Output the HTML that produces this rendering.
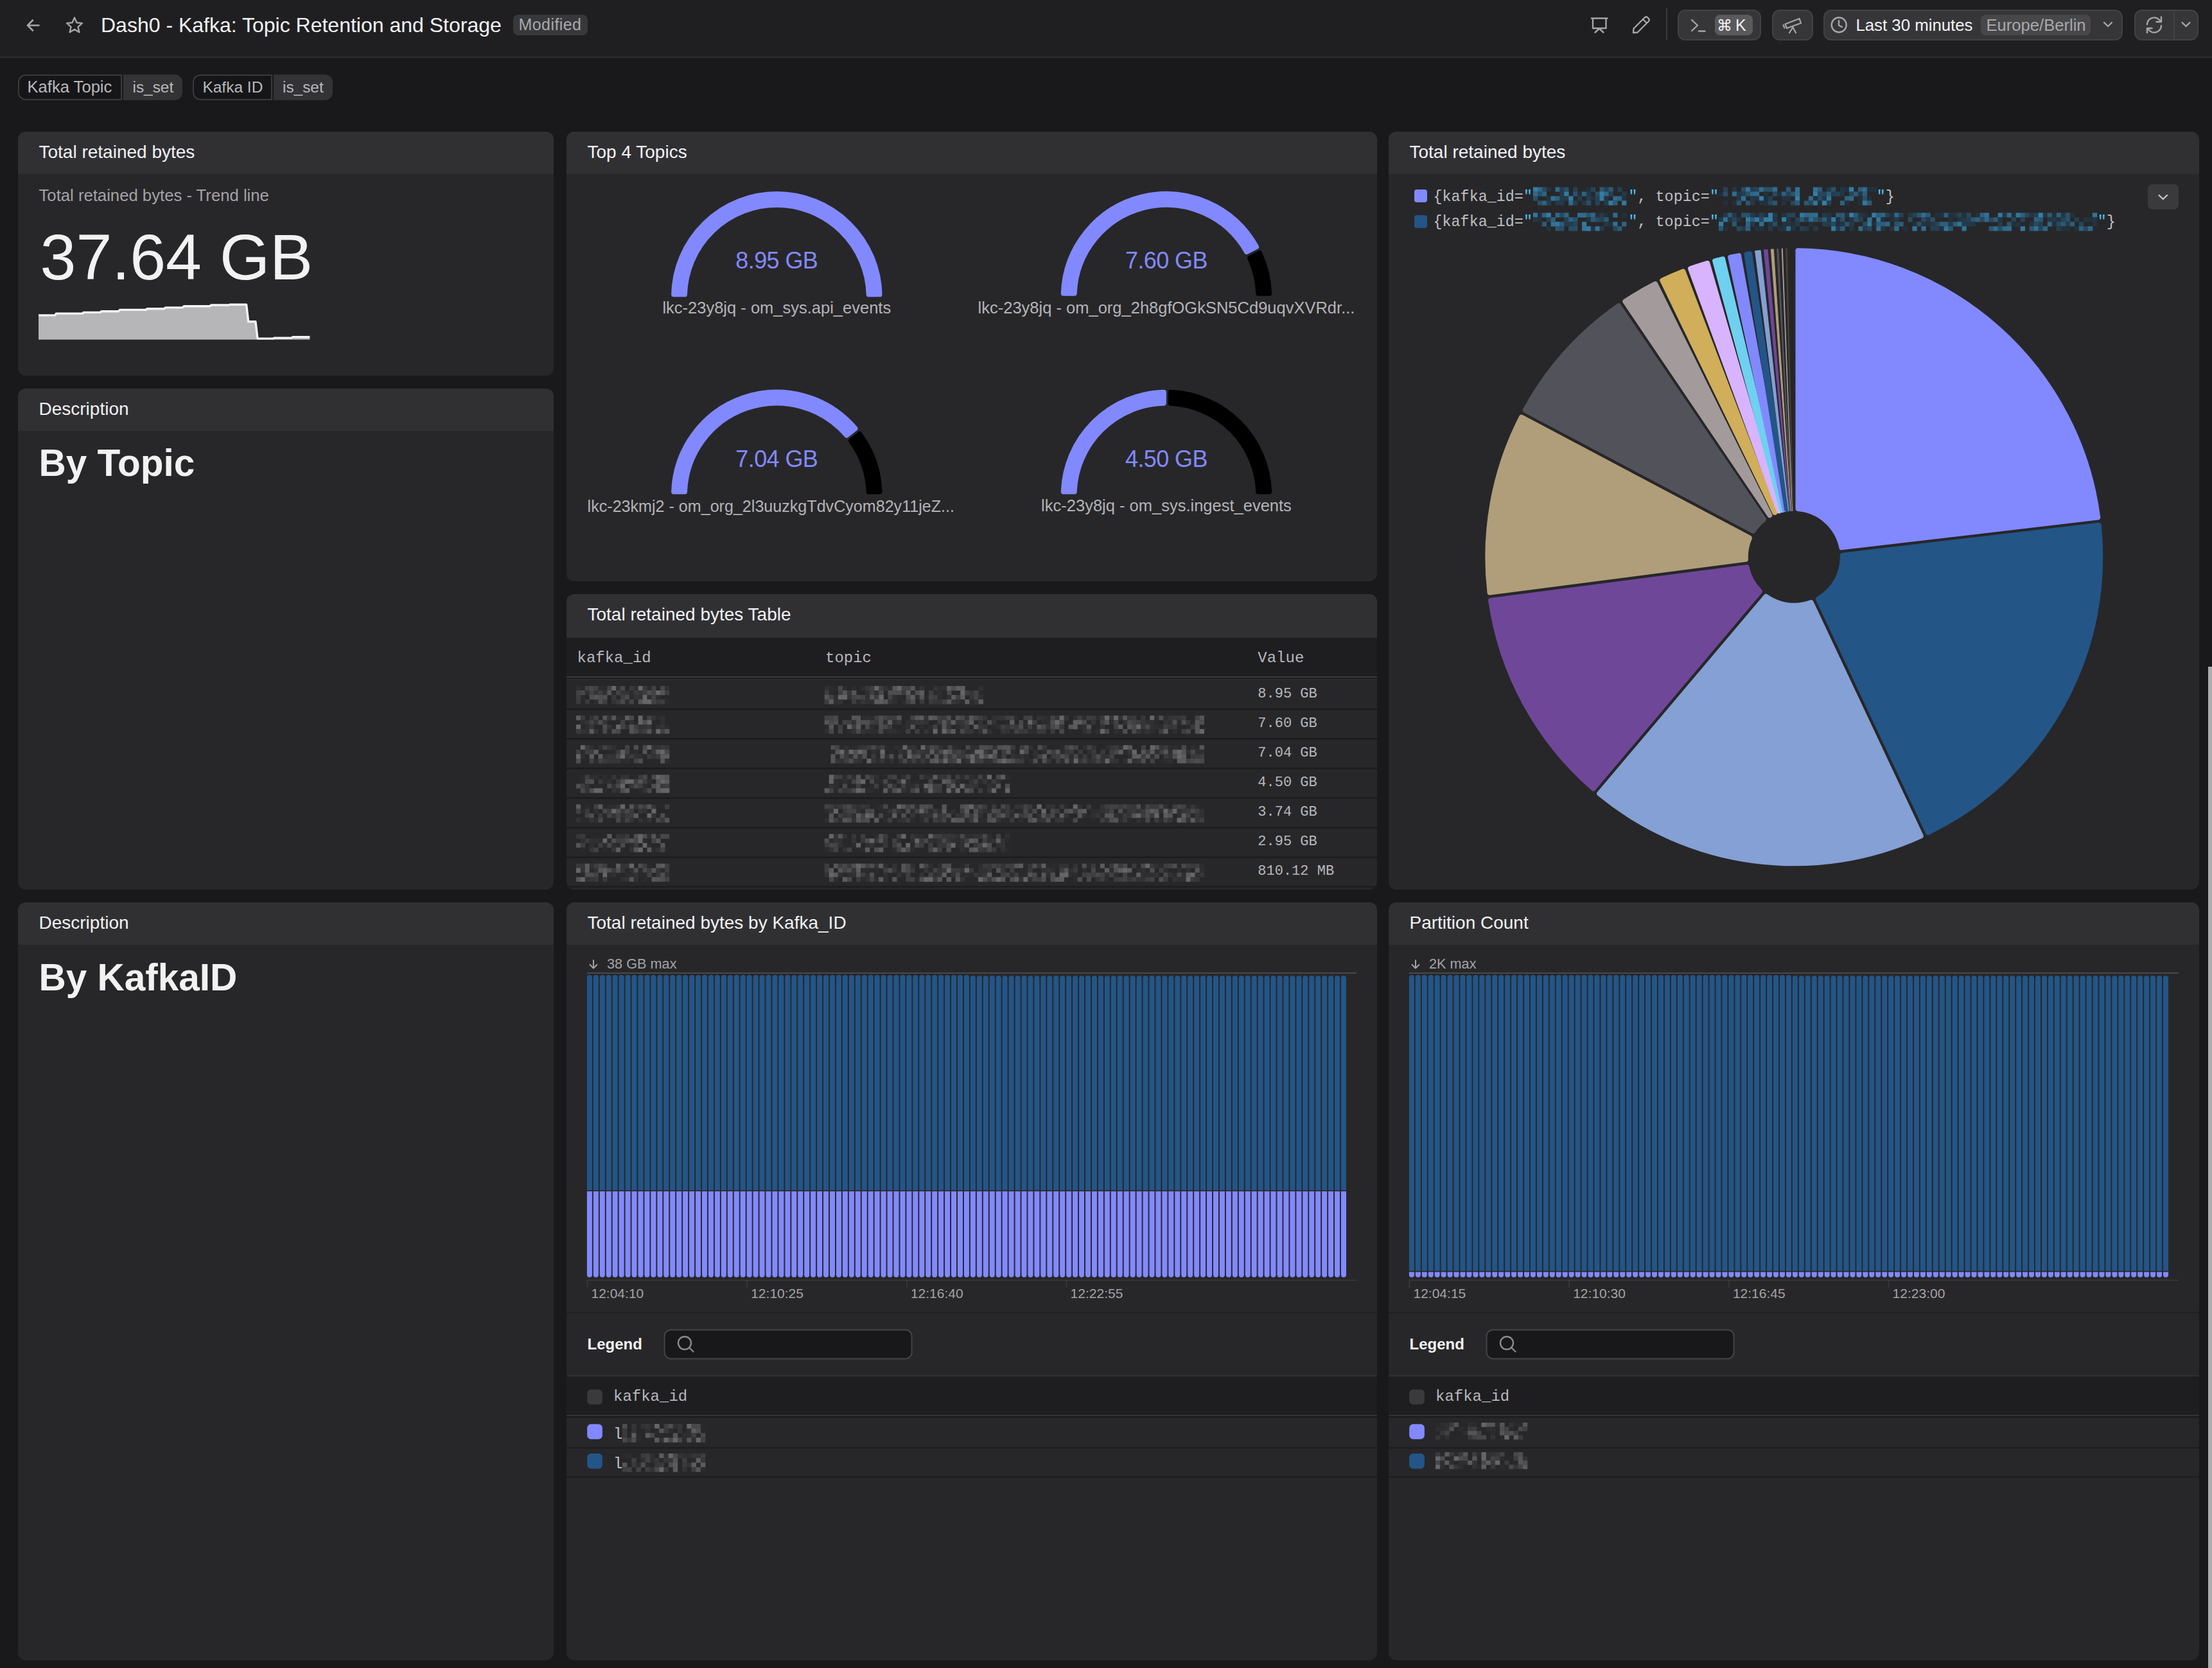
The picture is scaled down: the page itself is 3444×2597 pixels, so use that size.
<!DOCTYPE html><html><head><meta charset="utf-8"><style>
html,body{margin:0;padding:0;background:#19191b;width:3444px;height:2597px;overflow:hidden}
.t{position:absolute;white-space:nowrap;line-height:1;font-family:"Liberation Sans",sans-serif}
.r{position:absolute}
svg{position:absolute;left:0;top:0}
</style></head><body>
<div class="r" style="left:0.0px;top:0.0px;width:3444.0px;height:88.0px;background:#1f1f21;"></div>
<div class="r" style="left:0.0px;top:88.0px;width:3444.0px;height:2.0px;background:#303033;"></div>
<div class="t" style="left:157.0px;top:23.2px;font-size:32px;color:#f2f2f3;font-weight:400;font-family:'Liberation Sans', sans-serif;">Dash0 - Kafka: Topic Retention and Storage</div>
<div class="r" style="left:799.0px;top:23.2px;width:115.6px;height:31.6px;background:#38383b;border-radius:8px"></div>
<div class="t" style="left:807.6px;top:26.0px;font-size:25px;color:#a8a8ac;font-weight:400;font-family:'Liberation Sans', sans-serif;letter-spacing:0.4px">Modified</div>
<div class="r" style="left:28px;top:116px;width:161.5px;height:39.5px;box-sizing:border-box;border:2px solid #3a3a3d;border-right-width:2px;border-radius:12px 0 0 12px;background:#161618"></div>
<div class="r" style="left:192.0px;top:116px;width:92.0px;height:39.5px;background:#333336;border-radius:0 12px 12px 0"></div>
<div class="t" style="left:42.5px;top:122.8px;font-size:25.6px;color:#b9b9bc;font-weight:400;font-family:'Liberation Sans', sans-serif;">Kafka Topic</div>
<div class="t" style="left:206.5px;top:123.8px;font-size:24.4px;color:#b9b9bc;font-weight:400;font-family:'Liberation Sans', sans-serif;">is_set</div>
<div class="r" style="left:300.3px;top:116px;width:123.39999999999998px;height:39.5px;box-sizing:border-box;border:2px solid #3a3a3d;border-right-width:2px;border-radius:12px 0 0 12px;background:#161618"></div>
<div class="r" style="left:426.2px;top:116px;width:91.80000000000001px;height:39.5px;background:#333336;border-radius:0 12px 12px 0"></div>
<div class="t" style="left:315.4px;top:123.8px;font-size:24.5px;color:#b9b9bc;font-weight:400;font-family:'Liberation Sans', sans-serif;">Kafka ID</div>
<div class="t" style="left:440.0px;top:123.8px;font-size:24.4px;color:#b9b9bc;font-weight:400;font-family:'Liberation Sans', sans-serif;">is_set</div>
<svg width="3444" height="100" style="position:absolute;left:0;top:0"><path d="M60.5 39.5 H43.5 M51 31.5 L43 39.5 L51 47.5" stroke="#a6a6aa" stroke-width="2.6" fill="none" stroke-linecap="round" stroke-linejoin="round"/><polygon points="116.0,27.4 119.4,35.3 128.0,36.1 121.5,41.8 123.4,50.2 116.0,45.8 108.6,50.2 110.5,41.8 104.0,36.1 112.6,35.3" stroke="#a6a6aa" stroke-width="2.4" fill="none" stroke-linejoin="round"/><path d="M2478 28.5 H2502.5 M2480 28.5 V44 H2500.5 V28.5 M2483.5 50.5 L2490 44.5 L2496.5 50.5" stroke="#a6a6aa" stroke-width="2.4" fill="none" stroke-linecap="round" stroke-linejoin="round"/><path d="M2543 51 L2543.5 44.5 L2561 27 Q2563 25.5 2565 27 L2567 29 Q2568.5 31 2567 33 L2549.5 50.5 Z M2558 30 L2564 36" stroke="#a6a6aa" stroke-width="2.4" fill="none" stroke-linecap="round" stroke-linejoin="round"/><rect x="2594" y="13" width="2" height="50" fill="#3a3a3d"/></svg>
<div class="r" style="left:2612.3px;top:15px;width:130.19999999999982px;height:47.5px;box-sizing:border-box;background:#363639;border:2px solid #424245;border-radius:12px;"></div>
<div class="r" style="left:2670.0px;top:23.0px;width:58.7px;height:32.0px;background:#5a5a5d;border-radius:8px"></div>
<div class="r" style="left:2759.2px;top:15px;width:63.5px;height:47.5px;box-sizing:border-box;background:#363639;border:2px solid #424245;border-radius:12px;"></div>
<div class="r" style="left:2839px;top:15px;width:466.1999999999998px;height:47.5px;box-sizing:border-box;background:#363639;border:2px solid #424245;border-radius:12px;"></div>
<div class="r" style="left:3084.3px;top:22.5px;width:170.9px;height:32.5px;background:#47474a;border-radius:8px"></div>
<div class="r" style="left:3322.7px;top:15px;width:100.5px;height:47.5px;box-sizing:border-box;background:#363639;border:2px solid #424245;border-radius:12px;"></div>
<div class="r" style="left:3384.0px;top:15.0px;width:2.0px;height:47.5px;background:#424245;"></div>
<div class="t" style="left:2889.4px;top:26.7px;font-size:25.8px;color:#f2f2f3;font-weight:400;font-family:'Liberation Sans', sans-serif;">Last 30 minutes</div>
<div class="t" style="left:3092.5px;top:26.8px;font-size:25.6px;color:#a8a8ac;font-weight:400;font-family:'Liberation Sans', sans-serif;">Europe/Berlin</div>
<div class="t" style="left:2673.0px;top:28.2px;font-size:24px;color:#f2f2f3;font-weight:400;font-family:'Liberation Sans', sans-serif;">⌘</div>
<div class="t" style="left:2702.0px;top:27.3px;font-size:25px;color:#f2f2f3;font-weight:400;font-family:'Liberation Sans', sans-serif;">K</div>
<svg width="3444" height="100" style="position:absolute;left:0;top:0"><path d="M2634 31 L2643 39.5 L2634 48 M2645 48.5 H2654.5" stroke="#a6a6aa" stroke-width="2.4" fill="none" stroke-linecap="round" stroke-linejoin="round"/><path d="M2779.5 37.5 L2801.5 29 L2804 36 L2782 44 Z M2776.5 39 L2778.5 43.5 M2791.5 42.5 L2786 51 M2791.5 42.5 L2796 51" stroke="#a6a6aa" stroke-width="2.2" fill="none" stroke-linecap="round" stroke-linejoin="round"/><circle cx="2863.2" cy="38.8" r="11.5" stroke="#a6a6aa" stroke-width="2.4" fill="none"/><path d="M2863 32 V39.5 L2868 42" stroke="#a6a6aa" stroke-width="2.4" fill="none" stroke-linecap="round"/><path d="M3276 35 L3282 41 L3288 35" stroke="#a6a6aa" stroke-width="2.4" fill="none" stroke-linecap="round" stroke-linejoin="round"/><path d="M3397.5 35 L3403.5 41 L3409.5 35" stroke="#a6a6aa" stroke-width="2.4" fill="none" stroke-linecap="round" stroke-linejoin="round"/><path d="M3343 38 A11 11 0 0 1 3362 31 L3365 34 M3365 26.5 V34 H3357.5 M3365 40 A11 11 0 0 1 3346 47 L3343 44 M3343 51 V44 H3350.5" stroke="#a6a6aa" stroke-width="2.4" fill="none" stroke-linecap="round" stroke-linejoin="round"/></svg>
<div class="r" style="left:28px;top:205px;width:834px;height:380px;background:#272729;border-radius:12px;overflow:hidden"><div class="r" style="left:0;top:0;width:100%;height:66px;background:#303033"></div></div>
<div class="t" style="left:60.5px;top:222.8px;font-size:28px;color:#f2f2f3;font-weight:400;font-family:'Liberation Sans', sans-serif;">Total retained bytes</div>
<div class="r" style="left:28px;top:605px;width:834px;height:780px;background:#272729;border-radius:12px;overflow:hidden"><div class="r" style="left:0;top:0;width:100%;height:66px;background:#303033"></div></div>
<div class="t" style="left:60.5px;top:622.8px;font-size:28px;color:#f2f2f3;font-weight:400;font-family:'Liberation Sans', sans-serif;">Description</div>
<div class="r" style="left:882px;top:205px;width:1262px;height:700px;background:#272729;border-radius:12px;overflow:hidden"><div class="r" style="left:0;top:0;width:100%;height:66px;background:#303033"></div></div>
<div class="t" style="left:914.5px;top:222.8px;font-size:28px;color:#f2f2f3;font-weight:400;font-family:'Liberation Sans', sans-serif;">Top 4 Topics</div>
<div class="r" style="left:882px;top:925px;width:1262px;height:460px;background:#272729;border-radius:12px;overflow:hidden"><div class="r" style="left:0;top:0;width:100%;height:68px;background:#303033"></div></div>
<div class="t" style="left:914.5px;top:942.8px;font-size:28px;color:#f2f2f3;font-weight:400;font-family:'Liberation Sans', sans-serif;">Total retained bytes Table</div>
<div class="r" style="left:2162px;top:205px;width:1262px;height:1180px;background:#272729;border-radius:12px;overflow:hidden"><div class="r" style="left:0;top:0;width:100%;height:66px;background:#303033"></div></div>
<div class="t" style="left:2194.5px;top:222.8px;font-size:28px;color:#f2f2f3;font-weight:400;font-family:'Liberation Sans', sans-serif;">Total retained bytes</div>
<div class="r" style="left:28px;top:1405px;width:834px;height:1180px;background:#272729;border-radius:12px;overflow:hidden"><div class="r" style="left:0;top:0;width:100%;height:66px;background:#303033"></div></div>
<div class="t" style="left:60.5px;top:1422.8px;font-size:28px;color:#f2f2f3;font-weight:400;font-family:'Liberation Sans', sans-serif;">Description</div>
<div class="r" style="left:882px;top:1405px;width:1262px;height:1180px;background:#272729;border-radius:12px;overflow:hidden"><div class="r" style="left:0;top:0;width:100%;height:66px;background:#303033"></div></div>
<div class="t" style="left:914.5px;top:1422.8px;font-size:28px;color:#f2f2f3;font-weight:400;font-family:'Liberation Sans', sans-serif;">Total retained bytes by Kafka_ID</div>
<div class="r" style="left:2162px;top:1405px;width:1262px;height:1180px;background:#272729;border-radius:12px;overflow:hidden"><div class="r" style="left:0;top:0;width:100%;height:66px;background:#303033"></div></div>
<div class="t" style="left:2194.5px;top:1422.8px;font-size:28px;color:#f2f2f3;font-weight:400;font-family:'Liberation Sans', sans-serif;">Partition Count</div>
<div class="t" style="left:60.5px;top:292.2px;font-size:25.7px;color:#a3a3a7;font-weight:400;font-family:'Liberation Sans', sans-serif;">Total retained bytes - Trend line</div>
<div class="t" style="left:62.5px;top:349.9px;font-size:100.5px;color:#f2f2f3;font-weight:400;font-family:'Liberation Sans', sans-serif;">37.64 GB</div>
<svg width="900" height="600"><path d="M60,528.8 L60,490.9 L85.6,490.9 L87.6,488.1 L128.3,488.1 L130.3,486.4 L155.8,486.4 L157.8,484.8 L184.3,484.8 L186.7,482.4 L227,482.4 L229,480.7 L255.5,480.7 L257.5,478.9 L284,478.9 L286.4,476.7 L326.7,476.7 L328.7,475 L356.2,475 L358.2,474.2 L383.6,474.2 L386.7,500.7 L397.9,500.7 L401,527.1 L425.3,527.1 L427.4,526.1 L453.8,526.1 L455.9,524.7 L482.3,524.7 L482.3,528.8 Z" fill="#b6b6b9"/><path d="M60,490.9 L85.6,490.9 L87.6,488.1 L128.3,488.1 L130.3,486.4 L155.8,486.4 L157.8,484.8 L184.3,484.8 L186.7,482.4 L227,482.4 L229,480.7 L255.5,480.7 L257.5,478.9 L284,478.9 L286.4,476.7 L326.7,476.7 L328.7,475 L356.2,475 L358.2,474.2 L383.6,474.2 L386.7,500.7 L397.9,500.7 L401,527.1 L425.3,527.1 L427.4,526.1 L453.8,526.1 L455.9,524.7 L482.3,524.7" stroke="#f4f4f5" stroke-width="3.4" fill="none" stroke-linejoin="round"/></svg>
<div class="t" style="left:60.5px;top:691.5px;font-size:58.5px;color:#f2f2f3;font-weight:700;font-family:'Liberation Sans', sans-serif;">By Topic</div>
<div class="t" style="left:60.5px;top:1493.0px;font-size:58.5px;color:#f2f2f3;font-weight:700;font-family:'Liberation Sans', sans-serif;">By KafkaID</div>
<svg width="3444" height="1000"><path d="M1049.10,458.30 A160.3,160.3 0 0 1 1369.60,458.30 L1352.69,458.30 A143.4,143.4 0 0 0 1066.01,458.30 Z" fill="#8289ff" stroke="#8289ff" stroke-width="8" stroke-linejoin="round"/><path d="M1655.79,456.80 A160.3,160.3 0 0 1 1956.04,384.30 L1940.99,392.02 A143.4,143.4 0 0 0 1672.71,456.80 Z" fill="#8289ff" stroke="#8289ff" stroke-width="8" stroke-linejoin="round"/><path d="M1961.06,394.09 A160.3,160.3 0 0 1 1976.21,456.80 L1959.29,456.80 A143.4,143.4 0 0 0 1946.01,401.80 Z" fill="#000" stroke="#000" stroke-width="8" stroke-linejoin="round"/><path d="M1049.14,765.50 A160.3,160.3 0 0 1 1331.46,667.15 L1318.21,677.66 A143.4,143.4 0 0 0 1066.06,765.50 Z" fill="#8289ff" stroke="#8289ff" stroke-width="8" stroke-linejoin="round"/><path d="M1338.30,675.77 A160.3,160.3 0 0 1 1369.56,765.50 L1352.64,765.50 A143.4,143.4 0 0 0 1325.05,686.28 Z" fill="#000" stroke="#000" stroke-width="8" stroke-linejoin="round"/><path d="M1655.79,765.50 A160.3,160.3 0 0 1 1811.91,610.75 L1811.76,627.66 A143.4,143.4 0 0 0 1672.71,765.50 Z" fill="#8289ff" stroke="#8289ff" stroke-width="8" stroke-linejoin="round"/><path d="M1822.91,610.85 A160.3,160.3 0 0 1 1976.21,765.50 L1959.29,765.50 A143.4,143.4 0 0 0 1822.76,627.76 Z" fill="#000" stroke="#000" stroke-width="8" stroke-linejoin="round"/></svg>
<div class="t" style="left:209.3px;width:2000px;text-align:center;top:388.3px;font-size:36px;color:#8289ff;font-weight:400;font-family:'Liberation Sans', sans-serif;letter-spacing:-0.6px">8.95 GB</div>
<div class="t" style="left:209.3px;width:2000px;text-align:center;top:466.5px;font-size:25.5px;color:#b4b4b8;font-weight:400;font-family:'Liberation Sans', sans-serif;">lkc-23y8jq - om_sys.api_events</div>
<div class="t" style="left:816.0px;width:2000px;text-align:center;top:388.3px;font-size:36px;color:#8289ff;font-weight:400;font-family:'Liberation Sans', sans-serif;letter-spacing:-0.6px">7.60 GB</div>
<div class="t" style="left:816.0px;width:2000px;text-align:center;top:466.5px;font-size:25.5px;color:#b4b4b8;font-weight:400;font-family:'Liberation Sans', sans-serif;">lkc-23y8jq - om_org_2h8gfOGkSN5Cd9uqvXVRdr...</div>
<div class="t" style="left:209.3px;width:2000px;text-align:center;top:697.0px;font-size:36px;color:#8289ff;font-weight:400;font-family:'Liberation Sans', sans-serif;letter-spacing:-0.6px">7.04 GB</div>
<div class="t" style="left:200.3px;width:2000px;text-align:center;top:775.5px;font-size:25.1px;color:#b4b4b8;font-weight:400;font-family:'Liberation Sans', sans-serif;">lkc-23kmj2 - om_org_2l3uuzkgTdvCyom82y11jeZ...</div>
<div class="t" style="left:816.0px;width:2000px;text-align:center;top:697.0px;font-size:36px;color:#8289ff;font-weight:400;font-family:'Liberation Sans', sans-serif;letter-spacing:-0.6px">4.50 GB</div>
<div class="t" style="left:816.0px;width:2000px;text-align:center;top:775.2px;font-size:25.5px;color:#b4b4b8;font-weight:400;font-family:'Liberation Sans', sans-serif;">lkc-23y8jq - om_sys.ingest_events</div>
<div class="r" style="left:882.0px;top:993.0px;width:1262.0px;height:60.5px;background:#1e1e21;"></div>
<div class="r" style="left:882.0px;top:1053.0px;width:1262.0px;height:2.0px;background:#3a3a3d;"></div>
<div class="r" style="left:882.0px;top:1055.0px;width:1262.0px;height:2.0px;background:#1c1c1f;"></div>
<div class="r" style="left:882.0px;top:1057.0px;width:1262.0px;height:1.6px;background:#2d2d30;"></div>
<div class="t" style="left:898.5px;top:1012.6px;font-size:24px;color:#b8b8bc;font-weight:400;font-family:'Liberation Mono', monospace;">kafka_id</div>
<div class="t" style="left:1285.0px;top:1012.6px;font-size:24px;color:#b8b8bc;font-weight:400;font-family:'Liberation Mono', monospace;">topic</div>
<div class="t" style="left:1958.3px;top:1012.6px;font-size:24px;color:#b8b8bc;font-weight:400;font-family:'Liberation Mono', monospace;">Value</div>
<div class="t" style="left:1958.3px;top:1069.8px;font-size:22px;color:#b8b8bc;font-weight:400;font-family:'Liberation Mono', monospace;">8.95 GB</div>
<div class="t" style="left:1958.3px;top:1115.9px;font-size:22px;color:#b8b8bc;font-weight:400;font-family:'Liberation Mono', monospace;">7.60 GB</div>
<div class="t" style="left:1958.3px;top:1162.0px;font-size:22px;color:#b8b8bc;font-weight:400;font-family:'Liberation Mono', monospace;">7.04 GB</div>
<div class="t" style="left:1958.3px;top:1208.1px;font-size:22px;color:#b8b8bc;font-weight:400;font-family:'Liberation Mono', monospace;">4.50 GB</div>
<div class="t" style="left:1958.3px;top:1254.2px;font-size:22px;color:#b8b8bc;font-weight:400;font-family:'Liberation Mono', monospace;">3.74 GB</div>
<div class="t" style="left:1958.3px;top:1300.3px;font-size:22px;color:#b8b8bc;font-weight:400;font-family:'Liberation Mono', monospace;">2.95 GB</div>
<div class="t" style="left:1958.3px;top:1346.4px;font-size:22px;color:#b8b8bc;font-weight:400;font-family:'Liberation Mono', monospace;">810.12 MB</div>
<svg width="3444" height="1400"><rect x="882" y="1103.1" width="1262" height="2.2" fill="#1b1b1e"/><rect x="897.0" y="1068.0" width="7.2" height="7.3" fill="#2e2e30"/><rect x="903.9" y="1068.0" width="7.2" height="7.3" fill="#2a2a2c"/><rect x="910.8" y="1068.0" width="7.2" height="7.3" fill="#424244"/><rect x="917.7" y="1068.0" width="7.2" height="7.3" fill="#48484a"/><rect x="924.6" y="1068.0" width="7.2" height="7.3" fill="#424244"/><rect x="931.5" y="1068.0" width="7.2" height="7.3" fill="#2c2c2e"/><rect x="938.4" y="1068.0" width="7.2" height="7.3" fill="#2c2c2e"/><rect x="945.3" y="1068.0" width="7.2" height="7.3" fill="#424244"/><rect x="952.2" y="1068.0" width="7.2" height="7.3" fill="#666668"/><rect x="959.1" y="1068.0" width="7.2" height="7.3" fill="#303032"/><rect x="966.0" y="1068.0" width="7.2" height="7.3" fill="#48484a"/><rect x="979.9" y="1068.0" width="7.2" height="7.3" fill="#3a3a3c"/><rect x="986.8" y="1068.0" width="7.2" height="7.3" fill="#303032"/><rect x="993.7" y="1068.0" width="7.2" height="7.3" fill="#666668"/><rect x="1000.6" y="1068.0" width="7.2" height="7.3" fill="#3a3a3c"/><rect x="1007.5" y="1068.0" width="7.2" height="7.3" fill="#2c2c2e"/><rect x="1014.4" y="1068.0" width="7.2" height="7.3" fill="#424244"/><rect x="1028.2" y="1068.0" width="7.2" height="7.3" fill="#48484a"/><rect x="1035.1" y="1068.0" width="7.2" height="7.3" fill="#303032"/><rect x="897.0" y="1075.0" width="7.2" height="7.3" fill="#424244"/><rect x="903.9" y="1075.0" width="7.2" height="7.3" fill="#48484a"/><rect x="910.8" y="1075.0" width="7.2" height="7.3" fill="#303032"/><rect x="917.7" y="1075.0" width="7.2" height="7.3" fill="#424244"/><rect x="924.6" y="1075.0" width="7.2" height="7.3" fill="#363638"/><rect x="931.5" y="1075.0" width="7.2" height="7.3" fill="#3e3e40"/><rect x="938.4" y="1075.0" width="7.2" height="7.3" fill="#303032"/><rect x="945.3" y="1075.0" width="7.2" height="7.3" fill="#555557"/><rect x="952.2" y="1075.0" width="7.2" height="7.3" fill="#2c2c2e"/><rect x="959.1" y="1075.0" width="7.2" height="7.3" fill="#424244"/><rect x="966.0" y="1075.0" width="7.2" height="7.3" fill="#363638"/><rect x="973.0" y="1075.0" width="7.2" height="7.3" fill="#333335"/><rect x="979.9" y="1075.0" width="7.2" height="7.3" fill="#2c2c2e"/><rect x="986.8" y="1075.0" width="7.2" height="7.3" fill="#3a3a3c"/><rect x="993.7" y="1075.0" width="7.2" height="7.3" fill="#363638"/><rect x="1000.6" y="1075.0" width="7.2" height="7.3" fill="#3e3e40"/><rect x="1007.5" y="1075.0" width="7.2" height="7.3" fill="#4e4e50"/><rect x="1014.4" y="1075.0" width="7.2" height="7.3" fill="#424244"/><rect x="1021.3" y="1075.0" width="7.2" height="7.3" fill="#666668"/><rect x="1028.2" y="1075.0" width="7.2" height="7.3" fill="#555557"/><rect x="1035.1" y="1075.0" width="7.2" height="7.3" fill="#3e3e40"/><rect x="897.0" y="1082.0" width="7.2" height="7.3" fill="#3e3e40"/><rect x="903.9" y="1082.0" width="7.2" height="7.3" fill="#2c2c2e"/><rect x="917.7" y="1082.0" width="7.2" height="7.3" fill="#4e4e50"/><rect x="924.6" y="1082.0" width="7.2" height="7.3" fill="#555557"/><rect x="931.5" y="1082.0" width="7.2" height="7.3" fill="#4e4e50"/><rect x="938.4" y="1082.0" width="7.2" height="7.3" fill="#4e4e50"/><rect x="952.2" y="1082.0" width="7.2" height="7.3" fill="#3a3a3c"/><rect x="966.0" y="1082.0" width="7.2" height="7.3" fill="#3e3e40"/><rect x="973.0" y="1082.0" width="7.2" height="7.3" fill="#48484a"/><rect x="979.9" y="1082.0" width="7.2" height="7.3" fill="#2a2a2c"/><rect x="986.8" y="1082.0" width="7.2" height="7.3" fill="#333335"/><rect x="993.7" y="1082.0" width="7.2" height="7.3" fill="#303032"/><rect x="1000.6" y="1082.0" width="7.2" height="7.3" fill="#666668"/><rect x="1007.5" y="1082.0" width="7.2" height="7.3" fill="#2e2e30"/><rect x="1014.4" y="1082.0" width="7.2" height="7.3" fill="#424244"/><rect x="1021.3" y="1082.0" width="7.2" height="7.3" fill="#2e2e30"/><rect x="897.0" y="1089.0" width="7.2" height="7.3" fill="#3a3a3c"/><rect x="910.8" y="1089.0" width="7.2" height="7.3" fill="#3a3a3c"/><rect x="924.6" y="1089.0" width="7.2" height="7.3" fill="#2e2e30"/><rect x="931.5" y="1089.0" width="7.2" height="7.3" fill="#4e4e50"/><rect x="938.4" y="1089.0" width="7.2" height="7.3" fill="#3e3e40"/><rect x="952.2" y="1089.0" width="7.2" height="7.3" fill="#333335"/><rect x="959.1" y="1089.0" width="7.2" height="7.3" fill="#3a3a3c"/><rect x="966.0" y="1089.0" width="7.2" height="7.3" fill="#48484a"/><rect x="973.0" y="1089.0" width="7.2" height="7.3" fill="#2e2e30"/><rect x="979.9" y="1089.0" width="7.2" height="7.3" fill="#424244"/><rect x="993.7" y="1089.0" width="7.2" height="7.3" fill="#555557"/><rect x="1000.6" y="1089.0" width="7.2" height="7.3" fill="#666668"/><rect x="1007.5" y="1089.0" width="7.2" height="7.3" fill="#666668"/><rect x="1014.4" y="1089.0" width="7.2" height="7.3" fill="#424244"/><rect x="1021.3" y="1089.0" width="7.2" height="7.3" fill="#3a3a3c"/><rect x="1028.2" y="1089.0" width="7.2" height="7.3" fill="#3e3e40"/><rect x="1035.1" y="1089.0" width="7.2" height="7.3" fill="#2a2a2c"/><rect x="1283.7" y="1068.0" width="7.4" height="7.3" fill="#303032"/><rect x="1290.8" y="1068.0" width="7.4" height="7.3" fill="#2c2c2e"/><rect x="1297.8" y="1068.0" width="7.4" height="7.3" fill="#2a2a2c"/><rect x="1304.9" y="1068.0" width="7.4" height="7.3" fill="#48484a"/><rect x="1311.9" y="1068.0" width="7.4" height="7.3" fill="#2c2c2e"/><rect x="1326.0" y="1068.0" width="7.4" height="7.3" fill="#2c2c2e"/><rect x="1340.1" y="1068.0" width="7.4" height="7.3" fill="#2e2e30"/><rect x="1347.2" y="1068.0" width="7.4" height="7.3" fill="#363638"/><rect x="1354.2" y="1068.0" width="7.4" height="7.3" fill="#3e3e40"/><rect x="1361.3" y="1068.0" width="7.4" height="7.3" fill="#666668"/><rect x="1368.4" y="1068.0" width="7.4" height="7.3" fill="#3e3e40"/><rect x="1375.4" y="1068.0" width="7.4" height="7.3" fill="#333335"/><rect x="1382.5" y="1068.0" width="7.4" height="7.3" fill="#2c2c2e"/><rect x="1389.5" y="1068.0" width="7.4" height="7.3" fill="#555557"/><rect x="1396.6" y="1068.0" width="7.4" height="7.3" fill="#666668"/><rect x="1403.6" y="1068.0" width="7.4" height="7.3" fill="#424244"/><rect x="1410.7" y="1068.0" width="7.4" height="7.3" fill="#424244"/><rect x="1417.7" y="1068.0" width="7.4" height="7.3" fill="#555557"/><rect x="1424.8" y="1068.0" width="7.4" height="7.3" fill="#2a2a2c"/><rect x="1431.8" y="1068.0" width="7.4" height="7.3" fill="#333335"/><rect x="1453.0" y="1068.0" width="7.4" height="7.3" fill="#333335"/><rect x="1460.1" y="1068.0" width="7.4" height="7.3" fill="#2e2e30"/><rect x="1467.1" y="1068.0" width="7.4" height="7.3" fill="#303032"/><rect x="1474.2" y="1068.0" width="7.4" height="7.3" fill="#5c5c5e"/><rect x="1481.2" y="1068.0" width="7.4" height="7.3" fill="#4e4e50"/><rect x="1488.3" y="1068.0" width="7.4" height="7.3" fill="#5c5c5e"/><rect x="1495.3" y="1068.0" width="7.4" height="7.3" fill="#5c5c5e"/><rect x="1523.5" y="1068.0" width="7.4" height="7.3" fill="#303032"/><rect x="1283.7" y="1075.0" width="7.4" height="7.3" fill="#3e3e40"/><rect x="1290.8" y="1075.0" width="7.4" height="7.3" fill="#2a2a2c"/><rect x="1304.9" y="1075.0" width="7.4" height="7.3" fill="#3e3e40"/><rect x="1311.9" y="1075.0" width="7.4" height="7.3" fill="#555557"/><rect x="1319.0" y="1075.0" width="7.4" height="7.3" fill="#363638"/><rect x="1326.0" y="1075.0" width="7.4" height="7.3" fill="#555557"/><rect x="1347.2" y="1075.0" width="7.4" height="7.3" fill="#303032"/><rect x="1354.2" y="1075.0" width="7.4" height="7.3" fill="#3e3e40"/><rect x="1361.3" y="1075.0" width="7.4" height="7.3" fill="#303032"/><rect x="1368.4" y="1075.0" width="7.4" height="7.3" fill="#48484a"/><rect x="1382.5" y="1075.0" width="7.4" height="7.3" fill="#4e4e50"/><rect x="1389.5" y="1075.0" width="7.4" height="7.3" fill="#4e4e50"/><rect x="1396.6" y="1075.0" width="7.4" height="7.3" fill="#4e4e50"/><rect x="1403.6" y="1075.0" width="7.4" height="7.3" fill="#3a3a3c"/><rect x="1410.7" y="1075.0" width="7.4" height="7.3" fill="#5c5c5e"/><rect x="1417.7" y="1075.0" width="7.4" height="7.3" fill="#2e2e30"/><rect x="1424.8" y="1075.0" width="7.4" height="7.3" fill="#4e4e50"/><rect x="1431.8" y="1075.0" width="7.4" height="7.3" fill="#5c5c5e"/><rect x="1445.9" y="1075.0" width="7.4" height="7.3" fill="#3e3e40"/><rect x="1453.0" y="1075.0" width="7.4" height="7.3" fill="#2c2c2e"/><rect x="1460.1" y="1075.0" width="7.4" height="7.3" fill="#2e2e30"/><rect x="1474.2" y="1075.0" width="7.4" height="7.3" fill="#48484a"/><rect x="1495.3" y="1075.0" width="7.4" height="7.3" fill="#666668"/><rect x="1502.4" y="1075.0" width="7.4" height="7.3" fill="#3e3e40"/><rect x="1509.4" y="1075.0" width="7.4" height="7.3" fill="#363638"/><rect x="1516.5" y="1075.0" width="7.4" height="7.3" fill="#424244"/><rect x="1523.5" y="1075.0" width="7.4" height="7.3" fill="#2a2a2c"/><rect x="1283.7" y="1082.0" width="7.4" height="7.3" fill="#555557"/><rect x="1290.8" y="1082.0" width="7.4" height="7.3" fill="#424244"/><rect x="1297.8" y="1082.0" width="7.4" height="7.3" fill="#2e2e30"/><rect x="1304.9" y="1082.0" width="7.4" height="7.3" fill="#666668"/><rect x="1311.9" y="1082.0" width="7.4" height="7.3" fill="#666668"/><rect x="1319.0" y="1082.0" width="7.4" height="7.3" fill="#333335"/><rect x="1326.0" y="1082.0" width="7.4" height="7.3" fill="#424244"/><rect x="1333.1" y="1082.0" width="7.4" height="7.3" fill="#48484a"/><rect x="1340.1" y="1082.0" width="7.4" height="7.3" fill="#424244"/><rect x="1347.2" y="1082.0" width="7.4" height="7.3" fill="#2e2e30"/><rect x="1354.2" y="1082.0" width="7.4" height="7.3" fill="#555557"/><rect x="1361.3" y="1082.0" width="7.4" height="7.3" fill="#3e3e40"/><rect x="1368.4" y="1082.0" width="7.4" height="7.3" fill="#666668"/><rect x="1382.5" y="1082.0" width="7.4" height="7.3" fill="#424244"/><rect x="1389.5" y="1082.0" width="7.4" height="7.3" fill="#2e2e30"/><rect x="1396.6" y="1082.0" width="7.4" height="7.3" fill="#2a2a2c"/><rect x="1410.7" y="1082.0" width="7.4" height="7.3" fill="#48484a"/><rect x="1417.7" y="1082.0" width="7.4" height="7.3" fill="#5c5c5e"/><rect x="1424.8" y="1082.0" width="7.4" height="7.3" fill="#2e2e30"/><rect x="1431.8" y="1082.0" width="7.4" height="7.3" fill="#555557"/><rect x="1438.9" y="1082.0" width="7.4" height="7.3" fill="#2a2a2c"/><rect x="1445.9" y="1082.0" width="7.4" height="7.3" fill="#424244"/><rect x="1453.0" y="1082.0" width="7.4" height="7.3" fill="#3e3e40"/><rect x="1460.1" y="1082.0" width="7.4" height="7.3" fill="#2c2c2e"/><rect x="1474.2" y="1082.0" width="7.4" height="7.3" fill="#303032"/><rect x="1481.2" y="1082.0" width="7.4" height="7.3" fill="#5c5c5e"/><rect x="1488.3" y="1082.0" width="7.4" height="7.3" fill="#3e3e40"/><rect x="1495.3" y="1082.0" width="7.4" height="7.3" fill="#5c5c5e"/><rect x="1509.4" y="1082.0" width="7.4" height="7.3" fill="#363638"/><rect x="1516.5" y="1082.0" width="7.4" height="7.3" fill="#424244"/><rect x="1523.5" y="1082.0" width="7.4" height="7.3" fill="#303032"/><rect x="1283.7" y="1089.0" width="7.4" height="7.3" fill="#3e3e40"/><rect x="1290.8" y="1089.0" width="7.4" height="7.3" fill="#5c5c5e"/><rect x="1297.8" y="1089.0" width="7.4" height="7.3" fill="#303032"/><rect x="1304.9" y="1089.0" width="7.4" height="7.3" fill="#333335"/><rect x="1326.0" y="1089.0" width="7.4" height="7.3" fill="#3e3e40"/><rect x="1333.1" y="1089.0" width="7.4" height="7.3" fill="#2c2c2e"/><rect x="1340.1" y="1089.0" width="7.4" height="7.3" fill="#363638"/><rect x="1347.2" y="1089.0" width="7.4" height="7.3" fill="#303032"/><rect x="1354.2" y="1089.0" width="7.4" height="7.3" fill="#303032"/><rect x="1361.3" y="1089.0" width="7.4" height="7.3" fill="#5c5c5e"/><rect x="1368.4" y="1089.0" width="7.4" height="7.3" fill="#5c5c5e"/><rect x="1375.4" y="1089.0" width="7.4" height="7.3" fill="#555557"/><rect x="1382.5" y="1089.0" width="7.4" height="7.3" fill="#363638"/><rect x="1389.5" y="1089.0" width="7.4" height="7.3" fill="#2e2e30"/><rect x="1403.6" y="1089.0" width="7.4" height="7.3" fill="#2c2c2e"/><rect x="1410.7" y="1089.0" width="7.4" height="7.3" fill="#3e3e40"/><rect x="1417.7" y="1089.0" width="7.4" height="7.3" fill="#4e4e50"/><rect x="1431.8" y="1089.0" width="7.4" height="7.3" fill="#3a3a3c"/><rect x="1445.9" y="1089.0" width="7.4" height="7.3" fill="#3a3a3c"/><rect x="1453.0" y="1089.0" width="7.4" height="7.3" fill="#363638"/><rect x="1460.1" y="1089.0" width="7.4" height="7.3" fill="#363638"/><rect x="1467.1" y="1089.0" width="7.4" height="7.3" fill="#424244"/><rect x="1474.2" y="1089.0" width="7.4" height="7.3" fill="#555557"/><rect x="1481.2" y="1089.0" width="7.4" height="7.3" fill="#363638"/><rect x="1488.3" y="1089.0" width="7.4" height="7.3" fill="#333335"/><rect x="1495.3" y="1089.0" width="7.4" height="7.3" fill="#2c2c2e"/><rect x="1502.4" y="1089.0" width="7.4" height="7.3" fill="#5c5c5e"/><rect x="1509.4" y="1089.0" width="7.4" height="7.3" fill="#2c2c2e"/><rect x="1516.5" y="1089.0" width="7.4" height="7.3" fill="#333335"/><rect x="1523.5" y="1089.0" width="7.4" height="7.3" fill="#5c5c5e"/><rect x="882" y="1149.2" width="1262" height="2.2" fill="#1b1b1e"/><rect x="897.0" y="1114.1" width="7.2" height="7.3" fill="#5c5c5e"/><rect x="903.9" y="1114.1" width="7.2" height="7.3" fill="#3a3a3c"/><rect x="917.7" y="1114.1" width="7.2" height="7.3" fill="#333335"/><rect x="924.6" y="1114.1" width="7.2" height="7.3" fill="#424244"/><rect x="938.4" y="1114.1" width="7.2" height="7.3" fill="#555557"/><rect x="945.3" y="1114.1" width="7.2" height="7.3" fill="#333335"/><rect x="952.2" y="1114.1" width="7.2" height="7.3" fill="#555557"/><rect x="959.1" y="1114.1" width="7.2" height="7.3" fill="#2c2c2e"/><rect x="966.0" y="1114.1" width="7.2" height="7.3" fill="#2a2a2c"/><rect x="973.0" y="1114.1" width="7.2" height="7.3" fill="#5c5c5e"/><rect x="979.9" y="1114.1" width="7.2" height="7.3" fill="#48484a"/><rect x="993.7" y="1114.1" width="7.2" height="7.3" fill="#666668"/><rect x="1000.6" y="1114.1" width="7.2" height="7.3" fill="#2a2a2c"/><rect x="1007.5" y="1114.1" width="7.2" height="7.3" fill="#424244"/><rect x="1014.4" y="1114.1" width="7.2" height="7.3" fill="#333335"/><rect x="1021.3" y="1114.1" width="7.2" height="7.3" fill="#2a2a2c"/><rect x="1028.2" y="1114.1" width="7.2" height="7.3" fill="#303032"/><rect x="903.9" y="1121.1" width="7.2" height="7.3" fill="#2e2e30"/><rect x="910.8" y="1121.1" width="7.2" height="7.3" fill="#333335"/><rect x="917.7" y="1121.1" width="7.2" height="7.3" fill="#424244"/><rect x="924.6" y="1121.1" width="7.2" height="7.3" fill="#333335"/><rect x="931.5" y="1121.1" width="7.2" height="7.3" fill="#4e4e50"/><rect x="938.4" y="1121.1" width="7.2" height="7.3" fill="#363638"/><rect x="959.1" y="1121.1" width="7.2" height="7.3" fill="#2a2a2c"/><rect x="966.0" y="1121.1" width="7.2" height="7.3" fill="#424244"/><rect x="979.9" y="1121.1" width="7.2" height="7.3" fill="#303032"/><rect x="993.7" y="1121.1" width="7.2" height="7.3" fill="#666668"/><rect x="1000.6" y="1121.1" width="7.2" height="7.3" fill="#4e4e50"/><rect x="1007.5" y="1121.1" width="7.2" height="7.3" fill="#666668"/><rect x="1028.2" y="1121.1" width="7.2" height="7.3" fill="#303032"/><rect x="897.0" y="1128.1" width="7.2" height="7.3" fill="#666668"/><rect x="910.8" y="1128.1" width="7.2" height="7.3" fill="#2e2e30"/><rect x="917.7" y="1128.1" width="7.2" height="7.3" fill="#363638"/><rect x="938.4" y="1128.1" width="7.2" height="7.3" fill="#4e4e50"/><rect x="945.3" y="1128.1" width="7.2" height="7.3" fill="#333335"/><rect x="952.2" y="1128.1" width="7.2" height="7.3" fill="#2a2a2c"/><rect x="959.1" y="1128.1" width="7.2" height="7.3" fill="#666668"/><rect x="966.0" y="1128.1" width="7.2" height="7.3" fill="#424244"/><rect x="973.0" y="1128.1" width="7.2" height="7.3" fill="#333335"/><rect x="979.9" y="1128.1" width="7.2" height="7.3" fill="#555557"/><rect x="986.8" y="1128.1" width="7.2" height="7.3" fill="#3e3e40"/><rect x="993.7" y="1128.1" width="7.2" height="7.3" fill="#333335"/><rect x="1000.6" y="1128.1" width="7.2" height="7.3" fill="#333335"/><rect x="1007.5" y="1128.1" width="7.2" height="7.3" fill="#363638"/><rect x="1021.3" y="1128.1" width="7.2" height="7.3" fill="#303032"/><rect x="1028.2" y="1128.1" width="7.2" height="7.3" fill="#333335"/><rect x="1035.1" y="1128.1" width="7.2" height="7.3" fill="#2e2e30"/><rect x="897.0" y="1135.1" width="7.2" height="7.3" fill="#3a3a3c"/><rect x="903.9" y="1135.1" width="7.2" height="7.3" fill="#333335"/><rect x="910.8" y="1135.1" width="7.2" height="7.3" fill="#303032"/><rect x="917.7" y="1135.1" width="7.2" height="7.3" fill="#5c5c5e"/><rect x="924.6" y="1135.1" width="7.2" height="7.3" fill="#333335"/><rect x="938.4" y="1135.1" width="7.2" height="7.3" fill="#48484a"/><rect x="945.3" y="1135.1" width="7.2" height="7.3" fill="#2a2a2c"/><rect x="952.2" y="1135.1" width="7.2" height="7.3" fill="#4e4e50"/><rect x="959.1" y="1135.1" width="7.2" height="7.3" fill="#48484a"/><rect x="979.9" y="1135.1" width="7.2" height="7.3" fill="#555557"/><rect x="986.8" y="1135.1" width="7.2" height="7.3" fill="#48484a"/><rect x="993.7" y="1135.1" width="7.2" height="7.3" fill="#363638"/><rect x="1000.6" y="1135.1" width="7.2" height="7.3" fill="#3e3e40"/><rect x="1007.5" y="1135.1" width="7.2" height="7.3" fill="#555557"/><rect x="1014.4" y="1135.1" width="7.2" height="7.3" fill="#2e2e30"/><rect x="1021.3" y="1135.1" width="7.2" height="7.3" fill="#666668"/><rect x="1028.2" y="1135.1" width="7.2" height="7.3" fill="#424244"/><rect x="1035.1" y="1135.1" width="7.2" height="7.3" fill="#555557"/><rect x="1283.7" y="1114.1" width="7.3" height="7.3" fill="#424244"/><rect x="1290.7" y="1114.1" width="7.3" height="7.3" fill="#424244"/><rect x="1297.8" y="1114.1" width="7.3" height="7.3" fill="#48484a"/><rect x="1325.9" y="1114.1" width="7.3" height="7.3" fill="#555557"/><rect x="1333.0" y="1114.1" width="7.3" height="7.3" fill="#555557"/><rect x="1340.0" y="1114.1" width="7.3" height="7.3" fill="#2c2c2e"/><rect x="1347.0" y="1114.1" width="7.3" height="7.3" fill="#2e2e30"/><rect x="1354.1" y="1114.1" width="7.3" height="7.3" fill="#2c2c2e"/><rect x="1361.1" y="1114.1" width="7.3" height="7.3" fill="#3e3e40"/><rect x="1368.1" y="1114.1" width="7.3" height="7.3" fill="#4e4e50"/><rect x="1375.2" y="1114.1" width="7.3" height="7.3" fill="#424244"/><rect x="1382.2" y="1114.1" width="7.3" height="7.3" fill="#3e3e40"/><rect x="1389.2" y="1114.1" width="7.3" height="7.3" fill="#3e3e40"/><rect x="1396.3" y="1114.1" width="7.3" height="7.3" fill="#555557"/><rect x="1417.4" y="1114.1" width="7.3" height="7.3" fill="#424244"/><rect x="1424.4" y="1114.1" width="7.3" height="7.3" fill="#555557"/><rect x="1431.5" y="1114.1" width="7.3" height="7.3" fill="#5c5c5e"/><rect x="1438.5" y="1114.1" width="7.3" height="7.3" fill="#333335"/><rect x="1445.5" y="1114.1" width="7.3" height="7.3" fill="#5c5c5e"/><rect x="1452.6" y="1114.1" width="7.3" height="7.3" fill="#555557"/><rect x="1459.6" y="1114.1" width="7.3" height="7.3" fill="#3e3e40"/><rect x="1466.6" y="1114.1" width="7.3" height="7.3" fill="#3a3a3c"/><rect x="1473.7" y="1114.1" width="7.3" height="7.3" fill="#4e4e50"/><rect x="1480.7" y="1114.1" width="7.3" height="7.3" fill="#2a2a2c"/><rect x="1487.7" y="1114.1" width="7.3" height="7.3" fill="#4e4e50"/><rect x="1494.8" y="1114.1" width="7.3" height="7.3" fill="#48484a"/><rect x="1501.8" y="1114.1" width="7.3" height="7.3" fill="#333335"/><rect x="1508.8" y="1114.1" width="7.3" height="7.3" fill="#555557"/><rect x="1515.9" y="1114.1" width="7.3" height="7.3" fill="#48484a"/><rect x="1522.9" y="1114.1" width="7.3" height="7.3" fill="#3e3e40"/><rect x="1530.0" y="1114.1" width="7.3" height="7.3" fill="#333335"/><rect x="1544.0" y="1114.1" width="7.3" height="7.3" fill="#303032"/><rect x="1551.1" y="1114.1" width="7.3" height="7.3" fill="#333335"/><rect x="1558.1" y="1114.1" width="7.3" height="7.3" fill="#333335"/><rect x="1565.1" y="1114.1" width="7.3" height="7.3" fill="#3e3e40"/><rect x="1572.2" y="1114.1" width="7.3" height="7.3" fill="#424244"/><rect x="1579.2" y="1114.1" width="7.3" height="7.3" fill="#2c2c2e"/><rect x="1593.3" y="1114.1" width="7.3" height="7.3" fill="#3e3e40"/><rect x="1600.3" y="1114.1" width="7.3" height="7.3" fill="#424244"/><rect x="1614.4" y="1114.1" width="7.3" height="7.3" fill="#333335"/><rect x="1621.4" y="1114.1" width="7.3" height="7.3" fill="#303032"/><rect x="1628.5" y="1114.1" width="7.3" height="7.3" fill="#2c2c2e"/><rect x="1635.5" y="1114.1" width="7.3" height="7.3" fill="#424244"/><rect x="1642.5" y="1114.1" width="7.3" height="7.3" fill="#363638"/><rect x="1649.6" y="1114.1" width="7.3" height="7.3" fill="#666668"/><rect x="1656.6" y="1114.1" width="7.3" height="7.3" fill="#333335"/><rect x="1670.7" y="1114.1" width="7.3" height="7.3" fill="#303032"/><rect x="1677.7" y="1114.1" width="7.3" height="7.3" fill="#3e3e40"/><rect x="1684.7" y="1114.1" width="7.3" height="7.3" fill="#2e2e30"/><rect x="1691.8" y="1114.1" width="7.3" height="7.3" fill="#3e3e40"/><rect x="1698.8" y="1114.1" width="7.3" height="7.3" fill="#3a3a3c"/><rect x="1705.8" y="1114.1" width="7.3" height="7.3" fill="#2e2e30"/><rect x="1712.9" y="1114.1" width="7.3" height="7.3" fill="#3a3a3c"/><rect x="1719.9" y="1114.1" width="7.3" height="7.3" fill="#666668"/><rect x="1727.0" y="1114.1" width="7.3" height="7.3" fill="#363638"/><rect x="1734.0" y="1114.1" width="7.3" height="7.3" fill="#666668"/><rect x="1741.0" y="1114.1" width="7.3" height="7.3" fill="#303032"/><rect x="1748.1" y="1114.1" width="7.3" height="7.3" fill="#555557"/><rect x="1755.1" y="1114.1" width="7.3" height="7.3" fill="#363638"/><rect x="1762.1" y="1114.1" width="7.3" height="7.3" fill="#3a3a3c"/><rect x="1776.2" y="1114.1" width="7.3" height="7.3" fill="#363638"/><rect x="1790.3" y="1114.1" width="7.3" height="7.3" fill="#666668"/><rect x="1797.3" y="1114.1" width="7.3" height="7.3" fill="#2c2c2e"/><rect x="1804.3" y="1114.1" width="7.3" height="7.3" fill="#4e4e50"/><rect x="1811.4" y="1114.1" width="7.3" height="7.3" fill="#2e2e30"/><rect x="1818.4" y="1114.1" width="7.3" height="7.3" fill="#333335"/><rect x="1825.5" y="1114.1" width="7.3" height="7.3" fill="#363638"/><rect x="1832.5" y="1114.1" width="7.3" height="7.3" fill="#363638"/><rect x="1839.5" y="1114.1" width="7.3" height="7.3" fill="#3a3a3c"/><rect x="1860.6" y="1114.1" width="7.3" height="7.3" fill="#424244"/><rect x="1867.7" y="1114.1" width="7.3" height="7.3" fill="#555557"/><rect x="1283.7" y="1121.1" width="7.3" height="7.3" fill="#555557"/><rect x="1290.7" y="1121.1" width="7.3" height="7.3" fill="#48484a"/><rect x="1297.8" y="1121.1" width="7.3" height="7.3" fill="#4e4e50"/><rect x="1311.8" y="1121.1" width="7.3" height="7.3" fill="#424244"/><rect x="1318.9" y="1121.1" width="7.3" height="7.3" fill="#3e3e40"/><rect x="1325.9" y="1121.1" width="7.3" height="7.3" fill="#333335"/><rect x="1333.0" y="1121.1" width="7.3" height="7.3" fill="#555557"/><rect x="1340.0" y="1121.1" width="7.3" height="7.3" fill="#4e4e50"/><rect x="1347.0" y="1121.1" width="7.3" height="7.3" fill="#4e4e50"/><rect x="1354.1" y="1121.1" width="7.3" height="7.3" fill="#3e3e40"/><rect x="1361.1" y="1121.1" width="7.3" height="7.3" fill="#3a3a3c"/><rect x="1368.1" y="1121.1" width="7.3" height="7.3" fill="#4e4e50"/><rect x="1375.2" y="1121.1" width="7.3" height="7.3" fill="#303032"/><rect x="1382.2" y="1121.1" width="7.3" height="7.3" fill="#5c5c5e"/><rect x="1389.2" y="1121.1" width="7.3" height="7.3" fill="#303032"/><rect x="1396.3" y="1121.1" width="7.3" height="7.3" fill="#363638"/><rect x="1410.3" y="1121.1" width="7.3" height="7.3" fill="#2e2e30"/><rect x="1417.4" y="1121.1" width="7.3" height="7.3" fill="#303032"/><rect x="1424.4" y="1121.1" width="7.3" height="7.3" fill="#363638"/><rect x="1431.5" y="1121.1" width="7.3" height="7.3" fill="#363638"/><rect x="1438.5" y="1121.1" width="7.3" height="7.3" fill="#333335"/><rect x="1452.6" y="1121.1" width="7.3" height="7.3" fill="#2a2a2c"/><rect x="1459.6" y="1121.1" width="7.3" height="7.3" fill="#3a3a3c"/><rect x="1466.6" y="1121.1" width="7.3" height="7.3" fill="#555557"/><rect x="1473.7" y="1121.1" width="7.3" height="7.3" fill="#3a3a3c"/><rect x="1480.7" y="1121.1" width="7.3" height="7.3" fill="#5c5c5e"/><rect x="1487.7" y="1121.1" width="7.3" height="7.3" fill="#333335"/><rect x="1494.8" y="1121.1" width="7.3" height="7.3" fill="#363638"/><rect x="1501.8" y="1121.1" width="7.3" height="7.3" fill="#424244"/><rect x="1508.8" y="1121.1" width="7.3" height="7.3" fill="#5c5c5e"/><rect x="1522.9" y="1121.1" width="7.3" height="7.3" fill="#333335"/><rect x="1537.0" y="1121.1" width="7.3" height="7.3" fill="#4e4e50"/><rect x="1544.0" y="1121.1" width="7.3" height="7.3" fill="#333335"/><rect x="1565.1" y="1121.1" width="7.3" height="7.3" fill="#2a2a2c"/><rect x="1572.2" y="1121.1" width="7.3" height="7.3" fill="#5c5c5e"/><rect x="1586.2" y="1121.1" width="7.3" height="7.3" fill="#48484a"/><rect x="1593.3" y="1121.1" width="7.3" height="7.3" fill="#2c2c2e"/><rect x="1600.3" y="1121.1" width="7.3" height="7.3" fill="#666668"/><rect x="1607.3" y="1121.1" width="7.3" height="7.3" fill="#3e3e40"/><rect x="1621.4" y="1121.1" width="7.3" height="7.3" fill="#2c2c2e"/><rect x="1628.5" y="1121.1" width="7.3" height="7.3" fill="#2e2e30"/><rect x="1635.5" y="1121.1" width="7.3" height="7.3" fill="#4e4e50"/><rect x="1642.5" y="1121.1" width="7.3" height="7.3" fill="#666668"/><rect x="1649.6" y="1121.1" width="7.3" height="7.3" fill="#4e4e50"/><rect x="1670.7" y="1121.1" width="7.3" height="7.3" fill="#5c5c5e"/><rect x="1677.7" y="1121.1" width="7.3" height="7.3" fill="#5c5c5e"/><rect x="1684.7" y="1121.1" width="7.3" height="7.3" fill="#48484a"/><rect x="1698.8" y="1121.1" width="7.3" height="7.3" fill="#333335"/><rect x="1712.9" y="1121.1" width="7.3" height="7.3" fill="#424244"/><rect x="1719.9" y="1121.1" width="7.3" height="7.3" fill="#555557"/><rect x="1727.0" y="1121.1" width="7.3" height="7.3" fill="#2c2c2e"/><rect x="1734.0" y="1121.1" width="7.3" height="7.3" fill="#424244"/><rect x="1748.1" y="1121.1" width="7.3" height="7.3" fill="#333335"/><rect x="1755.1" y="1121.1" width="7.3" height="7.3" fill="#48484a"/><rect x="1762.1" y="1121.1" width="7.3" height="7.3" fill="#424244"/><rect x="1769.2" y="1121.1" width="7.3" height="7.3" fill="#3e3e40"/><rect x="1776.2" y="1121.1" width="7.3" height="7.3" fill="#363638"/><rect x="1783.2" y="1121.1" width="7.3" height="7.3" fill="#303032"/><rect x="1790.3" y="1121.1" width="7.3" height="7.3" fill="#303032"/><rect x="1797.3" y="1121.1" width="7.3" height="7.3" fill="#2a2a2c"/><rect x="1811.4" y="1121.1" width="7.3" height="7.3" fill="#333335"/><rect x="1818.4" y="1121.1" width="7.3" height="7.3" fill="#303032"/><rect x="1825.5" y="1121.1" width="7.3" height="7.3" fill="#4e4e50"/><rect x="1832.5" y="1121.1" width="7.3" height="7.3" fill="#2c2c2e"/><rect x="1839.5" y="1121.1" width="7.3" height="7.3" fill="#4e4e50"/><rect x="1846.6" y="1121.1" width="7.3" height="7.3" fill="#363638"/><rect x="1853.6" y="1121.1" width="7.3" height="7.3" fill="#2a2a2c"/><rect x="1860.6" y="1121.1" width="7.3" height="7.3" fill="#555557"/><rect x="1867.7" y="1121.1" width="7.3" height="7.3" fill="#4e4e50"/><rect x="1283.7" y="1128.1" width="7.3" height="7.3" fill="#2a2a2c"/><rect x="1290.7" y="1128.1" width="7.3" height="7.3" fill="#555557"/><rect x="1304.8" y="1128.1" width="7.3" height="7.3" fill="#3e3e40"/><rect x="1318.9" y="1128.1" width="7.3" height="7.3" fill="#666668"/><rect x="1325.9" y="1128.1" width="7.3" height="7.3" fill="#3e3e40"/><rect x="1333.0" y="1128.1" width="7.3" height="7.3" fill="#5c5c5e"/><rect x="1347.0" y="1128.1" width="7.3" height="7.3" fill="#48484a"/><rect x="1354.1" y="1128.1" width="7.3" height="7.3" fill="#2e2e30"/><rect x="1368.1" y="1128.1" width="7.3" height="7.3" fill="#4e4e50"/><rect x="1375.2" y="1128.1" width="7.3" height="7.3" fill="#48484a"/><rect x="1382.2" y="1128.1" width="7.3" height="7.3" fill="#3a3a3c"/><rect x="1389.2" y="1128.1" width="7.3" height="7.3" fill="#2a2a2c"/><rect x="1403.3" y="1128.1" width="7.3" height="7.3" fill="#2a2a2c"/><rect x="1410.3" y="1128.1" width="7.3" height="7.3" fill="#2e2e30"/><rect x="1417.4" y="1128.1" width="7.3" height="7.3" fill="#555557"/><rect x="1431.5" y="1128.1" width="7.3" height="7.3" fill="#2c2c2e"/><rect x="1445.5" y="1128.1" width="7.3" height="7.3" fill="#2e2e30"/><rect x="1452.6" y="1128.1" width="7.3" height="7.3" fill="#424244"/><rect x="1459.6" y="1128.1" width="7.3" height="7.3" fill="#2a2a2c"/><rect x="1466.6" y="1128.1" width="7.3" height="7.3" fill="#555557"/><rect x="1473.7" y="1128.1" width="7.3" height="7.3" fill="#363638"/><rect x="1487.7" y="1128.1" width="7.3" height="7.3" fill="#2c2c2e"/><rect x="1494.8" y="1128.1" width="7.3" height="7.3" fill="#333335"/><rect x="1501.8" y="1128.1" width="7.3" height="7.3" fill="#3a3a3c"/><rect x="1515.9" y="1128.1" width="7.3" height="7.3" fill="#5c5c5e"/><rect x="1522.9" y="1128.1" width="7.3" height="7.3" fill="#363638"/><rect x="1530.0" y="1128.1" width="7.3" height="7.3" fill="#333335"/><rect x="1544.0" y="1128.1" width="7.3" height="7.3" fill="#2a2a2c"/><rect x="1551.1" y="1128.1" width="7.3" height="7.3" fill="#303032"/><rect x="1558.1" y="1128.1" width="7.3" height="7.3" fill="#3e3e40"/><rect x="1565.1" y="1128.1" width="7.3" height="7.3" fill="#363638"/><rect x="1572.2" y="1128.1" width="7.3" height="7.3" fill="#3e3e40"/><rect x="1579.2" y="1128.1" width="7.3" height="7.3" fill="#3a3a3c"/><rect x="1586.2" y="1128.1" width="7.3" height="7.3" fill="#4e4e50"/><rect x="1593.3" y="1128.1" width="7.3" height="7.3" fill="#2a2a2c"/><rect x="1600.3" y="1128.1" width="7.3" height="7.3" fill="#3e3e40"/><rect x="1607.3" y="1128.1" width="7.3" height="7.3" fill="#2a2a2c"/><rect x="1614.4" y="1128.1" width="7.3" height="7.3" fill="#555557"/><rect x="1621.4" y="1128.1" width="7.3" height="7.3" fill="#48484a"/><rect x="1628.5" y="1128.1" width="7.3" height="7.3" fill="#333335"/><rect x="1635.5" y="1128.1" width="7.3" height="7.3" fill="#48484a"/><rect x="1642.5" y="1128.1" width="7.3" height="7.3" fill="#555557"/><rect x="1649.6" y="1128.1" width="7.3" height="7.3" fill="#363638"/><rect x="1663.6" y="1128.1" width="7.3" height="7.3" fill="#555557"/><rect x="1670.7" y="1128.1" width="7.3" height="7.3" fill="#5c5c5e"/><rect x="1677.7" y="1128.1" width="7.3" height="7.3" fill="#2c2c2e"/><rect x="1684.7" y="1128.1" width="7.3" height="7.3" fill="#303032"/><rect x="1691.8" y="1128.1" width="7.3" height="7.3" fill="#555557"/><rect x="1712.9" y="1128.1" width="7.3" height="7.3" fill="#333335"/><rect x="1734.0" y="1128.1" width="7.3" height="7.3" fill="#3e3e40"/><rect x="1741.0" y="1128.1" width="7.3" height="7.3" fill="#5c5c5e"/><rect x="1755.1" y="1128.1" width="7.3" height="7.3" fill="#555557"/><rect x="1762.1" y="1128.1" width="7.3" height="7.3" fill="#48484a"/><rect x="1769.2" y="1128.1" width="7.3" height="7.3" fill="#666668"/><rect x="1776.2" y="1128.1" width="7.3" height="7.3" fill="#363638"/><rect x="1783.2" y="1128.1" width="7.3" height="7.3" fill="#48484a"/><rect x="1790.3" y="1128.1" width="7.3" height="7.3" fill="#303032"/><rect x="1797.3" y="1128.1" width="7.3" height="7.3" fill="#2e2e30"/><rect x="1804.3" y="1128.1" width="7.3" height="7.3" fill="#2c2c2e"/><rect x="1811.4" y="1128.1" width="7.3" height="7.3" fill="#3e3e40"/><rect x="1818.4" y="1128.1" width="7.3" height="7.3" fill="#363638"/><rect x="1825.5" y="1128.1" width="7.3" height="7.3" fill="#3a3a3c"/><rect x="1846.6" y="1128.1" width="7.3" height="7.3" fill="#2c2c2e"/><rect x="1853.6" y="1128.1" width="7.3" height="7.3" fill="#3a3a3c"/><rect x="1860.6" y="1128.1" width="7.3" height="7.3" fill="#555557"/><rect x="1283.7" y="1135.1" width="7.3" height="7.3" fill="#2e2e30"/><rect x="1290.7" y="1135.1" width="7.3" height="7.3" fill="#48484a"/><rect x="1304.8" y="1135.1" width="7.3" height="7.3" fill="#424244"/><rect x="1318.9" y="1135.1" width="7.3" height="7.3" fill="#2c2c2e"/><rect x="1325.9" y="1135.1" width="7.3" height="7.3" fill="#333335"/><rect x="1333.0" y="1135.1" width="7.3" height="7.3" fill="#48484a"/><rect x="1340.0" y="1135.1" width="7.3" height="7.3" fill="#333335"/><rect x="1347.0" y="1135.1" width="7.3" height="7.3" fill="#303032"/><rect x="1354.1" y="1135.1" width="7.3" height="7.3" fill="#2e2e30"/><rect x="1361.1" y="1135.1" width="7.3" height="7.3" fill="#2e2e30"/><rect x="1368.1" y="1135.1" width="7.3" height="7.3" fill="#48484a"/><rect x="1375.2" y="1135.1" width="7.3" height="7.3" fill="#2c2c2e"/><rect x="1382.2" y="1135.1" width="7.3" height="7.3" fill="#303032"/><rect x="1389.2" y="1135.1" width="7.3" height="7.3" fill="#303032"/><rect x="1396.3" y="1135.1" width="7.3" height="7.3" fill="#2c2c2e"/><rect x="1403.3" y="1135.1" width="7.3" height="7.3" fill="#2a2a2c"/><rect x="1410.3" y="1135.1" width="7.3" height="7.3" fill="#3e3e40"/><rect x="1424.4" y="1135.1" width="7.3" height="7.3" fill="#3e3e40"/><rect x="1438.5" y="1135.1" width="7.3" height="7.3" fill="#333335"/><rect x="1445.5" y="1135.1" width="7.3" height="7.3" fill="#2a2a2c"/><rect x="1452.6" y="1135.1" width="7.3" height="7.3" fill="#666668"/><rect x="1459.6" y="1135.1" width="7.3" height="7.3" fill="#2c2c2e"/><rect x="1466.6" y="1135.1" width="7.3" height="7.3" fill="#666668"/><rect x="1473.7" y="1135.1" width="7.3" height="7.3" fill="#48484a"/><rect x="1480.7" y="1135.1" width="7.3" height="7.3" fill="#5c5c5e"/><rect x="1487.7" y="1135.1" width="7.3" height="7.3" fill="#2a2a2c"/><rect x="1494.8" y="1135.1" width="7.3" height="7.3" fill="#48484a"/><rect x="1501.8" y="1135.1" width="7.3" height="7.3" fill="#363638"/><rect x="1508.8" y="1135.1" width="7.3" height="7.3" fill="#363638"/><rect x="1515.9" y="1135.1" width="7.3" height="7.3" fill="#2a2a2c"/><rect x="1522.9" y="1135.1" width="7.3" height="7.3" fill="#333335"/><rect x="1530.0" y="1135.1" width="7.3" height="7.3" fill="#555557"/><rect x="1537.0" y="1135.1" width="7.3" height="7.3" fill="#303032"/><rect x="1558.1" y="1135.1" width="7.3" height="7.3" fill="#363638"/><rect x="1565.1" y="1135.1" width="7.3" height="7.3" fill="#333335"/><rect x="1572.2" y="1135.1" width="7.3" height="7.3" fill="#2a2a2c"/><rect x="1579.2" y="1135.1" width="7.3" height="7.3" fill="#424244"/><rect x="1586.2" y="1135.1" width="7.3" height="7.3" fill="#3a3a3c"/><rect x="1593.3" y="1135.1" width="7.3" height="7.3" fill="#3a3a3c"/><rect x="1600.3" y="1135.1" width="7.3" height="7.3" fill="#2e2e30"/><rect x="1607.3" y="1135.1" width="7.3" height="7.3" fill="#2c2c2e"/><rect x="1614.4" y="1135.1" width="7.3" height="7.3" fill="#3a3a3c"/><rect x="1621.4" y="1135.1" width="7.3" height="7.3" fill="#3a3a3c"/><rect x="1635.5" y="1135.1" width="7.3" height="7.3" fill="#3a3a3c"/><rect x="1649.6" y="1135.1" width="7.3" height="7.3" fill="#48484a"/><rect x="1663.6" y="1135.1" width="7.3" height="7.3" fill="#2a2a2c"/><rect x="1684.7" y="1135.1" width="7.3" height="7.3" fill="#303032"/><rect x="1691.8" y="1135.1" width="7.3" height="7.3" fill="#3a3a3c"/><rect x="1698.8" y="1135.1" width="7.3" height="7.3" fill="#2a2a2c"/><rect x="1705.8" y="1135.1" width="7.3" height="7.3" fill="#2e2e30"/><rect x="1712.9" y="1135.1" width="7.3" height="7.3" fill="#666668"/><rect x="1719.9" y="1135.1" width="7.3" height="7.3" fill="#48484a"/><rect x="1734.0" y="1135.1" width="7.3" height="7.3" fill="#2e2e30"/><rect x="1741.0" y="1135.1" width="7.3" height="7.3" fill="#2a2a2c"/><rect x="1748.1" y="1135.1" width="7.3" height="7.3" fill="#4e4e50"/><rect x="1762.1" y="1135.1" width="7.3" height="7.3" fill="#48484a"/><rect x="1769.2" y="1135.1" width="7.3" height="7.3" fill="#363638"/><rect x="1776.2" y="1135.1" width="7.3" height="7.3" fill="#2e2e30"/><rect x="1783.2" y="1135.1" width="7.3" height="7.3" fill="#333335"/><rect x="1790.3" y="1135.1" width="7.3" height="7.3" fill="#2e2e30"/><rect x="1804.3" y="1135.1" width="7.3" height="7.3" fill="#3e3e40"/><rect x="1811.4" y="1135.1" width="7.3" height="7.3" fill="#5c5c5e"/><rect x="1825.5" y="1135.1" width="7.3" height="7.3" fill="#2e2e30"/><rect x="1839.5" y="1135.1" width="7.3" height="7.3" fill="#3e3e40"/><rect x="1846.6" y="1135.1" width="7.3" height="7.3" fill="#48484a"/><rect x="1860.6" y="1135.1" width="7.3" height="7.3" fill="#555557"/><rect x="1867.7" y="1135.1" width="7.3" height="7.3" fill="#666668"/><rect x="882" y="1195.3" width="1262" height="2.2" fill="#1b1b1e"/><rect x="903.9" y="1160.2" width="7.2" height="7.3" fill="#666668"/><rect x="910.8" y="1160.2" width="7.2" height="7.3" fill="#3a3a3c"/><rect x="917.7" y="1160.2" width="7.2" height="7.3" fill="#303032"/><rect x="931.5" y="1160.2" width="7.2" height="7.3" fill="#303032"/><rect x="938.4" y="1160.2" width="7.2" height="7.3" fill="#424244"/><rect x="945.3" y="1160.2" width="7.2" height="7.3" fill="#363638"/><rect x="952.2" y="1160.2" width="7.2" height="7.3" fill="#303032"/><rect x="973.0" y="1160.2" width="7.2" height="7.3" fill="#424244"/><rect x="986.8" y="1160.2" width="7.2" height="7.3" fill="#4e4e50"/><rect x="1000.6" y="1160.2" width="7.2" height="7.3" fill="#48484a"/><rect x="1007.5" y="1160.2" width="7.2" height="7.3" fill="#666668"/><rect x="1014.4" y="1160.2" width="7.2" height="7.3" fill="#333335"/><rect x="1021.3" y="1160.2" width="7.2" height="7.3" fill="#333335"/><rect x="1028.2" y="1160.2" width="7.2" height="7.3" fill="#3a3a3c"/><rect x="1035.1" y="1160.2" width="7.2" height="7.3" fill="#363638"/><rect x="897.0" y="1167.2" width="7.2" height="7.3" fill="#3e3e40"/><rect x="903.9" y="1167.2" width="7.2" height="7.3" fill="#2a2a2c"/><rect x="910.8" y="1167.2" width="7.2" height="7.3" fill="#3e3e40"/><rect x="917.7" y="1167.2" width="7.2" height="7.3" fill="#3e3e40"/><rect x="924.6" y="1167.2" width="7.2" height="7.3" fill="#5c5c5e"/><rect x="952.2" y="1167.2" width="7.2" height="7.3" fill="#2c2c2e"/><rect x="959.1" y="1167.2" width="7.2" height="7.3" fill="#3a3a3c"/><rect x="966.0" y="1167.2" width="7.2" height="7.3" fill="#5c5c5e"/><rect x="973.0" y="1167.2" width="7.2" height="7.3" fill="#424244"/><rect x="979.9" y="1167.2" width="7.2" height="7.3" fill="#2a2a2c"/><rect x="986.8" y="1167.2" width="7.2" height="7.3" fill="#2c2c2e"/><rect x="1000.6" y="1167.2" width="7.2" height="7.3" fill="#555557"/><rect x="1007.5" y="1167.2" width="7.2" height="7.3" fill="#2a2a2c"/><rect x="1014.4" y="1167.2" width="7.2" height="7.3" fill="#3a3a3c"/><rect x="1021.3" y="1167.2" width="7.2" height="7.3" fill="#5c5c5e"/><rect x="1028.2" y="1167.2" width="7.2" height="7.3" fill="#666668"/><rect x="1035.1" y="1167.2" width="7.2" height="7.3" fill="#48484a"/><rect x="897.0" y="1174.2" width="7.2" height="7.3" fill="#666668"/><rect x="903.9" y="1174.2" width="7.2" height="7.3" fill="#2e2e30"/><rect x="917.7" y="1174.2" width="7.2" height="7.3" fill="#5c5c5e"/><rect x="931.5" y="1174.2" width="7.2" height="7.3" fill="#5c5c5e"/><rect x="938.4" y="1174.2" width="7.2" height="7.3" fill="#303032"/><rect x="945.3" y="1174.2" width="7.2" height="7.3" fill="#363638"/><rect x="952.2" y="1174.2" width="7.2" height="7.3" fill="#333335"/><rect x="959.1" y="1174.2" width="7.2" height="7.3" fill="#48484a"/><rect x="966.0" y="1174.2" width="7.2" height="7.3" fill="#666668"/><rect x="973.0" y="1174.2" width="7.2" height="7.3" fill="#333335"/><rect x="979.9" y="1174.2" width="7.2" height="7.3" fill="#3e3e40"/><rect x="986.8" y="1174.2" width="7.2" height="7.3" fill="#333335"/><rect x="993.7" y="1174.2" width="7.2" height="7.3" fill="#303032"/><rect x="1000.6" y="1174.2" width="7.2" height="7.3" fill="#2a2a2c"/><rect x="1007.5" y="1174.2" width="7.2" height="7.3" fill="#3a3a3c"/><rect x="1014.4" y="1174.2" width="7.2" height="7.3" fill="#333335"/><rect x="1021.3" y="1174.2" width="7.2" height="7.3" fill="#3a3a3c"/><rect x="1028.2" y="1174.2" width="7.2" height="7.3" fill="#5c5c5e"/><rect x="1035.1" y="1174.2" width="7.2" height="7.3" fill="#5c5c5e"/><rect x="897.0" y="1181.2" width="7.2" height="7.3" fill="#4e4e50"/><rect x="917.7" y="1181.2" width="7.2" height="7.3" fill="#424244"/><rect x="924.6" y="1181.2" width="7.2" height="7.3" fill="#2c2c2e"/><rect x="931.5" y="1181.2" width="7.2" height="7.3" fill="#424244"/><rect x="938.4" y="1181.2" width="7.2" height="7.3" fill="#3a3a3c"/><rect x="945.3" y="1181.2" width="7.2" height="7.3" fill="#363638"/><rect x="952.2" y="1181.2" width="7.2" height="7.3" fill="#363638"/><rect x="959.1" y="1181.2" width="7.2" height="7.3" fill="#363638"/><rect x="966.0" y="1181.2" width="7.2" height="7.3" fill="#2c2c2e"/><rect x="973.0" y="1181.2" width="7.2" height="7.3" fill="#2e2e30"/><rect x="979.9" y="1181.2" width="7.2" height="7.3" fill="#2a2a2c"/><rect x="986.8" y="1181.2" width="7.2" height="7.3" fill="#424244"/><rect x="993.7" y="1181.2" width="7.2" height="7.3" fill="#4e4e50"/><rect x="1028.2" y="1181.2" width="7.2" height="7.3" fill="#555557"/><rect x="1035.1" y="1181.2" width="7.2" height="7.3" fill="#2e2e30"/><rect x="1293.5" y="1160.2" width="7.3" height="7.3" fill="#4e4e50"/><rect x="1300.5" y="1160.2" width="7.3" height="7.3" fill="#424244"/><rect x="1307.5" y="1160.2" width="7.3" height="7.3" fill="#2a2a2c"/><rect x="1314.5" y="1160.2" width="7.3" height="7.3" fill="#303032"/><rect x="1321.5" y="1160.2" width="7.3" height="7.3" fill="#2a2a2c"/><rect x="1328.5" y="1160.2" width="7.3" height="7.3" fill="#2a2a2c"/><rect x="1335.5" y="1160.2" width="7.3" height="7.3" fill="#333335"/><rect x="1342.5" y="1160.2" width="7.3" height="7.3" fill="#363638"/><rect x="1349.5" y="1160.2" width="7.3" height="7.3" fill="#3a3a3c"/><rect x="1356.5" y="1160.2" width="7.3" height="7.3" fill="#48484a"/><rect x="1363.5" y="1160.2" width="7.3" height="7.3" fill="#363638"/><rect x="1370.5" y="1160.2" width="7.3" height="7.3" fill="#3e3e40"/><rect x="1377.5" y="1160.2" width="7.3" height="7.3" fill="#2a2a2c"/><rect x="1391.5" y="1160.2" width="7.3" height="7.3" fill="#2e2e30"/><rect x="1398.5" y="1160.2" width="7.3" height="7.3" fill="#2c2c2e"/><rect x="1405.5" y="1160.2" width="7.3" height="7.3" fill="#666668"/><rect x="1412.5" y="1160.2" width="7.3" height="7.3" fill="#333335"/><rect x="1419.5" y="1160.2" width="7.3" height="7.3" fill="#333335"/><rect x="1433.5" y="1160.2" width="7.3" height="7.3" fill="#666668"/><rect x="1440.6" y="1160.2" width="7.3" height="7.3" fill="#363638"/><rect x="1447.6" y="1160.2" width="7.3" height="7.3" fill="#48484a"/><rect x="1454.6" y="1160.2" width="7.3" height="7.3" fill="#424244"/><rect x="1461.6" y="1160.2" width="7.3" height="7.3" fill="#303032"/><rect x="1468.6" y="1160.2" width="7.3" height="7.3" fill="#2a2a2c"/><rect x="1475.6" y="1160.2" width="7.3" height="7.3" fill="#424244"/><rect x="1482.6" y="1160.2" width="7.3" height="7.3" fill="#2e2e30"/><rect x="1489.6" y="1160.2" width="7.3" height="7.3" fill="#2a2a2c"/><rect x="1503.6" y="1160.2" width="7.3" height="7.3" fill="#48484a"/><rect x="1510.6" y="1160.2" width="7.3" height="7.3" fill="#303032"/><rect x="1517.6" y="1160.2" width="7.3" height="7.3" fill="#303032"/><rect x="1524.6" y="1160.2" width="7.3" height="7.3" fill="#4e4e50"/><rect x="1531.6" y="1160.2" width="7.3" height="7.3" fill="#4e4e50"/><rect x="1538.6" y="1160.2" width="7.3" height="7.3" fill="#48484a"/><rect x="1545.6" y="1160.2" width="7.3" height="7.3" fill="#333335"/><rect x="1552.6" y="1160.2" width="7.3" height="7.3" fill="#4e4e50"/><rect x="1559.6" y="1160.2" width="7.3" height="7.3" fill="#555557"/><rect x="1566.6" y="1160.2" width="7.3" height="7.3" fill="#555557"/><rect x="1573.6" y="1160.2" width="7.3" height="7.3" fill="#3a3a3c"/><rect x="1587.6" y="1160.2" width="7.3" height="7.3" fill="#3e3e40"/><rect x="1594.6" y="1160.2" width="7.3" height="7.3" fill="#4e4e50"/><rect x="1601.6" y="1160.2" width="7.3" height="7.3" fill="#303032"/><rect x="1615.6" y="1160.2" width="7.3" height="7.3" fill="#4e4e50"/><rect x="1622.6" y="1160.2" width="7.3" height="7.3" fill="#363638"/><rect x="1650.6" y="1160.2" width="7.3" height="7.3" fill="#2a2a2c"/><rect x="1657.6" y="1160.2" width="7.3" height="7.3" fill="#424244"/><rect x="1664.6" y="1160.2" width="7.3" height="7.3" fill="#4e4e50"/><rect x="1671.6" y="1160.2" width="7.3" height="7.3" fill="#424244"/><rect x="1685.6" y="1160.2" width="7.3" height="7.3" fill="#303032"/><rect x="1692.6" y="1160.2" width="7.3" height="7.3" fill="#424244"/><rect x="1699.6" y="1160.2" width="7.3" height="7.3" fill="#333335"/><rect x="1720.6" y="1160.2" width="7.3" height="7.3" fill="#2e2e30"/><rect x="1727.6" y="1160.2" width="7.3" height="7.3" fill="#363638"/><rect x="1734.7" y="1160.2" width="7.3" height="7.3" fill="#3a3a3c"/><rect x="1741.7" y="1160.2" width="7.3" height="7.3" fill="#303032"/><rect x="1748.7" y="1160.2" width="7.3" height="7.3" fill="#666668"/><rect x="1755.7" y="1160.2" width="7.3" height="7.3" fill="#555557"/><rect x="1776.7" y="1160.2" width="7.3" height="7.3" fill="#3e3e40"/><rect x="1790.7" y="1160.2" width="7.3" height="7.3" fill="#666668"/><rect x="1797.7" y="1160.2" width="7.3" height="7.3" fill="#555557"/><rect x="1804.7" y="1160.2" width="7.3" height="7.3" fill="#333335"/><rect x="1811.7" y="1160.2" width="7.3" height="7.3" fill="#3a3a3c"/><rect x="1818.7" y="1160.2" width="7.3" height="7.3" fill="#2c2c2e"/><rect x="1825.7" y="1160.2" width="7.3" height="7.3" fill="#2e2e30"/><rect x="1832.7" y="1160.2" width="7.3" height="7.3" fill="#2a2a2c"/><rect x="1839.7" y="1160.2" width="7.3" height="7.3" fill="#48484a"/><rect x="1853.7" y="1160.2" width="7.3" height="7.3" fill="#2e2e30"/><rect x="1860.7" y="1160.2" width="7.3" height="7.3" fill="#2a2a2c"/><rect x="1867.7" y="1160.2" width="7.3" height="7.3" fill="#555557"/><rect x="1293.5" y="1167.2" width="7.3" height="7.3" fill="#2a2a2c"/><rect x="1300.5" y="1167.2" width="7.3" height="7.3" fill="#555557"/><rect x="1307.5" y="1167.2" width="7.3" height="7.3" fill="#666668"/><rect x="1314.5" y="1167.2" width="7.3" height="7.3" fill="#363638"/><rect x="1321.5" y="1167.2" width="7.3" height="7.3" fill="#666668"/><rect x="1328.5" y="1167.2" width="7.3" height="7.3" fill="#4e4e50"/><rect x="1335.5" y="1167.2" width="7.3" height="7.3" fill="#666668"/><rect x="1342.5" y="1167.2" width="7.3" height="7.3" fill="#555557"/><rect x="1356.5" y="1167.2" width="7.3" height="7.3" fill="#303032"/><rect x="1363.5" y="1167.2" width="7.3" height="7.3" fill="#2a2a2c"/><rect x="1370.5" y="1167.2" width="7.3" height="7.3" fill="#666668"/><rect x="1384.5" y="1167.2" width="7.3" height="7.3" fill="#2c2c2e"/><rect x="1398.5" y="1167.2" width="7.3" height="7.3" fill="#333335"/><rect x="1405.5" y="1167.2" width="7.3" height="7.3" fill="#2e2e30"/><rect x="1412.5" y="1167.2" width="7.3" height="7.3" fill="#5c5c5e"/><rect x="1419.5" y="1167.2" width="7.3" height="7.3" fill="#333335"/><rect x="1426.5" y="1167.2" width="7.3" height="7.3" fill="#3a3a3c"/><rect x="1433.5" y="1167.2" width="7.3" height="7.3" fill="#363638"/><rect x="1440.6" y="1167.2" width="7.3" height="7.3" fill="#333335"/><rect x="1447.6" y="1167.2" width="7.3" height="7.3" fill="#5c5c5e"/><rect x="1454.6" y="1167.2" width="7.3" height="7.3" fill="#363638"/><rect x="1461.6" y="1167.2" width="7.3" height="7.3" fill="#48484a"/><rect x="1468.6" y="1167.2" width="7.3" height="7.3" fill="#666668"/><rect x="1475.6" y="1167.2" width="7.3" height="7.3" fill="#555557"/><rect x="1482.6" y="1167.2" width="7.3" height="7.3" fill="#3a3a3c"/><rect x="1489.6" y="1167.2" width="7.3" height="7.3" fill="#424244"/><rect x="1496.6" y="1167.2" width="7.3" height="7.3" fill="#363638"/><rect x="1503.6" y="1167.2" width="7.3" height="7.3" fill="#2a2a2c"/><rect x="1510.6" y="1167.2" width="7.3" height="7.3" fill="#303032"/><rect x="1517.6" y="1167.2" width="7.3" height="7.3" fill="#666668"/><rect x="1524.6" y="1167.2" width="7.3" height="7.3" fill="#666668"/><rect x="1531.6" y="1167.2" width="7.3" height="7.3" fill="#3a3a3c"/><rect x="1538.6" y="1167.2" width="7.3" height="7.3" fill="#303032"/><rect x="1545.6" y="1167.2" width="7.3" height="7.3" fill="#5c5c5e"/><rect x="1559.6" y="1167.2" width="7.3" height="7.3" fill="#3e3e40"/><rect x="1566.6" y="1167.2" width="7.3" height="7.3" fill="#555557"/><rect x="1573.6" y="1167.2" width="7.3" height="7.3" fill="#2e2e30"/><rect x="1587.6" y="1167.2" width="7.3" height="7.3" fill="#666668"/><rect x="1594.6" y="1167.2" width="7.3" height="7.3" fill="#48484a"/><rect x="1608.6" y="1167.2" width="7.3" height="7.3" fill="#303032"/><rect x="1622.6" y="1167.2" width="7.3" height="7.3" fill="#2e2e30"/><rect x="1629.6" y="1167.2" width="7.3" height="7.3" fill="#4e4e50"/><rect x="1636.6" y="1167.2" width="7.3" height="7.3" fill="#3e3e40"/><rect x="1643.6" y="1167.2" width="7.3" height="7.3" fill="#555557"/><rect x="1650.6" y="1167.2" width="7.3" height="7.3" fill="#2c2c2e"/><rect x="1657.6" y="1167.2" width="7.3" height="7.3" fill="#363638"/><rect x="1664.6" y="1167.2" width="7.3" height="7.3" fill="#3a3a3c"/><rect x="1678.6" y="1167.2" width="7.3" height="7.3" fill="#3a3a3c"/><rect x="1692.6" y="1167.2" width="7.3" height="7.3" fill="#303032"/><rect x="1699.6" y="1167.2" width="7.3" height="7.3" fill="#3a3a3c"/><rect x="1713.6" y="1167.2" width="7.3" height="7.3" fill="#3a3a3c"/><rect x="1727.6" y="1167.2" width="7.3" height="7.3" fill="#3e3e40"/><rect x="1734.7" y="1167.2" width="7.3" height="7.3" fill="#48484a"/><rect x="1741.7" y="1167.2" width="7.3" height="7.3" fill="#5c5c5e"/><rect x="1748.7" y="1167.2" width="7.3" height="7.3" fill="#2a2a2c"/><rect x="1755.7" y="1167.2" width="7.3" height="7.3" fill="#363638"/><rect x="1762.7" y="1167.2" width="7.3" height="7.3" fill="#666668"/><rect x="1776.7" y="1167.2" width="7.3" height="7.3" fill="#555557"/><rect x="1783.7" y="1167.2" width="7.3" height="7.3" fill="#3e3e40"/><rect x="1790.7" y="1167.2" width="7.3" height="7.3" fill="#5c5c5e"/><rect x="1797.7" y="1167.2" width="7.3" height="7.3" fill="#303032"/><rect x="1804.7" y="1167.2" width="7.3" height="7.3" fill="#3e3e40"/><rect x="1811.7" y="1167.2" width="7.3" height="7.3" fill="#555557"/><rect x="1818.7" y="1167.2" width="7.3" height="7.3" fill="#303032"/><rect x="1825.7" y="1167.2" width="7.3" height="7.3" fill="#5c5c5e"/><rect x="1832.7" y="1167.2" width="7.3" height="7.3" fill="#666668"/><rect x="1839.7" y="1167.2" width="7.3" height="7.3" fill="#555557"/><rect x="1846.7" y="1167.2" width="7.3" height="7.3" fill="#303032"/><rect x="1853.7" y="1167.2" width="7.3" height="7.3" fill="#48484a"/><rect x="1860.7" y="1167.2" width="7.3" height="7.3" fill="#2e2e30"/><rect x="1867.7" y="1167.2" width="7.3" height="7.3" fill="#303032"/><rect x="1293.5" y="1174.2" width="7.3" height="7.3" fill="#555557"/><rect x="1307.5" y="1174.2" width="7.3" height="7.3" fill="#4e4e50"/><rect x="1314.5" y="1174.2" width="7.3" height="7.3" fill="#3a3a3c"/><rect x="1321.5" y="1174.2" width="7.3" height="7.3" fill="#2e2e30"/><rect x="1328.5" y="1174.2" width="7.3" height="7.3" fill="#555557"/><rect x="1335.5" y="1174.2" width="7.3" height="7.3" fill="#333335"/><rect x="1342.5" y="1174.2" width="7.3" height="7.3" fill="#4e4e50"/><rect x="1356.5" y="1174.2" width="7.3" height="7.3" fill="#3a3a3c"/><rect x="1363.5" y="1174.2" width="7.3" height="7.3" fill="#2a2a2c"/><rect x="1370.5" y="1174.2" width="7.3" height="7.3" fill="#5c5c5e"/><rect x="1377.5" y="1174.2" width="7.3" height="7.3" fill="#303032"/><rect x="1384.5" y="1174.2" width="7.3" height="7.3" fill="#4e4e50"/><rect x="1391.5" y="1174.2" width="7.3" height="7.3" fill="#2a2a2c"/><rect x="1398.5" y="1174.2" width="7.3" height="7.3" fill="#48484a"/><rect x="1405.5" y="1174.2" width="7.3" height="7.3" fill="#2a2a2c"/><rect x="1412.5" y="1174.2" width="7.3" height="7.3" fill="#666668"/><rect x="1419.5" y="1174.2" width="7.3" height="7.3" fill="#48484a"/><rect x="1426.5" y="1174.2" width="7.3" height="7.3" fill="#4e4e50"/><rect x="1433.5" y="1174.2" width="7.3" height="7.3" fill="#303032"/><rect x="1440.6" y="1174.2" width="7.3" height="7.3" fill="#4e4e50"/><rect x="1454.6" y="1174.2" width="7.3" height="7.3" fill="#555557"/><rect x="1461.6" y="1174.2" width="7.3" height="7.3" fill="#303032"/><rect x="1468.6" y="1174.2" width="7.3" height="7.3" fill="#4e4e50"/><rect x="1475.6" y="1174.2" width="7.3" height="7.3" fill="#3a3a3c"/><rect x="1482.6" y="1174.2" width="7.3" height="7.3" fill="#4e4e50"/><rect x="1489.6" y="1174.2" width="7.3" height="7.3" fill="#3a3a3c"/><rect x="1496.6" y="1174.2" width="7.3" height="7.3" fill="#3a3a3c"/><rect x="1503.6" y="1174.2" width="7.3" height="7.3" fill="#4e4e50"/><rect x="1510.6" y="1174.2" width="7.3" height="7.3" fill="#666668"/><rect x="1517.6" y="1174.2" width="7.3" height="7.3" fill="#3e3e40"/><rect x="1524.6" y="1174.2" width="7.3" height="7.3" fill="#666668"/><rect x="1531.6" y="1174.2" width="7.3" height="7.3" fill="#4e4e50"/><rect x="1538.6" y="1174.2" width="7.3" height="7.3" fill="#666668"/><rect x="1545.6" y="1174.2" width="7.3" height="7.3" fill="#4e4e50"/><rect x="1552.6" y="1174.2" width="7.3" height="7.3" fill="#2a2a2c"/><rect x="1559.6" y="1174.2" width="7.3" height="7.3" fill="#3e3e40"/><rect x="1573.6" y="1174.2" width="7.3" height="7.3" fill="#333335"/><rect x="1580.6" y="1174.2" width="7.3" height="7.3" fill="#2e2e30"/><rect x="1587.6" y="1174.2" width="7.3" height="7.3" fill="#303032"/><rect x="1594.6" y="1174.2" width="7.3" height="7.3" fill="#2c2c2e"/><rect x="1608.6" y="1174.2" width="7.3" height="7.3" fill="#303032"/><rect x="1615.6" y="1174.2" width="7.3" height="7.3" fill="#424244"/><rect x="1622.6" y="1174.2" width="7.3" height="7.3" fill="#5c5c5e"/><rect x="1636.6" y="1174.2" width="7.3" height="7.3" fill="#3a3a3c"/><rect x="1643.6" y="1174.2" width="7.3" height="7.3" fill="#3e3e40"/><rect x="1650.6" y="1174.2" width="7.3" height="7.3" fill="#4e4e50"/><rect x="1657.6" y="1174.2" width="7.3" height="7.3" fill="#424244"/><rect x="1664.6" y="1174.2" width="7.3" height="7.3" fill="#2c2c2e"/><rect x="1671.6" y="1174.2" width="7.3" height="7.3" fill="#48484a"/><rect x="1678.6" y="1174.2" width="7.3" height="7.3" fill="#2a2a2c"/><rect x="1685.6" y="1174.2" width="7.3" height="7.3" fill="#3a3a3c"/><rect x="1692.6" y="1174.2" width="7.3" height="7.3" fill="#2a2a2c"/><rect x="1699.6" y="1174.2" width="7.3" height="7.3" fill="#3a3a3c"/><rect x="1706.6" y="1174.2" width="7.3" height="7.3" fill="#4e4e50"/><rect x="1713.6" y="1174.2" width="7.3" height="7.3" fill="#333335"/><rect x="1720.6" y="1174.2" width="7.3" height="7.3" fill="#333335"/><rect x="1727.6" y="1174.2" width="7.3" height="7.3" fill="#424244"/><rect x="1755.7" y="1174.2" width="7.3" height="7.3" fill="#2e2e30"/><rect x="1762.7" y="1174.2" width="7.3" height="7.3" fill="#5c5c5e"/><rect x="1769.7" y="1174.2" width="7.3" height="7.3" fill="#5c5c5e"/><rect x="1776.7" y="1174.2" width="7.3" height="7.3" fill="#3e3e40"/><rect x="1783.7" y="1174.2" width="7.3" height="7.3" fill="#555557"/><rect x="1790.7" y="1174.2" width="7.3" height="7.3" fill="#2e2e30"/><rect x="1797.7" y="1174.2" width="7.3" height="7.3" fill="#4e4e50"/><rect x="1811.7" y="1174.2" width="7.3" height="7.3" fill="#3a3a3c"/><rect x="1818.7" y="1174.2" width="7.3" height="7.3" fill="#333335"/><rect x="1825.7" y="1174.2" width="7.3" height="7.3" fill="#4e4e50"/><rect x="1832.7" y="1174.2" width="7.3" height="7.3" fill="#666668"/><rect x="1839.7" y="1174.2" width="7.3" height="7.3" fill="#5c5c5e"/><rect x="1853.7" y="1174.2" width="7.3" height="7.3" fill="#3a3a3c"/><rect x="1860.7" y="1174.2" width="7.3" height="7.3" fill="#3a3a3c"/><rect x="1867.7" y="1174.2" width="7.3" height="7.3" fill="#3e3e40"/><rect x="1293.5" y="1181.2" width="7.3" height="7.3" fill="#555557"/><rect x="1300.5" y="1181.2" width="7.3" height="7.3" fill="#363638"/><rect x="1307.5" y="1181.2" width="7.3" height="7.3" fill="#333335"/><rect x="1314.5" y="1181.2" width="7.3" height="7.3" fill="#3e3e40"/><rect x="1321.5" y="1181.2" width="7.3" height="7.3" fill="#4e4e50"/><rect x="1328.5" y="1181.2" width="7.3" height="7.3" fill="#363638"/><rect x="1335.5" y="1181.2" width="7.3" height="7.3" fill="#333335"/><rect x="1349.5" y="1181.2" width="7.3" height="7.3" fill="#666668"/><rect x="1356.5" y="1181.2" width="7.3" height="7.3" fill="#363638"/><rect x="1363.5" y="1181.2" width="7.3" height="7.3" fill="#2e2e30"/><rect x="1370.5" y="1181.2" width="7.3" height="7.3" fill="#363638"/><rect x="1377.5" y="1181.2" width="7.3" height="7.3" fill="#2a2a2c"/><rect x="1384.5" y="1181.2" width="7.3" height="7.3" fill="#303032"/><rect x="1398.5" y="1181.2" width="7.3" height="7.3" fill="#333335"/><rect x="1405.5" y="1181.2" width="7.3" height="7.3" fill="#48484a"/><rect x="1412.5" y="1181.2" width="7.3" height="7.3" fill="#303032"/><rect x="1419.5" y="1181.2" width="7.3" height="7.3" fill="#3e3e40"/><rect x="1426.5" y="1181.2" width="7.3" height="7.3" fill="#2e2e30"/><rect x="1433.5" y="1181.2" width="7.3" height="7.3" fill="#3a3a3c"/><rect x="1440.6" y="1181.2" width="7.3" height="7.3" fill="#2e2e30"/><rect x="1447.6" y="1181.2" width="7.3" height="7.3" fill="#555557"/><rect x="1454.6" y="1181.2" width="7.3" height="7.3" fill="#5c5c5e"/><rect x="1461.6" y="1181.2" width="7.3" height="7.3" fill="#424244"/><rect x="1468.6" y="1181.2" width="7.3" height="7.3" fill="#666668"/><rect x="1475.6" y="1181.2" width="7.3" height="7.3" fill="#3e3e40"/><rect x="1482.6" y="1181.2" width="7.3" height="7.3" fill="#424244"/><rect x="1489.6" y="1181.2" width="7.3" height="7.3" fill="#666668"/><rect x="1496.6" y="1181.2" width="7.3" height="7.3" fill="#2c2c2e"/><rect x="1503.6" y="1181.2" width="7.3" height="7.3" fill="#333335"/><rect x="1510.6" y="1181.2" width="7.3" height="7.3" fill="#666668"/><rect x="1517.6" y="1181.2" width="7.3" height="7.3" fill="#3e3e40"/><rect x="1524.6" y="1181.2" width="7.3" height="7.3" fill="#3e3e40"/><rect x="1531.6" y="1181.2" width="7.3" height="7.3" fill="#2e2e30"/><rect x="1538.6" y="1181.2" width="7.3" height="7.3" fill="#303032"/><rect x="1545.6" y="1181.2" width="7.3" height="7.3" fill="#424244"/><rect x="1552.6" y="1181.2" width="7.3" height="7.3" fill="#555557"/><rect x="1559.6" y="1181.2" width="7.3" height="7.3" fill="#666668"/><rect x="1566.6" y="1181.2" width="7.3" height="7.3" fill="#555557"/><rect x="1573.6" y="1181.2" width="7.3" height="7.3" fill="#4e4e50"/><rect x="1580.6" y="1181.2" width="7.3" height="7.3" fill="#3e3e40"/><rect x="1587.6" y="1181.2" width="7.3" height="7.3" fill="#3a3a3c"/><rect x="1601.6" y="1181.2" width="7.3" height="7.3" fill="#2e2e30"/><rect x="1608.6" y="1181.2" width="7.3" height="7.3" fill="#4e4e50"/><rect x="1615.6" y="1181.2" width="7.3" height="7.3" fill="#2a2a2c"/><rect x="1622.6" y="1181.2" width="7.3" height="7.3" fill="#4e4e50"/><rect x="1629.6" y="1181.2" width="7.3" height="7.3" fill="#363638"/><rect x="1643.6" y="1181.2" width="7.3" height="7.3" fill="#3e3e40"/><rect x="1650.6" y="1181.2" width="7.3" height="7.3" fill="#2e2e30"/><rect x="1657.6" y="1181.2" width="7.3" height="7.3" fill="#555557"/><rect x="1664.6" y="1181.2" width="7.3" height="7.3" fill="#2e2e30"/><rect x="1671.6" y="1181.2" width="7.3" height="7.3" fill="#666668"/><rect x="1678.6" y="1181.2" width="7.3" height="7.3" fill="#363638"/><rect x="1685.6" y="1181.2" width="7.3" height="7.3" fill="#424244"/><rect x="1692.6" y="1181.2" width="7.3" height="7.3" fill="#303032"/><rect x="1699.6" y="1181.2" width="7.3" height="7.3" fill="#363638"/><rect x="1706.6" y="1181.2" width="7.3" height="7.3" fill="#424244"/><rect x="1713.6" y="1181.2" width="7.3" height="7.3" fill="#333335"/><rect x="1720.6" y="1181.2" width="7.3" height="7.3" fill="#666668"/><rect x="1727.6" y="1181.2" width="7.3" height="7.3" fill="#363638"/><rect x="1734.7" y="1181.2" width="7.3" height="7.3" fill="#333335"/><rect x="1748.7" y="1181.2" width="7.3" height="7.3" fill="#303032"/><rect x="1755.7" y="1181.2" width="7.3" height="7.3" fill="#5c5c5e"/><rect x="1762.7" y="1181.2" width="7.3" height="7.3" fill="#303032"/><rect x="1769.7" y="1181.2" width="7.3" height="7.3" fill="#333335"/><rect x="1776.7" y="1181.2" width="7.3" height="7.3" fill="#4e4e50"/><rect x="1783.7" y="1181.2" width="7.3" height="7.3" fill="#2a2a2c"/><rect x="1790.7" y="1181.2" width="7.3" height="7.3" fill="#424244"/><rect x="1804.7" y="1181.2" width="7.3" height="7.3" fill="#2a2a2c"/><rect x="1811.7" y="1181.2" width="7.3" height="7.3" fill="#2c2c2e"/><rect x="1818.7" y="1181.2" width="7.3" height="7.3" fill="#303032"/><rect x="1832.7" y="1181.2" width="7.3" height="7.3" fill="#5c5c5e"/><rect x="1839.7" y="1181.2" width="7.3" height="7.3" fill="#5c5c5e"/><rect x="1846.7" y="1181.2" width="7.3" height="7.3" fill="#424244"/><rect x="1853.7" y="1181.2" width="7.3" height="7.3" fill="#48484a"/><rect x="1860.7" y="1181.2" width="7.3" height="7.3" fill="#4e4e50"/><rect x="1867.7" y="1181.2" width="7.3" height="7.3" fill="#48484a"/><rect x="882" y="1241.4" width="1262" height="2.2" fill="#1b1b1e"/><rect x="903.9" y="1206.3" width="7.2" height="7.3" fill="#2a2a2c"/><rect x="910.8" y="1206.3" width="7.2" height="7.3" fill="#3e3e40"/><rect x="917.7" y="1206.3" width="7.2" height="7.3" fill="#2e2e30"/><rect x="924.6" y="1206.3" width="7.2" height="7.3" fill="#2e2e30"/><rect x="938.4" y="1206.3" width="7.2" height="7.3" fill="#2c2c2e"/><rect x="952.2" y="1206.3" width="7.2" height="7.3" fill="#363638"/><rect x="966.0" y="1206.3" width="7.2" height="7.3" fill="#333335"/><rect x="973.0" y="1206.3" width="7.2" height="7.3" fill="#333335"/><rect x="986.8" y="1206.3" width="7.2" height="7.3" fill="#2a2a2c"/><rect x="993.7" y="1206.3" width="7.2" height="7.3" fill="#3a3a3c"/><rect x="1000.6" y="1206.3" width="7.2" height="7.3" fill="#48484a"/><rect x="1014.4" y="1206.3" width="7.2" height="7.3" fill="#48484a"/><rect x="1021.3" y="1206.3" width="7.2" height="7.3" fill="#666668"/><rect x="1028.2" y="1206.3" width="7.2" height="7.3" fill="#5c5c5e"/><rect x="1035.1" y="1206.3" width="7.2" height="7.3" fill="#555557"/><rect x="903.9" y="1213.3" width="7.2" height="7.3" fill="#2a2a2c"/><rect x="910.8" y="1213.3" width="7.2" height="7.3" fill="#48484a"/><rect x="917.7" y="1213.3" width="7.2" height="7.3" fill="#4e4e50"/><rect x="931.5" y="1213.3" width="7.2" height="7.3" fill="#3a3a3c"/><rect x="938.4" y="1213.3" width="7.2" height="7.3" fill="#2c2c2e"/><rect x="945.3" y="1213.3" width="7.2" height="7.3" fill="#303032"/><rect x="959.1" y="1213.3" width="7.2" height="7.3" fill="#3a3a3c"/><rect x="966.0" y="1213.3" width="7.2" height="7.3" fill="#4e4e50"/><rect x="973.0" y="1213.3" width="7.2" height="7.3" fill="#666668"/><rect x="979.9" y="1213.3" width="7.2" height="7.3" fill="#666668"/><rect x="986.8" y="1213.3" width="7.2" height="7.3" fill="#3e3e40"/><rect x="993.7" y="1213.3" width="7.2" height="7.3" fill="#555557"/><rect x="1000.6" y="1213.3" width="7.2" height="7.3" fill="#3e3e40"/><rect x="1007.5" y="1213.3" width="7.2" height="7.3" fill="#2e2e30"/><rect x="1021.3" y="1213.3" width="7.2" height="7.3" fill="#555557"/><rect x="1028.2" y="1213.3" width="7.2" height="7.3" fill="#666668"/><rect x="1035.1" y="1213.3" width="7.2" height="7.3" fill="#5c5c5e"/><rect x="897.0" y="1220.3" width="7.2" height="7.3" fill="#4e4e50"/><rect x="903.9" y="1220.3" width="7.2" height="7.3" fill="#3e3e40"/><rect x="910.8" y="1220.3" width="7.2" height="7.3" fill="#333335"/><rect x="924.6" y="1220.3" width="7.2" height="7.3" fill="#2a2a2c"/><rect x="931.5" y="1220.3" width="7.2" height="7.3" fill="#2a2a2c"/><rect x="945.3" y="1220.3" width="7.2" height="7.3" fill="#48484a"/><rect x="952.2" y="1220.3" width="7.2" height="7.3" fill="#333335"/><rect x="959.1" y="1220.3" width="7.2" height="7.3" fill="#48484a"/><rect x="966.0" y="1220.3" width="7.2" height="7.3" fill="#666668"/><rect x="979.9" y="1220.3" width="7.2" height="7.3" fill="#363638"/><rect x="986.8" y="1220.3" width="7.2" height="7.3" fill="#48484a"/><rect x="993.7" y="1220.3" width="7.2" height="7.3" fill="#3e3e40"/><rect x="1000.6" y="1220.3" width="7.2" height="7.3" fill="#2e2e30"/><rect x="1014.4" y="1220.3" width="7.2" height="7.3" fill="#4e4e50"/><rect x="1021.3" y="1220.3" width="7.2" height="7.3" fill="#5c5c5e"/><rect x="1028.2" y="1220.3" width="7.2" height="7.3" fill="#3a3a3c"/><rect x="1035.1" y="1220.3" width="7.2" height="7.3" fill="#3e3e40"/><rect x="903.9" y="1227.3" width="7.2" height="7.3" fill="#48484a"/><rect x="910.8" y="1227.3" width="7.2" height="7.3" fill="#333335"/><rect x="917.7" y="1227.3" width="7.2" height="7.3" fill="#4e4e50"/><rect x="924.6" y="1227.3" width="7.2" height="7.3" fill="#666668"/><rect x="931.5" y="1227.3" width="7.2" height="7.3" fill="#666668"/><rect x="938.4" y="1227.3" width="7.2" height="7.3" fill="#2a2a2c"/><rect x="952.2" y="1227.3" width="7.2" height="7.3" fill="#333335"/><rect x="959.1" y="1227.3" width="7.2" height="7.3" fill="#303032"/><rect x="966.0" y="1227.3" width="7.2" height="7.3" fill="#4e4e50"/><rect x="973.0" y="1227.3" width="7.2" height="7.3" fill="#5c5c5e"/><rect x="993.7" y="1227.3" width="7.2" height="7.3" fill="#2a2a2c"/><rect x="1000.6" y="1227.3" width="7.2" height="7.3" fill="#333335"/><rect x="1007.5" y="1227.3" width="7.2" height="7.3" fill="#48484a"/><rect x="1021.3" y="1227.3" width="7.2" height="7.3" fill="#5c5c5e"/><rect x="1028.2" y="1227.3" width="7.2" height="7.3" fill="#666668"/><rect x="1035.1" y="1227.3" width="7.2" height="7.3" fill="#666668"/><rect x="1290.7" y="1206.3" width="7.3" height="7.3" fill="#666668"/><rect x="1297.8" y="1206.3" width="7.3" height="7.3" fill="#424244"/><rect x="1304.8" y="1206.3" width="7.3" height="7.3" fill="#3e3e40"/><rect x="1311.8" y="1206.3" width="7.3" height="7.3" fill="#2c2c2e"/><rect x="1318.9" y="1206.3" width="7.3" height="7.3" fill="#3e3e40"/><rect x="1325.9" y="1206.3" width="7.3" height="7.3" fill="#303032"/><rect x="1332.9" y="1206.3" width="7.3" height="7.3" fill="#555557"/><rect x="1347.0" y="1206.3" width="7.3" height="7.3" fill="#48484a"/><rect x="1354.0" y="1206.3" width="7.3" height="7.3" fill="#3a3a3c"/><rect x="1361.0" y="1206.3" width="7.3" height="7.3" fill="#303032"/><rect x="1375.1" y="1206.3" width="7.3" height="7.3" fill="#2a2a2c"/><rect x="1382.1" y="1206.3" width="7.3" height="7.3" fill="#3e3e40"/><rect x="1389.2" y="1206.3" width="7.3" height="7.3" fill="#424244"/><rect x="1403.2" y="1206.3" width="7.3" height="7.3" fill="#303032"/><rect x="1410.3" y="1206.3" width="7.3" height="7.3" fill="#424244"/><rect x="1431.4" y="1206.3" width="7.3" height="7.3" fill="#3e3e40"/><rect x="1438.4" y="1206.3" width="7.3" height="7.3" fill="#303032"/><rect x="1445.4" y="1206.3" width="7.3" height="7.3" fill="#303032"/><rect x="1452.5" y="1206.3" width="7.3" height="7.3" fill="#5c5c5e"/><rect x="1459.5" y="1206.3" width="7.3" height="7.3" fill="#363638"/><rect x="1466.5" y="1206.3" width="7.3" height="7.3" fill="#363638"/><rect x="1473.6" y="1206.3" width="7.3" height="7.3" fill="#424244"/><rect x="1487.6" y="1206.3" width="7.3" height="7.3" fill="#3e3e40"/><rect x="1494.7" y="1206.3" width="7.3" height="7.3" fill="#2c2c2e"/><rect x="1501.7" y="1206.3" width="7.3" height="7.3" fill="#3e3e40"/><rect x="1508.7" y="1206.3" width="7.3" height="7.3" fill="#2e2e30"/><rect x="1515.7" y="1206.3" width="7.3" height="7.3" fill="#2a2a2c"/><rect x="1522.8" y="1206.3" width="7.3" height="7.3" fill="#424244"/><rect x="1529.8" y="1206.3" width="7.3" height="7.3" fill="#2c2c2e"/><rect x="1536.8" y="1206.3" width="7.3" height="7.3" fill="#666668"/><rect x="1550.9" y="1206.3" width="7.3" height="7.3" fill="#48484a"/><rect x="1557.9" y="1206.3" width="7.3" height="7.3" fill="#5c5c5e"/><rect x="1565.0" y="1206.3" width="7.3" height="7.3" fill="#2c2c2e"/><rect x="1290.7" y="1213.3" width="7.3" height="7.3" fill="#666668"/><rect x="1297.8" y="1213.3" width="7.3" height="7.3" fill="#2e2e30"/><rect x="1304.8" y="1213.3" width="7.3" height="7.3" fill="#2a2a2c"/><rect x="1311.8" y="1213.3" width="7.3" height="7.3" fill="#2e2e30"/><rect x="1318.9" y="1213.3" width="7.3" height="7.3" fill="#2a2a2c"/><rect x="1325.9" y="1213.3" width="7.3" height="7.3" fill="#424244"/><rect x="1332.9" y="1213.3" width="7.3" height="7.3" fill="#555557"/><rect x="1340.0" y="1213.3" width="7.3" height="7.3" fill="#666668"/><rect x="1354.0" y="1213.3" width="7.3" height="7.3" fill="#48484a"/><rect x="1361.0" y="1213.3" width="7.3" height="7.3" fill="#2c2c2e"/><rect x="1368.1" y="1213.3" width="7.3" height="7.3" fill="#2c2c2e"/><rect x="1375.1" y="1213.3" width="7.3" height="7.3" fill="#48484a"/><rect x="1382.1" y="1213.3" width="7.3" height="7.3" fill="#2c2c2e"/><rect x="1396.2" y="1213.3" width="7.3" height="7.3" fill="#3a3a3c"/><rect x="1403.2" y="1213.3" width="7.3" height="7.3" fill="#666668"/><rect x="1410.3" y="1213.3" width="7.3" height="7.3" fill="#303032"/><rect x="1424.3" y="1213.3" width="7.3" height="7.3" fill="#2a2a2c"/><rect x="1445.4" y="1213.3" width="7.3" height="7.3" fill="#424244"/><rect x="1466.5" y="1213.3" width="7.3" height="7.3" fill="#5c5c5e"/><rect x="1473.6" y="1213.3" width="7.3" height="7.3" fill="#555557"/><rect x="1480.6" y="1213.3" width="7.3" height="7.3" fill="#3e3e40"/><rect x="1487.6" y="1213.3" width="7.3" height="7.3" fill="#2e2e30"/><rect x="1494.7" y="1213.3" width="7.3" height="7.3" fill="#2a2a2c"/><rect x="1508.7" y="1213.3" width="7.3" height="7.3" fill="#333335"/><rect x="1515.7" y="1213.3" width="7.3" height="7.3" fill="#3e3e40"/><rect x="1522.8" y="1213.3" width="7.3" height="7.3" fill="#2c2c2e"/><rect x="1529.8" y="1213.3" width="7.3" height="7.3" fill="#363638"/><rect x="1536.8" y="1213.3" width="7.3" height="7.3" fill="#2c2c2e"/><rect x="1543.9" y="1213.3" width="7.3" height="7.3" fill="#3a3a3c"/><rect x="1550.9" y="1213.3" width="7.3" height="7.3" fill="#303032"/><rect x="1290.7" y="1220.3" width="7.3" height="7.3" fill="#303032"/><rect x="1297.8" y="1220.3" width="7.3" height="7.3" fill="#2e2e30"/><rect x="1311.8" y="1220.3" width="7.3" height="7.3" fill="#48484a"/><rect x="1332.9" y="1220.3" width="7.3" height="7.3" fill="#3e3e40"/><rect x="1354.0" y="1220.3" width="7.3" height="7.3" fill="#2a2a2c"/><rect x="1361.0" y="1220.3" width="7.3" height="7.3" fill="#3e3e40"/><rect x="1375.1" y="1220.3" width="7.3" height="7.3" fill="#303032"/><rect x="1382.1" y="1220.3" width="7.3" height="7.3" fill="#4e4e50"/><rect x="1389.2" y="1220.3" width="7.3" height="7.3" fill="#363638"/><rect x="1396.2" y="1220.3" width="7.3" height="7.3" fill="#2a2a2c"/><rect x="1403.2" y="1220.3" width="7.3" height="7.3" fill="#3e3e40"/><rect x="1410.3" y="1220.3" width="7.3" height="7.3" fill="#2e2e30"/><rect x="1417.3" y="1220.3" width="7.3" height="7.3" fill="#2e2e30"/><rect x="1424.3" y="1220.3" width="7.3" height="7.3" fill="#3a3a3c"/><rect x="1431.4" y="1220.3" width="7.3" height="7.3" fill="#2a2a2c"/><rect x="1438.4" y="1220.3" width="7.3" height="7.3" fill="#666668"/><rect x="1445.4" y="1220.3" width="7.3" height="7.3" fill="#5c5c5e"/><rect x="1452.5" y="1220.3" width="7.3" height="7.3" fill="#3e3e40"/><rect x="1459.5" y="1220.3" width="7.3" height="7.3" fill="#3e3e40"/><rect x="1473.6" y="1220.3" width="7.3" height="7.3" fill="#424244"/><rect x="1480.6" y="1220.3" width="7.3" height="7.3" fill="#5c5c5e"/><rect x="1487.6" y="1220.3" width="7.3" height="7.3" fill="#303032"/><rect x="1494.7" y="1220.3" width="7.3" height="7.3" fill="#666668"/><rect x="1501.7" y="1220.3" width="7.3" height="7.3" fill="#333335"/><rect x="1508.7" y="1220.3" width="7.3" height="7.3" fill="#363638"/><rect x="1515.7" y="1220.3" width="7.3" height="7.3" fill="#333335"/><rect x="1536.8" y="1220.3" width="7.3" height="7.3" fill="#333335"/><rect x="1543.9" y="1220.3" width="7.3" height="7.3" fill="#2e2e30"/><rect x="1550.9" y="1220.3" width="7.3" height="7.3" fill="#555557"/><rect x="1565.0" y="1220.3" width="7.3" height="7.3" fill="#4e4e50"/><rect x="1283.7" y="1227.3" width="7.3" height="7.3" fill="#5c5c5e"/><rect x="1290.7" y="1227.3" width="7.3" height="7.3" fill="#424244"/><rect x="1297.8" y="1227.3" width="7.3" height="7.3" fill="#2a2a2c"/><rect x="1304.8" y="1227.3" width="7.3" height="7.3" fill="#424244"/><rect x="1311.8" y="1227.3" width="7.3" height="7.3" fill="#363638"/><rect x="1318.9" y="1227.3" width="7.3" height="7.3" fill="#3a3a3c"/><rect x="1325.9" y="1227.3" width="7.3" height="7.3" fill="#48484a"/><rect x="1332.9" y="1227.3" width="7.3" height="7.3" fill="#666668"/><rect x="1340.0" y="1227.3" width="7.3" height="7.3" fill="#5c5c5e"/><rect x="1347.0" y="1227.3" width="7.3" height="7.3" fill="#2e2e30"/><rect x="1354.0" y="1227.3" width="7.3" height="7.3" fill="#2c2c2e"/><rect x="1375.1" y="1227.3" width="7.3" height="7.3" fill="#5c5c5e"/><rect x="1382.1" y="1227.3" width="7.3" height="7.3" fill="#303032"/><rect x="1389.2" y="1227.3" width="7.3" height="7.3" fill="#4e4e50"/><rect x="1396.2" y="1227.3" width="7.3" height="7.3" fill="#5c5c5e"/><rect x="1403.2" y="1227.3" width="7.3" height="7.3" fill="#333335"/><rect x="1410.3" y="1227.3" width="7.3" height="7.3" fill="#2c2c2e"/><rect x="1417.3" y="1227.3" width="7.3" height="7.3" fill="#424244"/><rect x="1424.3" y="1227.3" width="7.3" height="7.3" fill="#555557"/><rect x="1438.4" y="1227.3" width="7.3" height="7.3" fill="#363638"/><rect x="1445.4" y="1227.3" width="7.3" height="7.3" fill="#666668"/><rect x="1452.5" y="1227.3" width="7.3" height="7.3" fill="#3e3e40"/><rect x="1459.5" y="1227.3" width="7.3" height="7.3" fill="#3a3a3c"/><rect x="1473.6" y="1227.3" width="7.3" height="7.3" fill="#666668"/><rect x="1480.6" y="1227.3" width="7.3" height="7.3" fill="#303032"/><rect x="1487.6" y="1227.3" width="7.3" height="7.3" fill="#666668"/><rect x="1501.7" y="1227.3" width="7.3" height="7.3" fill="#555557"/><rect x="1508.7" y="1227.3" width="7.3" height="7.3" fill="#48484a"/><rect x="1522.8" y="1227.3" width="7.3" height="7.3" fill="#3e3e40"/><rect x="1536.8" y="1227.3" width="7.3" height="7.3" fill="#363638"/><rect x="1543.9" y="1227.3" width="7.3" height="7.3" fill="#666668"/><rect x="1565.0" y="1227.3" width="7.3" height="7.3" fill="#666668"/><rect x="882" y="1287.5" width="1262" height="2.2" fill="#1b1b1e"/><rect x="897.0" y="1252.4" width="7.2" height="7.3" fill="#5c5c5e"/><rect x="910.8" y="1252.4" width="7.2" height="7.3" fill="#2c2c2e"/><rect x="924.6" y="1252.4" width="7.2" height="7.3" fill="#424244"/><rect x="931.5" y="1252.4" width="7.2" height="7.3" fill="#5c5c5e"/><rect x="938.4" y="1252.4" width="7.2" height="7.3" fill="#2a2a2c"/><rect x="945.3" y="1252.4" width="7.2" height="7.3" fill="#2c2c2e"/><rect x="952.2" y="1252.4" width="7.2" height="7.3" fill="#2e2e30"/><rect x="959.1" y="1252.4" width="7.2" height="7.3" fill="#333335"/><rect x="966.0" y="1252.4" width="7.2" height="7.3" fill="#666668"/><rect x="979.9" y="1252.4" width="7.2" height="7.3" fill="#555557"/><rect x="986.8" y="1252.4" width="7.2" height="7.3" fill="#333335"/><rect x="993.7" y="1252.4" width="7.2" height="7.3" fill="#48484a"/><rect x="1000.6" y="1252.4" width="7.2" height="7.3" fill="#3e3e40"/><rect x="1007.5" y="1252.4" width="7.2" height="7.3" fill="#555557"/><rect x="1014.4" y="1252.4" width="7.2" height="7.3" fill="#363638"/><rect x="1028.2" y="1252.4" width="7.2" height="7.3" fill="#2a2a2c"/><rect x="1035.1" y="1252.4" width="7.2" height="7.3" fill="#3e3e40"/><rect x="897.0" y="1259.4" width="7.2" height="7.3" fill="#424244"/><rect x="903.9" y="1259.4" width="7.2" height="7.3" fill="#2c2c2e"/><rect x="910.8" y="1259.4" width="7.2" height="7.3" fill="#3a3a3c"/><rect x="924.6" y="1259.4" width="7.2" height="7.3" fill="#303032"/><rect x="938.4" y="1259.4" width="7.2" height="7.3" fill="#48484a"/><rect x="945.3" y="1259.4" width="7.2" height="7.3" fill="#3a3a3c"/><rect x="952.2" y="1259.4" width="7.2" height="7.3" fill="#666668"/><rect x="959.1" y="1259.4" width="7.2" height="7.3" fill="#4e4e50"/><rect x="966.0" y="1259.4" width="7.2" height="7.3" fill="#3a3a3c"/><rect x="973.0" y="1259.4" width="7.2" height="7.3" fill="#48484a"/><rect x="979.9" y="1259.4" width="7.2" height="7.3" fill="#3a3a3c"/><rect x="993.7" y="1259.4" width="7.2" height="7.3" fill="#363638"/><rect x="1000.6" y="1259.4" width="7.2" height="7.3" fill="#303032"/><rect x="1014.4" y="1259.4" width="7.2" height="7.3" fill="#666668"/><rect x="910.8" y="1266.4" width="7.2" height="7.3" fill="#424244"/><rect x="917.7" y="1266.4" width="7.2" height="7.3" fill="#4e4e50"/><rect x="931.5" y="1266.4" width="7.2" height="7.3" fill="#3a3a3c"/><rect x="938.4" y="1266.4" width="7.2" height="7.3" fill="#2a2a2c"/><rect x="945.3" y="1266.4" width="7.2" height="7.3" fill="#424244"/><rect x="952.2" y="1266.4" width="7.2" height="7.3" fill="#363638"/><rect x="959.1" y="1266.4" width="7.2" height="7.3" fill="#424244"/><rect x="966.0" y="1266.4" width="7.2" height="7.3" fill="#303032"/><rect x="973.0" y="1266.4" width="7.2" height="7.3" fill="#3a3a3c"/><rect x="979.9" y="1266.4" width="7.2" height="7.3" fill="#3e3e40"/><rect x="986.8" y="1266.4" width="7.2" height="7.3" fill="#5c5c5e"/><rect x="1007.5" y="1266.4" width="7.2" height="7.3" fill="#666668"/><rect x="1014.4" y="1266.4" width="7.2" height="7.3" fill="#333335"/><rect x="1028.2" y="1266.4" width="7.2" height="7.3" fill="#4e4e50"/><rect x="1035.1" y="1266.4" width="7.2" height="7.3" fill="#2a2a2c"/><rect x="897.0" y="1273.4" width="7.2" height="7.3" fill="#333335"/><rect x="903.9" y="1273.4" width="7.2" height="7.3" fill="#2a2a2c"/><rect x="910.8" y="1273.4" width="7.2" height="7.3" fill="#2a2a2c"/><rect x="917.7" y="1273.4" width="7.2" height="7.3" fill="#333335"/><rect x="924.6" y="1273.4" width="7.2" height="7.3" fill="#2e2e30"/><rect x="931.5" y="1273.4" width="7.2" height="7.3" fill="#48484a"/><rect x="959.1" y="1273.4" width="7.2" height="7.3" fill="#48484a"/><rect x="966.0" y="1273.4" width="7.2" height="7.3" fill="#2e2e30"/><rect x="973.0" y="1273.4" width="7.2" height="7.3" fill="#424244"/><rect x="979.9" y="1273.4" width="7.2" height="7.3" fill="#333335"/><rect x="993.7" y="1273.4" width="7.2" height="7.3" fill="#333335"/><rect x="1000.6" y="1273.4" width="7.2" height="7.3" fill="#2c2c2e"/><rect x="1007.5" y="1273.4" width="7.2" height="7.3" fill="#333335"/><rect x="1021.3" y="1273.4" width="7.2" height="7.3" fill="#48484a"/><rect x="1028.2" y="1273.4" width="7.2" height="7.3" fill="#3a3a3c"/><rect x="1035.1" y="1273.4" width="7.2" height="7.3" fill="#555557"/><rect x="1283.7" y="1252.4" width="7.3" height="7.3" fill="#424244"/><rect x="1290.7" y="1252.4" width="7.3" height="7.3" fill="#3e3e40"/><rect x="1297.8" y="1252.4" width="7.3" height="7.3" fill="#333335"/><rect x="1304.8" y="1252.4" width="7.3" height="7.3" fill="#363638"/><rect x="1311.8" y="1252.4" width="7.3" height="7.3" fill="#424244"/><rect x="1318.9" y="1252.4" width="7.3" height="7.3" fill="#48484a"/><rect x="1325.9" y="1252.4" width="7.3" height="7.3" fill="#363638"/><rect x="1333.0" y="1252.4" width="7.3" height="7.3" fill="#303032"/><rect x="1340.0" y="1252.4" width="7.3" height="7.3" fill="#363638"/><rect x="1347.0" y="1252.4" width="7.3" height="7.3" fill="#333335"/><rect x="1361.1" y="1252.4" width="7.3" height="7.3" fill="#2a2a2c"/><rect x="1368.1" y="1252.4" width="7.3" height="7.3" fill="#2e2e30"/><rect x="1375.2" y="1252.4" width="7.3" height="7.3" fill="#48484a"/><rect x="1389.2" y="1252.4" width="7.3" height="7.3" fill="#2a2a2c"/><rect x="1396.3" y="1252.4" width="7.3" height="7.3" fill="#666668"/><rect x="1403.3" y="1252.4" width="7.3" height="7.3" fill="#555557"/><rect x="1410.3" y="1252.4" width="7.3" height="7.3" fill="#424244"/><rect x="1417.4" y="1252.4" width="7.3" height="7.3" fill="#4e4e50"/><rect x="1424.4" y="1252.4" width="7.3" height="7.3" fill="#2e2e30"/><rect x="1431.5" y="1252.4" width="7.3" height="7.3" fill="#4e4e50"/><rect x="1438.5" y="1252.4" width="7.3" height="7.3" fill="#4e4e50"/><rect x="1445.5" y="1252.4" width="7.3" height="7.3" fill="#48484a"/><rect x="1466.6" y="1252.4" width="7.3" height="7.3" fill="#555557"/><rect x="1494.8" y="1252.4" width="7.3" height="7.3" fill="#4e4e50"/><rect x="1501.8" y="1252.4" width="7.3" height="7.3" fill="#555557"/><rect x="1508.8" y="1252.4" width="7.3" height="7.3" fill="#666668"/><rect x="1515.9" y="1252.4" width="7.3" height="7.3" fill="#3a3a3c"/><rect x="1522.9" y="1252.4" width="7.3" height="7.3" fill="#48484a"/><rect x="1530.0" y="1252.4" width="7.3" height="7.3" fill="#3a3a3c"/><rect x="1544.0" y="1252.4" width="7.3" height="7.3" fill="#3a3a3c"/><rect x="1558.1" y="1252.4" width="7.3" height="7.3" fill="#48484a"/><rect x="1565.1" y="1252.4" width="7.3" height="7.3" fill="#3a3a3c"/><rect x="1579.2" y="1252.4" width="7.3" height="7.3" fill="#333335"/><rect x="1586.2" y="1252.4" width="7.3" height="7.3" fill="#333335"/><rect x="1593.3" y="1252.4" width="7.3" height="7.3" fill="#424244"/><rect x="1600.3" y="1252.4" width="7.3" height="7.3" fill="#3a3a3c"/><rect x="1607.3" y="1252.4" width="7.3" height="7.3" fill="#2a2a2c"/><rect x="1614.4" y="1252.4" width="7.3" height="7.3" fill="#666668"/><rect x="1628.5" y="1252.4" width="7.3" height="7.3" fill="#333335"/><rect x="1635.5" y="1252.4" width="7.3" height="7.3" fill="#333335"/><rect x="1649.6" y="1252.4" width="7.3" height="7.3" fill="#3a3a3c"/><rect x="1656.6" y="1252.4" width="7.3" height="7.3" fill="#2c2c2e"/><rect x="1670.7" y="1252.4" width="7.3" height="7.3" fill="#666668"/><rect x="1677.7" y="1252.4" width="7.3" height="7.3" fill="#303032"/><rect x="1691.8" y="1252.4" width="7.3" height="7.3" fill="#3a3a3c"/><rect x="1712.9" y="1252.4" width="7.3" height="7.3" fill="#333335"/><rect x="1719.9" y="1252.4" width="7.3" height="7.3" fill="#3e3e40"/><rect x="1727.0" y="1252.4" width="7.3" height="7.3" fill="#424244"/><rect x="1734.0" y="1252.4" width="7.3" height="7.3" fill="#424244"/><rect x="1741.0" y="1252.4" width="7.3" height="7.3" fill="#3a3a3c"/><rect x="1748.1" y="1252.4" width="7.3" height="7.3" fill="#424244"/><rect x="1755.1" y="1252.4" width="7.3" height="7.3" fill="#3a3a3c"/><rect x="1762.1" y="1252.4" width="7.3" height="7.3" fill="#363638"/><rect x="1769.2" y="1252.4" width="7.3" height="7.3" fill="#4e4e50"/><rect x="1776.2" y="1252.4" width="7.3" height="7.3" fill="#2a2a2c"/><rect x="1783.2" y="1252.4" width="7.3" height="7.3" fill="#424244"/><rect x="1790.3" y="1252.4" width="7.3" height="7.3" fill="#3a3a3c"/><rect x="1797.3" y="1252.4" width="7.3" height="7.3" fill="#3a3a3c"/><rect x="1804.3" y="1252.4" width="7.3" height="7.3" fill="#48484a"/><rect x="1811.4" y="1252.4" width="7.3" height="7.3" fill="#303032"/><rect x="1825.5" y="1252.4" width="7.3" height="7.3" fill="#3e3e40"/><rect x="1832.5" y="1252.4" width="7.3" height="7.3" fill="#48484a"/><rect x="1839.5" y="1252.4" width="7.3" height="7.3" fill="#424244"/><rect x="1846.6" y="1252.4" width="7.3" height="7.3" fill="#2c2c2e"/><rect x="1853.6" y="1252.4" width="7.3" height="7.3" fill="#363638"/><rect x="1860.6" y="1252.4" width="7.3" height="7.3" fill="#2c2c2e"/><rect x="1283.7" y="1259.4" width="7.3" height="7.3" fill="#2c2c2e"/><rect x="1290.7" y="1259.4" width="7.3" height="7.3" fill="#333335"/><rect x="1297.8" y="1259.4" width="7.3" height="7.3" fill="#666668"/><rect x="1311.8" y="1259.4" width="7.3" height="7.3" fill="#3a3a3c"/><rect x="1318.9" y="1259.4" width="7.3" height="7.3" fill="#424244"/><rect x="1325.9" y="1259.4" width="7.3" height="7.3" fill="#424244"/><rect x="1333.0" y="1259.4" width="7.3" height="7.3" fill="#303032"/><rect x="1340.0" y="1259.4" width="7.3" height="7.3" fill="#2a2a2c"/><rect x="1347.0" y="1259.4" width="7.3" height="7.3" fill="#48484a"/><rect x="1354.1" y="1259.4" width="7.3" height="7.3" fill="#48484a"/><rect x="1368.1" y="1259.4" width="7.3" height="7.3" fill="#2a2a2c"/><rect x="1375.2" y="1259.4" width="7.3" height="7.3" fill="#2a2a2c"/><rect x="1382.2" y="1259.4" width="7.3" height="7.3" fill="#333335"/><rect x="1389.2" y="1259.4" width="7.3" height="7.3" fill="#424244"/><rect x="1396.3" y="1259.4" width="7.3" height="7.3" fill="#333335"/><rect x="1403.3" y="1259.4" width="7.3" height="7.3" fill="#2c2c2e"/><rect x="1410.3" y="1259.4" width="7.3" height="7.3" fill="#4e4e50"/><rect x="1417.4" y="1259.4" width="7.3" height="7.3" fill="#2e2e30"/><rect x="1424.4" y="1259.4" width="7.3" height="7.3" fill="#424244"/><rect x="1431.5" y="1259.4" width="7.3" height="7.3" fill="#666668"/><rect x="1438.5" y="1259.4" width="7.3" height="7.3" fill="#424244"/><rect x="1445.5" y="1259.4" width="7.3" height="7.3" fill="#2e2e30"/><rect x="1452.6" y="1259.4" width="7.3" height="7.3" fill="#3a3a3c"/><rect x="1459.6" y="1259.4" width="7.3" height="7.3" fill="#2e2e30"/><rect x="1466.6" y="1259.4" width="7.3" height="7.3" fill="#5c5c5e"/><rect x="1473.7" y="1259.4" width="7.3" height="7.3" fill="#2a2a2c"/><rect x="1480.7" y="1259.4" width="7.3" height="7.3" fill="#2e2e30"/><rect x="1494.8" y="1259.4" width="7.3" height="7.3" fill="#3e3e40"/><rect x="1501.8" y="1259.4" width="7.3" height="7.3" fill="#5c5c5e"/><rect x="1515.9" y="1259.4" width="7.3" height="7.3" fill="#4e4e50"/><rect x="1522.9" y="1259.4" width="7.3" height="7.3" fill="#363638"/><rect x="1530.0" y="1259.4" width="7.3" height="7.3" fill="#303032"/><rect x="1537.0" y="1259.4" width="7.3" height="7.3" fill="#2e2e30"/><rect x="1544.0" y="1259.4" width="7.3" height="7.3" fill="#4e4e50"/><rect x="1551.1" y="1259.4" width="7.3" height="7.3" fill="#48484a"/><rect x="1558.1" y="1259.4" width="7.3" height="7.3" fill="#303032"/><rect x="1565.1" y="1259.4" width="7.3" height="7.3" fill="#3a3a3c"/><rect x="1572.2" y="1259.4" width="7.3" height="7.3" fill="#303032"/><rect x="1586.2" y="1259.4" width="7.3" height="7.3" fill="#2a2a2c"/><rect x="1593.3" y="1259.4" width="7.3" height="7.3" fill="#48484a"/><rect x="1600.3" y="1259.4" width="7.3" height="7.3" fill="#303032"/><rect x="1607.3" y="1259.4" width="7.3" height="7.3" fill="#48484a"/><rect x="1621.4" y="1259.4" width="7.3" height="7.3" fill="#666668"/><rect x="1635.5" y="1259.4" width="7.3" height="7.3" fill="#48484a"/><rect x="1642.5" y="1259.4" width="7.3" height="7.3" fill="#3e3e40"/><rect x="1656.6" y="1259.4" width="7.3" height="7.3" fill="#4e4e50"/><rect x="1663.6" y="1259.4" width="7.3" height="7.3" fill="#555557"/><rect x="1670.7" y="1259.4" width="7.3" height="7.3" fill="#3a3a3c"/><rect x="1677.7" y="1259.4" width="7.3" height="7.3" fill="#555557"/><rect x="1684.7" y="1259.4" width="7.3" height="7.3" fill="#5c5c5e"/><rect x="1698.8" y="1259.4" width="7.3" height="7.3" fill="#2e2e30"/><rect x="1705.8" y="1259.4" width="7.3" height="7.3" fill="#2e2e30"/><rect x="1712.9" y="1259.4" width="7.3" height="7.3" fill="#333335"/><rect x="1719.9" y="1259.4" width="7.3" height="7.3" fill="#363638"/><rect x="1727.0" y="1259.4" width="7.3" height="7.3" fill="#424244"/><rect x="1741.0" y="1259.4" width="7.3" height="7.3" fill="#4e4e50"/><rect x="1748.1" y="1259.4" width="7.3" height="7.3" fill="#2c2c2e"/><rect x="1755.1" y="1259.4" width="7.3" height="7.3" fill="#363638"/><rect x="1762.1" y="1259.4" width="7.3" height="7.3" fill="#3a3a3c"/><rect x="1769.2" y="1259.4" width="7.3" height="7.3" fill="#333335"/><rect x="1776.2" y="1259.4" width="7.3" height="7.3" fill="#3a3a3c"/><rect x="1783.2" y="1259.4" width="7.3" height="7.3" fill="#4e4e50"/><rect x="1790.3" y="1259.4" width="7.3" height="7.3" fill="#5c5c5e"/><rect x="1797.3" y="1259.4" width="7.3" height="7.3" fill="#555557"/><rect x="1804.3" y="1259.4" width="7.3" height="7.3" fill="#303032"/><rect x="1811.4" y="1259.4" width="7.3" height="7.3" fill="#666668"/><rect x="1818.4" y="1259.4" width="7.3" height="7.3" fill="#424244"/><rect x="1825.5" y="1259.4" width="7.3" height="7.3" fill="#666668"/><rect x="1832.5" y="1259.4" width="7.3" height="7.3" fill="#303032"/><rect x="1839.5" y="1259.4" width="7.3" height="7.3" fill="#363638"/><rect x="1846.6" y="1259.4" width="7.3" height="7.3" fill="#3a3a3c"/><rect x="1853.6" y="1259.4" width="7.3" height="7.3" fill="#48484a"/><rect x="1860.6" y="1259.4" width="7.3" height="7.3" fill="#3e3e40"/><rect x="1867.7" y="1259.4" width="7.3" height="7.3" fill="#303032"/><rect x="1290.7" y="1266.4" width="7.3" height="7.3" fill="#555557"/><rect x="1304.8" y="1266.4" width="7.3" height="7.3" fill="#3e3e40"/><rect x="1311.8" y="1266.4" width="7.3" height="7.3" fill="#363638"/><rect x="1318.9" y="1266.4" width="7.3" height="7.3" fill="#3a3a3c"/><rect x="1325.9" y="1266.4" width="7.3" height="7.3" fill="#303032"/><rect x="1333.0" y="1266.4" width="7.3" height="7.3" fill="#5c5c5e"/><rect x="1340.0" y="1266.4" width="7.3" height="7.3" fill="#424244"/><rect x="1347.0" y="1266.4" width="7.3" height="7.3" fill="#666668"/><rect x="1354.1" y="1266.4" width="7.3" height="7.3" fill="#5c5c5e"/><rect x="1361.1" y="1266.4" width="7.3" height="7.3" fill="#2a2a2c"/><rect x="1368.1" y="1266.4" width="7.3" height="7.3" fill="#48484a"/><rect x="1375.2" y="1266.4" width="7.3" height="7.3" fill="#2a2a2c"/><rect x="1382.2" y="1266.4" width="7.3" height="7.3" fill="#2c2c2e"/><rect x="1389.2" y="1266.4" width="7.3" height="7.3" fill="#5c5c5e"/><rect x="1403.3" y="1266.4" width="7.3" height="7.3" fill="#4e4e50"/><rect x="1417.4" y="1266.4" width="7.3" height="7.3" fill="#363638"/><rect x="1431.5" y="1266.4" width="7.3" height="7.3" fill="#303032"/><rect x="1438.5" y="1266.4" width="7.3" height="7.3" fill="#333335"/><rect x="1445.5" y="1266.4" width="7.3" height="7.3" fill="#333335"/><rect x="1452.6" y="1266.4" width="7.3" height="7.3" fill="#555557"/><rect x="1459.6" y="1266.4" width="7.3" height="7.3" fill="#363638"/><rect x="1466.6" y="1266.4" width="7.3" height="7.3" fill="#3e3e40"/><rect x="1473.7" y="1266.4" width="7.3" height="7.3" fill="#4e4e50"/><rect x="1487.7" y="1266.4" width="7.3" height="7.3" fill="#333335"/><rect x="1494.8" y="1266.4" width="7.3" height="7.3" fill="#363638"/><rect x="1501.8" y="1266.4" width="7.3" height="7.3" fill="#4e4e50"/><rect x="1508.8" y="1266.4" width="7.3" height="7.3" fill="#3a3a3c"/><rect x="1515.9" y="1266.4" width="7.3" height="7.3" fill="#555557"/><rect x="1522.9" y="1266.4" width="7.3" height="7.3" fill="#303032"/><rect x="1537.0" y="1266.4" width="7.3" height="7.3" fill="#4e4e50"/><rect x="1544.0" y="1266.4" width="7.3" height="7.3" fill="#333335"/><rect x="1551.1" y="1266.4" width="7.3" height="7.3" fill="#48484a"/><rect x="1558.1" y="1266.4" width="7.3" height="7.3" fill="#555557"/><rect x="1565.1" y="1266.4" width="7.3" height="7.3" fill="#3a3a3c"/><rect x="1572.2" y="1266.4" width="7.3" height="7.3" fill="#2e2e30"/><rect x="1579.2" y="1266.4" width="7.3" height="7.3" fill="#5c5c5e"/><rect x="1586.2" y="1266.4" width="7.3" height="7.3" fill="#3a3a3c"/><rect x="1593.3" y="1266.4" width="7.3" height="7.3" fill="#424244"/><rect x="1600.3" y="1266.4" width="7.3" height="7.3" fill="#4e4e50"/><rect x="1614.4" y="1266.4" width="7.3" height="7.3" fill="#303032"/><rect x="1621.4" y="1266.4" width="7.3" height="7.3" fill="#555557"/><rect x="1628.5" y="1266.4" width="7.3" height="7.3" fill="#3a3a3c"/><rect x="1635.5" y="1266.4" width="7.3" height="7.3" fill="#48484a"/><rect x="1642.5" y="1266.4" width="7.3" height="7.3" fill="#2a2a2c"/><rect x="1649.6" y="1266.4" width="7.3" height="7.3" fill="#5c5c5e"/><rect x="1656.6" y="1266.4" width="7.3" height="7.3" fill="#333335"/><rect x="1677.7" y="1266.4" width="7.3" height="7.3" fill="#555557"/><rect x="1684.7" y="1266.4" width="7.3" height="7.3" fill="#303032"/><rect x="1691.8" y="1266.4" width="7.3" height="7.3" fill="#2a2a2c"/><rect x="1698.8" y="1266.4" width="7.3" height="7.3" fill="#303032"/><rect x="1705.8" y="1266.4" width="7.3" height="7.3" fill="#363638"/><rect x="1712.9" y="1266.4" width="7.3" height="7.3" fill="#2c2c2e"/><rect x="1719.9" y="1266.4" width="7.3" height="7.3" fill="#555557"/><rect x="1727.0" y="1266.4" width="7.3" height="7.3" fill="#555557"/><rect x="1734.0" y="1266.4" width="7.3" height="7.3" fill="#303032"/><rect x="1741.0" y="1266.4" width="7.3" height="7.3" fill="#2c2c2e"/><rect x="1748.1" y="1266.4" width="7.3" height="7.3" fill="#3a3a3c"/><rect x="1755.1" y="1266.4" width="7.3" height="7.3" fill="#363638"/><rect x="1762.1" y="1266.4" width="7.3" height="7.3" fill="#555557"/><rect x="1769.2" y="1266.4" width="7.3" height="7.3" fill="#666668"/><rect x="1776.2" y="1266.4" width="7.3" height="7.3" fill="#3e3e40"/><rect x="1783.2" y="1266.4" width="7.3" height="7.3" fill="#4e4e50"/><rect x="1790.3" y="1266.4" width="7.3" height="7.3" fill="#3a3a3c"/><rect x="1797.3" y="1266.4" width="7.3" height="7.3" fill="#666668"/><rect x="1811.4" y="1266.4" width="7.3" height="7.3" fill="#5c5c5e"/><rect x="1818.4" y="1266.4" width="7.3" height="7.3" fill="#555557"/><rect x="1832.5" y="1266.4" width="7.3" height="7.3" fill="#2e2e30"/><rect x="1839.5" y="1266.4" width="7.3" height="7.3" fill="#5c5c5e"/><rect x="1846.6" y="1266.4" width="7.3" height="7.3" fill="#424244"/><rect x="1853.6" y="1266.4" width="7.3" height="7.3" fill="#2a2a2c"/><rect x="1860.6" y="1266.4" width="7.3" height="7.3" fill="#363638"/><rect x="1867.7" y="1266.4" width="7.3" height="7.3" fill="#303032"/><rect x="1283.7" y="1273.4" width="7.3" height="7.3" fill="#2e2e30"/><rect x="1290.7" y="1273.4" width="7.3" height="7.3" fill="#555557"/><rect x="1297.8" y="1273.4" width="7.3" height="7.3" fill="#3e3e40"/><rect x="1304.8" y="1273.4" width="7.3" height="7.3" fill="#303032"/><rect x="1311.8" y="1273.4" width="7.3" height="7.3" fill="#555557"/><rect x="1318.9" y="1273.4" width="7.3" height="7.3" fill="#4e4e50"/><rect x="1325.9" y="1273.4" width="7.3" height="7.3" fill="#333335"/><rect x="1333.0" y="1273.4" width="7.3" height="7.3" fill="#555557"/><rect x="1340.0" y="1273.4" width="7.3" height="7.3" fill="#48484a"/><rect x="1347.0" y="1273.4" width="7.3" height="7.3" fill="#4e4e50"/><rect x="1361.1" y="1273.4" width="7.3" height="7.3" fill="#5c5c5e"/><rect x="1375.2" y="1273.4" width="7.3" height="7.3" fill="#2e2e30"/><rect x="1382.2" y="1273.4" width="7.3" height="7.3" fill="#3e3e40"/><rect x="1396.3" y="1273.4" width="7.3" height="7.3" fill="#303032"/><rect x="1403.3" y="1273.4" width="7.3" height="7.3" fill="#333335"/><rect x="1410.3" y="1273.4" width="7.3" height="7.3" fill="#3e3e40"/><rect x="1417.4" y="1273.4" width="7.3" height="7.3" fill="#2a2a2c"/><rect x="1431.5" y="1273.4" width="7.3" height="7.3" fill="#2c2c2e"/><rect x="1438.5" y="1273.4" width="7.3" height="7.3" fill="#3e3e40"/><rect x="1452.6" y="1273.4" width="7.3" height="7.3" fill="#3e3e40"/><rect x="1459.6" y="1273.4" width="7.3" height="7.3" fill="#363638"/><rect x="1466.6" y="1273.4" width="7.3" height="7.3" fill="#424244"/><rect x="1473.7" y="1273.4" width="7.3" height="7.3" fill="#2a2a2c"/><rect x="1480.7" y="1273.4" width="7.3" height="7.3" fill="#5c5c5e"/><rect x="1487.7" y="1273.4" width="7.3" height="7.3" fill="#555557"/><rect x="1494.8" y="1273.4" width="7.3" height="7.3" fill="#555557"/><rect x="1501.8" y="1273.4" width="7.3" height="7.3" fill="#2c2c2e"/><rect x="1508.8" y="1273.4" width="7.3" height="7.3" fill="#3a3a3c"/><rect x="1515.9" y="1273.4" width="7.3" height="7.3" fill="#5c5c5e"/><rect x="1522.9" y="1273.4" width="7.3" height="7.3" fill="#2a2a2c"/><rect x="1530.0" y="1273.4" width="7.3" height="7.3" fill="#2c2c2e"/><rect x="1537.0" y="1273.4" width="7.3" height="7.3" fill="#4e4e50"/><rect x="1544.0" y="1273.4" width="7.3" height="7.3" fill="#555557"/><rect x="1551.1" y="1273.4" width="7.3" height="7.3" fill="#333335"/><rect x="1558.1" y="1273.4" width="7.3" height="7.3" fill="#2c2c2e"/><rect x="1565.1" y="1273.4" width="7.3" height="7.3" fill="#2a2a2c"/><rect x="1572.2" y="1273.4" width="7.3" height="7.3" fill="#3a3a3c"/><rect x="1586.2" y="1273.4" width="7.3" height="7.3" fill="#2e2e30"/><rect x="1600.3" y="1273.4" width="7.3" height="7.3" fill="#4e4e50"/><rect x="1607.3" y="1273.4" width="7.3" height="7.3" fill="#5c5c5e"/><rect x="1614.4" y="1273.4" width="7.3" height="7.3" fill="#333335"/><rect x="1621.4" y="1273.4" width="7.3" height="7.3" fill="#363638"/><rect x="1628.5" y="1273.4" width="7.3" height="7.3" fill="#4e4e50"/><rect x="1642.5" y="1273.4" width="7.3" height="7.3" fill="#363638"/><rect x="1649.6" y="1273.4" width="7.3" height="7.3" fill="#363638"/><rect x="1663.6" y="1273.4" width="7.3" height="7.3" fill="#2a2a2c"/><rect x="1670.7" y="1273.4" width="7.3" height="7.3" fill="#48484a"/><rect x="1698.8" y="1273.4" width="7.3" height="7.3" fill="#2a2a2c"/><rect x="1712.9" y="1273.4" width="7.3" height="7.3" fill="#3e3e40"/><rect x="1719.9" y="1273.4" width="7.3" height="7.3" fill="#333335"/><rect x="1727.0" y="1273.4" width="7.3" height="7.3" fill="#4e4e50"/><rect x="1734.0" y="1273.4" width="7.3" height="7.3" fill="#555557"/><rect x="1741.0" y="1273.4" width="7.3" height="7.3" fill="#2e2e30"/><rect x="1748.1" y="1273.4" width="7.3" height="7.3" fill="#3a3a3c"/><rect x="1755.1" y="1273.4" width="7.3" height="7.3" fill="#2a2a2c"/><rect x="1769.2" y="1273.4" width="7.3" height="7.3" fill="#303032"/><rect x="1776.2" y="1273.4" width="7.3" height="7.3" fill="#2a2a2c"/><rect x="1783.2" y="1273.4" width="7.3" height="7.3" fill="#48484a"/><rect x="1797.3" y="1273.4" width="7.3" height="7.3" fill="#3a3a3c"/><rect x="1804.3" y="1273.4" width="7.3" height="7.3" fill="#2c2c2e"/><rect x="1811.4" y="1273.4" width="7.3" height="7.3" fill="#424244"/><rect x="1818.4" y="1273.4" width="7.3" height="7.3" fill="#363638"/><rect x="1825.5" y="1273.4" width="7.3" height="7.3" fill="#2a2a2c"/><rect x="1832.5" y="1273.4" width="7.3" height="7.3" fill="#666668"/><rect x="1839.5" y="1273.4" width="7.3" height="7.3" fill="#555557"/><rect x="1846.6" y="1273.4" width="7.3" height="7.3" fill="#333335"/><rect x="1853.6" y="1273.4" width="7.3" height="7.3" fill="#5c5c5e"/><rect x="1860.6" y="1273.4" width="7.3" height="7.3" fill="#363638"/><rect x="1867.7" y="1273.4" width="7.3" height="7.3" fill="#3e3e40"/><rect x="882" y="1333.6" width="1262" height="2.2" fill="#1b1b1e"/><rect x="897.0" y="1298.5" width="7.2" height="7.3" fill="#363638"/><rect x="903.9" y="1298.5" width="7.2" height="7.3" fill="#3a3a3c"/><rect x="945.3" y="1298.5" width="7.2" height="7.3" fill="#5c5c5e"/><rect x="959.1" y="1298.5" width="7.2" height="7.3" fill="#363638"/><rect x="966.0" y="1298.5" width="7.2" height="7.3" fill="#333335"/><rect x="973.0" y="1298.5" width="7.2" height="7.3" fill="#3a3a3c"/><rect x="986.8" y="1298.5" width="7.2" height="7.3" fill="#4e4e50"/><rect x="993.7" y="1298.5" width="7.2" height="7.3" fill="#666668"/><rect x="1000.6" y="1298.5" width="7.2" height="7.3" fill="#4e4e50"/><rect x="1007.5" y="1298.5" width="7.2" height="7.3" fill="#303032"/><rect x="1014.4" y="1298.5" width="7.2" height="7.3" fill="#555557"/><rect x="1021.3" y="1298.5" width="7.2" height="7.3" fill="#2c2c2e"/><rect x="1028.2" y="1298.5" width="7.2" height="7.3" fill="#48484a"/><rect x="1035.1" y="1298.5" width="7.2" height="7.3" fill="#48484a"/><rect x="903.9" y="1305.5" width="7.2" height="7.3" fill="#303032"/><rect x="910.8" y="1305.5" width="7.2" height="7.3" fill="#3a3a3c"/><rect x="917.7" y="1305.5" width="7.2" height="7.3" fill="#303032"/><rect x="924.6" y="1305.5" width="7.2" height="7.3" fill="#303032"/><rect x="931.5" y="1305.5" width="7.2" height="7.3" fill="#2c2c2e"/><rect x="938.4" y="1305.5" width="7.2" height="7.3" fill="#666668"/><rect x="945.3" y="1305.5" width="7.2" height="7.3" fill="#2c2c2e"/><rect x="952.2" y="1305.5" width="7.2" height="7.3" fill="#4e4e50"/><rect x="959.1" y="1305.5" width="7.2" height="7.3" fill="#3e3e40"/><rect x="966.0" y="1305.5" width="7.2" height="7.3" fill="#3e3e40"/><rect x="973.0" y="1305.5" width="7.2" height="7.3" fill="#48484a"/><rect x="979.9" y="1305.5" width="7.2" height="7.3" fill="#555557"/><rect x="986.8" y="1305.5" width="7.2" height="7.3" fill="#48484a"/><rect x="993.7" y="1305.5" width="7.2" height="7.3" fill="#666668"/><rect x="1000.6" y="1305.5" width="7.2" height="7.3" fill="#2c2c2e"/><rect x="1014.4" y="1305.5" width="7.2" height="7.3" fill="#424244"/><rect x="1021.3" y="1305.5" width="7.2" height="7.3" fill="#555557"/><rect x="897.0" y="1312.5" width="7.2" height="7.3" fill="#555557"/><rect x="903.9" y="1312.5" width="7.2" height="7.3" fill="#3e3e40"/><rect x="917.7" y="1312.5" width="7.2" height="7.3" fill="#2e2e30"/><rect x="931.5" y="1312.5" width="7.2" height="7.3" fill="#3e3e40"/><rect x="938.4" y="1312.5" width="7.2" height="7.3" fill="#2e2e30"/><rect x="945.3" y="1312.5" width="7.2" height="7.3" fill="#48484a"/><rect x="952.2" y="1312.5" width="7.2" height="7.3" fill="#303032"/><rect x="959.1" y="1312.5" width="7.2" height="7.3" fill="#2a2a2c"/><rect x="966.0" y="1312.5" width="7.2" height="7.3" fill="#48484a"/><rect x="979.9" y="1312.5" width="7.2" height="7.3" fill="#2c2c2e"/><rect x="986.8" y="1312.5" width="7.2" height="7.3" fill="#3a3a3c"/><rect x="1000.6" y="1312.5" width="7.2" height="7.3" fill="#666668"/><rect x="1007.5" y="1312.5" width="7.2" height="7.3" fill="#2c2c2e"/><rect x="1028.2" y="1312.5" width="7.2" height="7.3" fill="#555557"/><rect x="903.9" y="1319.5" width="7.2" height="7.3" fill="#2a2a2c"/><rect x="917.7" y="1319.5" width="7.2" height="7.3" fill="#363638"/><rect x="924.6" y="1319.5" width="7.2" height="7.3" fill="#424244"/><rect x="938.4" y="1319.5" width="7.2" height="7.3" fill="#2a2a2c"/><rect x="952.2" y="1319.5" width="7.2" height="7.3" fill="#363638"/><rect x="959.1" y="1319.5" width="7.2" height="7.3" fill="#5c5c5e"/><rect x="966.0" y="1319.5" width="7.2" height="7.3" fill="#2a2a2c"/><rect x="979.9" y="1319.5" width="7.2" height="7.3" fill="#333335"/><rect x="986.8" y="1319.5" width="7.2" height="7.3" fill="#555557"/><rect x="993.7" y="1319.5" width="7.2" height="7.3" fill="#666668"/><rect x="1007.5" y="1319.5" width="7.2" height="7.3" fill="#5c5c5e"/><rect x="1014.4" y="1319.5" width="7.2" height="7.3" fill="#2c2c2e"/><rect x="1021.3" y="1319.5" width="7.2" height="7.3" fill="#333335"/><rect x="1028.2" y="1319.5" width="7.2" height="7.3" fill="#424244"/><rect x="1290.7" y="1298.5" width="7.3" height="7.3" fill="#666668"/><rect x="1297.8" y="1298.5" width="7.3" height="7.3" fill="#333335"/><rect x="1304.8" y="1298.5" width="7.3" height="7.3" fill="#555557"/><rect x="1311.8" y="1298.5" width="7.3" height="7.3" fill="#333335"/><rect x="1325.9" y="1298.5" width="7.3" height="7.3" fill="#363638"/><rect x="1340.0" y="1298.5" width="7.3" height="7.3" fill="#3e3e40"/><rect x="1361.0" y="1298.5" width="7.3" height="7.3" fill="#2e2e30"/><rect x="1368.1" y="1298.5" width="7.3" height="7.3" fill="#4e4e50"/><rect x="1375.1" y="1298.5" width="7.3" height="7.3" fill="#3a3a3c"/><rect x="1396.2" y="1298.5" width="7.3" height="7.3" fill="#3e3e40"/><rect x="1403.2" y="1298.5" width="7.3" height="7.3" fill="#666668"/><rect x="1417.3" y="1298.5" width="7.3" height="7.3" fill="#363638"/><rect x="1424.3" y="1298.5" width="7.3" height="7.3" fill="#303032"/><rect x="1431.4" y="1298.5" width="7.3" height="7.3" fill="#2e2e30"/><rect x="1438.4" y="1298.5" width="7.3" height="7.3" fill="#2a2a2c"/><rect x="1445.4" y="1298.5" width="7.3" height="7.3" fill="#666668"/><rect x="1452.5" y="1298.5" width="7.3" height="7.3" fill="#3e3e40"/><rect x="1459.5" y="1298.5" width="7.3" height="7.3" fill="#3e3e40"/><rect x="1466.5" y="1298.5" width="7.3" height="7.3" fill="#363638"/><rect x="1473.6" y="1298.5" width="7.3" height="7.3" fill="#363638"/><rect x="1480.6" y="1298.5" width="7.3" height="7.3" fill="#363638"/><rect x="1487.6" y="1298.5" width="7.3" height="7.3" fill="#303032"/><rect x="1494.7" y="1298.5" width="7.3" height="7.3" fill="#48484a"/><rect x="1501.7" y="1298.5" width="7.3" height="7.3" fill="#2e2e30"/><rect x="1508.7" y="1298.5" width="7.3" height="7.3" fill="#2e2e30"/><rect x="1515.7" y="1298.5" width="7.3" height="7.3" fill="#333335"/><rect x="1522.8" y="1298.5" width="7.3" height="7.3" fill="#333335"/><rect x="1529.8" y="1298.5" width="7.3" height="7.3" fill="#48484a"/><rect x="1536.8" y="1298.5" width="7.3" height="7.3" fill="#2e2e30"/><rect x="1550.9" y="1298.5" width="7.3" height="7.3" fill="#424244"/><rect x="1565.0" y="1298.5" width="7.3" height="7.3" fill="#303032"/><rect x="1283.7" y="1305.5" width="7.3" height="7.3" fill="#4e4e50"/><rect x="1290.7" y="1305.5" width="7.3" height="7.3" fill="#2c2c2e"/><rect x="1297.8" y="1305.5" width="7.3" height="7.3" fill="#333335"/><rect x="1304.8" y="1305.5" width="7.3" height="7.3" fill="#303032"/><rect x="1325.9" y="1305.5" width="7.3" height="7.3" fill="#333335"/><rect x="1340.0" y="1305.5" width="7.3" height="7.3" fill="#363638"/><rect x="1347.0" y="1305.5" width="7.3" height="7.3" fill="#4e4e50"/><rect x="1354.0" y="1305.5" width="7.3" height="7.3" fill="#666668"/><rect x="1361.0" y="1305.5" width="7.3" height="7.3" fill="#3a3a3c"/><rect x="1368.1" y="1305.5" width="7.3" height="7.3" fill="#555557"/><rect x="1375.1" y="1305.5" width="7.3" height="7.3" fill="#363638"/><rect x="1389.2" y="1305.5" width="7.3" height="7.3" fill="#424244"/><rect x="1396.2" y="1305.5" width="7.3" height="7.3" fill="#303032"/><rect x="1417.3" y="1305.5" width="7.3" height="7.3" fill="#303032"/><rect x="1424.3" y="1305.5" width="7.3" height="7.3" fill="#666668"/><rect x="1431.4" y="1305.5" width="7.3" height="7.3" fill="#3a3a3c"/><rect x="1438.4" y="1305.5" width="7.3" height="7.3" fill="#48484a"/><rect x="1445.4" y="1305.5" width="7.3" height="7.3" fill="#2e2e30"/><rect x="1452.5" y="1305.5" width="7.3" height="7.3" fill="#2e2e30"/><rect x="1459.5" y="1305.5" width="7.3" height="7.3" fill="#333335"/><rect x="1466.5" y="1305.5" width="7.3" height="7.3" fill="#48484a"/><rect x="1473.6" y="1305.5" width="7.3" height="7.3" fill="#363638"/><rect x="1480.6" y="1305.5" width="7.3" height="7.3" fill="#303032"/><rect x="1487.6" y="1305.5" width="7.3" height="7.3" fill="#2c2c2e"/><rect x="1494.7" y="1305.5" width="7.3" height="7.3" fill="#333335"/><rect x="1501.7" y="1305.5" width="7.3" height="7.3" fill="#3e3e40"/><rect x="1508.7" y="1305.5" width="7.3" height="7.3" fill="#5c5c5e"/><rect x="1515.7" y="1305.5" width="7.3" height="7.3" fill="#555557"/><rect x="1529.8" y="1305.5" width="7.3" height="7.3" fill="#3e3e40"/><rect x="1536.8" y="1305.5" width="7.3" height="7.3" fill="#2e2e30"/><rect x="1543.9" y="1305.5" width="7.3" height="7.3" fill="#333335"/><rect x="1550.9" y="1305.5" width="7.3" height="7.3" fill="#5c5c5e"/><rect x="1557.9" y="1305.5" width="7.3" height="7.3" fill="#333335"/><rect x="1565.0" y="1305.5" width="7.3" height="7.3" fill="#2a2a2c"/><rect x="1283.7" y="1312.5" width="7.3" height="7.3" fill="#3a3a3c"/><rect x="1290.7" y="1312.5" width="7.3" height="7.3" fill="#48484a"/><rect x="1297.8" y="1312.5" width="7.3" height="7.3" fill="#424244"/><rect x="1304.8" y="1312.5" width="7.3" height="7.3" fill="#303032"/><rect x="1311.8" y="1312.5" width="7.3" height="7.3" fill="#2a2a2c"/><rect x="1325.9" y="1312.5" width="7.3" height="7.3" fill="#2c2c2e"/><rect x="1332.9" y="1312.5" width="7.3" height="7.3" fill="#666668"/><rect x="1347.0" y="1312.5" width="7.3" height="7.3" fill="#2e2e30"/><rect x="1354.0" y="1312.5" width="7.3" height="7.3" fill="#333335"/><rect x="1361.0" y="1312.5" width="7.3" height="7.3" fill="#2a2a2c"/><rect x="1368.1" y="1312.5" width="7.3" height="7.3" fill="#2a2a2c"/><rect x="1375.1" y="1312.5" width="7.3" height="7.3" fill="#363638"/><rect x="1389.2" y="1312.5" width="7.3" height="7.3" fill="#3e3e40"/><rect x="1396.2" y="1312.5" width="7.3" height="7.3" fill="#4e4e50"/><rect x="1410.3" y="1312.5" width="7.3" height="7.3" fill="#666668"/><rect x="1417.3" y="1312.5" width="7.3" height="7.3" fill="#2a2a2c"/><rect x="1424.3" y="1312.5" width="7.3" height="7.3" fill="#48484a"/><rect x="1431.4" y="1312.5" width="7.3" height="7.3" fill="#3e3e40"/><rect x="1445.4" y="1312.5" width="7.3" height="7.3" fill="#3e3e40"/><rect x="1459.5" y="1312.5" width="7.3" height="7.3" fill="#363638"/><rect x="1466.5" y="1312.5" width="7.3" height="7.3" fill="#363638"/><rect x="1473.6" y="1312.5" width="7.3" height="7.3" fill="#48484a"/><rect x="1480.6" y="1312.5" width="7.3" height="7.3" fill="#666668"/><rect x="1487.6" y="1312.5" width="7.3" height="7.3" fill="#2c2c2e"/><rect x="1494.7" y="1312.5" width="7.3" height="7.3" fill="#303032"/><rect x="1501.7" y="1312.5" width="7.3" height="7.3" fill="#5c5c5e"/><rect x="1515.7" y="1312.5" width="7.3" height="7.3" fill="#363638"/><rect x="1522.8" y="1312.5" width="7.3" height="7.3" fill="#424244"/><rect x="1529.8" y="1312.5" width="7.3" height="7.3" fill="#666668"/><rect x="1536.8" y="1312.5" width="7.3" height="7.3" fill="#4e4e50"/><rect x="1550.9" y="1312.5" width="7.3" height="7.3" fill="#303032"/><rect x="1557.9" y="1312.5" width="7.3" height="7.3" fill="#333335"/><rect x="1283.7" y="1319.5" width="7.3" height="7.3" fill="#2a2a2c"/><rect x="1290.7" y="1319.5" width="7.3" height="7.3" fill="#333335"/><rect x="1297.8" y="1319.5" width="7.3" height="7.3" fill="#424244"/><rect x="1311.8" y="1319.5" width="7.3" height="7.3" fill="#333335"/><rect x="1318.9" y="1319.5" width="7.3" height="7.3" fill="#424244"/><rect x="1332.9" y="1319.5" width="7.3" height="7.3" fill="#2a2a2c"/><rect x="1340.0" y="1319.5" width="7.3" height="7.3" fill="#2c2c2e"/><rect x="1347.0" y="1319.5" width="7.3" height="7.3" fill="#5c5c5e"/><rect x="1361.0" y="1319.5" width="7.3" height="7.3" fill="#4e4e50"/><rect x="1368.1" y="1319.5" width="7.3" height="7.3" fill="#5c5c5e"/><rect x="1389.2" y="1319.5" width="7.3" height="7.3" fill="#2c2c2e"/><rect x="1396.2" y="1319.5" width="7.3" height="7.3" fill="#424244"/><rect x="1403.2" y="1319.5" width="7.3" height="7.3" fill="#5c5c5e"/><rect x="1410.3" y="1319.5" width="7.3" height="7.3" fill="#48484a"/><rect x="1417.3" y="1319.5" width="7.3" height="7.3" fill="#2e2e30"/><rect x="1445.4" y="1319.5" width="7.3" height="7.3" fill="#424244"/><rect x="1452.5" y="1319.5" width="7.3" height="7.3" fill="#5c5c5e"/><rect x="1459.5" y="1319.5" width="7.3" height="7.3" fill="#3e3e40"/><rect x="1473.6" y="1319.5" width="7.3" height="7.3" fill="#4e4e50"/><rect x="1494.7" y="1319.5" width="7.3" height="7.3" fill="#303032"/><rect x="1501.7" y="1319.5" width="7.3" height="7.3" fill="#2a2a2c"/><rect x="1508.7" y="1319.5" width="7.3" height="7.3" fill="#555557"/><rect x="1515.7" y="1319.5" width="7.3" height="7.3" fill="#5c5c5e"/><rect x="1522.8" y="1319.5" width="7.3" height="7.3" fill="#3a3a3c"/><rect x="1529.8" y="1319.5" width="7.3" height="7.3" fill="#363638"/><rect x="1536.8" y="1319.5" width="7.3" height="7.3" fill="#48484a"/><rect x="1543.9" y="1319.5" width="7.3" height="7.3" fill="#3a3a3c"/><rect x="1557.9" y="1319.5" width="7.3" height="7.3" fill="#303032"/><rect x="1565.0" y="1319.5" width="7.3" height="7.3" fill="#2a2a2c"/><rect x="897.0" y="1344.6" width="7.2" height="7.3" fill="#3a3a3c"/><rect x="903.9" y="1344.6" width="7.2" height="7.3" fill="#363638"/><rect x="910.8" y="1344.6" width="7.2" height="7.3" fill="#5c5c5e"/><rect x="917.7" y="1344.6" width="7.2" height="7.3" fill="#333335"/><rect x="924.6" y="1344.6" width="7.2" height="7.3" fill="#3e3e40"/><rect x="931.5" y="1344.6" width="7.2" height="7.3" fill="#48484a"/><rect x="938.4" y="1344.6" width="7.2" height="7.3" fill="#3e3e40"/><rect x="959.1" y="1344.6" width="7.2" height="7.3" fill="#5c5c5e"/><rect x="966.0" y="1344.6" width="7.2" height="7.3" fill="#333335"/><rect x="973.0" y="1344.6" width="7.2" height="7.3" fill="#363638"/><rect x="979.9" y="1344.6" width="7.2" height="7.3" fill="#666668"/><rect x="993.7" y="1344.6" width="7.2" height="7.3" fill="#4e4e50"/><rect x="1000.6" y="1344.6" width="7.2" height="7.3" fill="#3e3e40"/><rect x="1007.5" y="1344.6" width="7.2" height="7.3" fill="#2a2a2c"/><rect x="1021.3" y="1344.6" width="7.2" height="7.3" fill="#555557"/><rect x="1028.2" y="1344.6" width="7.2" height="7.3" fill="#5c5c5e"/><rect x="1035.1" y="1344.6" width="7.2" height="7.3" fill="#3e3e40"/><rect x="897.0" y="1351.6" width="7.2" height="7.3" fill="#666668"/><rect x="903.9" y="1351.6" width="7.2" height="7.3" fill="#333335"/><rect x="910.8" y="1351.6" width="7.2" height="7.3" fill="#5c5c5e"/><rect x="917.7" y="1351.6" width="7.2" height="7.3" fill="#2a2a2c"/><rect x="924.6" y="1351.6" width="7.2" height="7.3" fill="#333335"/><rect x="931.5" y="1351.6" width="7.2" height="7.3" fill="#555557"/><rect x="938.4" y="1351.6" width="7.2" height="7.3" fill="#5c5c5e"/><rect x="945.3" y="1351.6" width="7.2" height="7.3" fill="#4e4e50"/><rect x="952.2" y="1351.6" width="7.2" height="7.3" fill="#3a3a3c"/><rect x="959.1" y="1351.6" width="7.2" height="7.3" fill="#4e4e50"/><rect x="966.0" y="1351.6" width="7.2" height="7.3" fill="#363638"/><rect x="979.9" y="1351.6" width="7.2" height="7.3" fill="#303032"/><rect x="986.8" y="1351.6" width="7.2" height="7.3" fill="#4e4e50"/><rect x="993.7" y="1351.6" width="7.2" height="7.3" fill="#2a2a2c"/><rect x="1000.6" y="1351.6" width="7.2" height="7.3" fill="#48484a"/><rect x="1007.5" y="1351.6" width="7.2" height="7.3" fill="#3a3a3c"/><rect x="1014.4" y="1351.6" width="7.2" height="7.3" fill="#555557"/><rect x="1021.3" y="1351.6" width="7.2" height="7.3" fill="#363638"/><rect x="1028.2" y="1351.6" width="7.2" height="7.3" fill="#2c2c2e"/><rect x="1035.1" y="1351.6" width="7.2" height="7.3" fill="#3e3e40"/><rect x="903.9" y="1358.6" width="7.2" height="7.3" fill="#2a2a2c"/><rect x="910.8" y="1358.6" width="7.2" height="7.3" fill="#4e4e50"/><rect x="917.7" y="1358.6" width="7.2" height="7.3" fill="#4e4e50"/><rect x="924.6" y="1358.6" width="7.2" height="7.3" fill="#424244"/><rect x="938.4" y="1358.6" width="7.2" height="7.3" fill="#666668"/><rect x="945.3" y="1358.6" width="7.2" height="7.3" fill="#2c2c2e"/><rect x="952.2" y="1358.6" width="7.2" height="7.3" fill="#303032"/><rect x="973.0" y="1358.6" width="7.2" height="7.3" fill="#2c2c2e"/><rect x="979.9" y="1358.6" width="7.2" height="7.3" fill="#2e2e30"/><rect x="986.8" y="1358.6" width="7.2" height="7.3" fill="#333335"/><rect x="993.7" y="1358.6" width="7.2" height="7.3" fill="#2a2a2c"/><rect x="1000.6" y="1358.6" width="7.2" height="7.3" fill="#2a2a2c"/><rect x="1007.5" y="1358.6" width="7.2" height="7.3" fill="#424244"/><rect x="1021.3" y="1358.6" width="7.2" height="7.3" fill="#363638"/><rect x="1028.2" y="1358.6" width="7.2" height="7.3" fill="#4e4e50"/><rect x="1035.1" y="1358.6" width="7.2" height="7.3" fill="#333335"/><rect x="897.0" y="1365.6" width="7.2" height="7.3" fill="#555557"/><rect x="903.9" y="1365.6" width="7.2" height="7.3" fill="#666668"/><rect x="910.8" y="1365.6" width="7.2" height="7.3" fill="#333335"/><rect x="917.7" y="1365.6" width="7.2" height="7.3" fill="#363638"/><rect x="924.6" y="1365.6" width="7.2" height="7.3" fill="#3a3a3c"/><rect x="938.4" y="1365.6" width="7.2" height="7.3" fill="#3a3a3c"/><rect x="966.0" y="1365.6" width="7.2" height="7.3" fill="#303032"/><rect x="973.0" y="1365.6" width="7.2" height="7.3" fill="#333335"/><rect x="979.9" y="1365.6" width="7.2" height="7.3" fill="#555557"/><rect x="986.8" y="1365.6" width="7.2" height="7.3" fill="#303032"/><rect x="1000.6" y="1365.6" width="7.2" height="7.3" fill="#2c2c2e"/><rect x="1014.4" y="1365.6" width="7.2" height="7.3" fill="#555557"/><rect x="1021.3" y="1365.6" width="7.2" height="7.3" fill="#555557"/><rect x="1028.2" y="1365.6" width="7.2" height="7.3" fill="#4e4e50"/><rect x="1035.1" y="1365.6" width="7.2" height="7.3" fill="#424244"/><rect x="1283.7" y="1344.6" width="7.3" height="7.3" fill="#3e3e40"/><rect x="1297.8" y="1344.6" width="7.3" height="7.3" fill="#555557"/><rect x="1304.8" y="1344.6" width="7.3" height="7.3" fill="#3e3e40"/><rect x="1311.8" y="1344.6" width="7.3" height="7.3" fill="#48484a"/><rect x="1318.9" y="1344.6" width="7.3" height="7.3" fill="#3a3a3c"/><rect x="1325.9" y="1344.6" width="7.3" height="7.3" fill="#4e4e50"/><rect x="1333.0" y="1344.6" width="7.3" height="7.3" fill="#666668"/><rect x="1340.0" y="1344.6" width="7.3" height="7.3" fill="#555557"/><rect x="1347.0" y="1344.6" width="7.3" height="7.3" fill="#424244"/><rect x="1354.1" y="1344.6" width="7.3" height="7.3" fill="#4e4e50"/><rect x="1361.1" y="1344.6" width="7.3" height="7.3" fill="#363638"/><rect x="1368.1" y="1344.6" width="7.3" height="7.3" fill="#5c5c5e"/><rect x="1375.2" y="1344.6" width="7.3" height="7.3" fill="#303032"/><rect x="1389.2" y="1344.6" width="7.3" height="7.3" fill="#333335"/><rect x="1403.3" y="1344.6" width="7.3" height="7.3" fill="#555557"/><rect x="1410.3" y="1344.6" width="7.3" height="7.3" fill="#48484a"/><rect x="1417.4" y="1344.6" width="7.3" height="7.3" fill="#303032"/><rect x="1431.5" y="1344.6" width="7.3" height="7.3" fill="#5c5c5e"/><rect x="1438.5" y="1344.6" width="7.3" height="7.3" fill="#424244"/><rect x="1445.5" y="1344.6" width="7.3" height="7.3" fill="#2e2e30"/><rect x="1459.6" y="1344.6" width="7.3" height="7.3" fill="#2e2e30"/><rect x="1466.6" y="1344.6" width="7.3" height="7.3" fill="#4e4e50"/><rect x="1473.7" y="1344.6" width="7.3" height="7.3" fill="#4e4e50"/><rect x="1494.8" y="1344.6" width="7.3" height="7.3" fill="#2a2a2c"/><rect x="1501.8" y="1344.6" width="7.3" height="7.3" fill="#363638"/><rect x="1522.9" y="1344.6" width="7.3" height="7.3" fill="#2e2e30"/><rect x="1530.0" y="1344.6" width="7.3" height="7.3" fill="#3a3a3c"/><rect x="1537.0" y="1344.6" width="7.3" height="7.3" fill="#363638"/><rect x="1544.0" y="1344.6" width="7.3" height="7.3" fill="#424244"/><rect x="1551.1" y="1344.6" width="7.3" height="7.3" fill="#3e3e40"/><rect x="1558.1" y="1344.6" width="7.3" height="7.3" fill="#333335"/><rect x="1565.1" y="1344.6" width="7.3" height="7.3" fill="#3e3e40"/><rect x="1572.2" y="1344.6" width="7.3" height="7.3" fill="#3e3e40"/><rect x="1579.2" y="1344.6" width="7.3" height="7.3" fill="#555557"/><rect x="1586.2" y="1344.6" width="7.3" height="7.3" fill="#5c5c5e"/><rect x="1593.3" y="1344.6" width="7.3" height="7.3" fill="#2a2a2c"/><rect x="1600.3" y="1344.6" width="7.3" height="7.3" fill="#363638"/><rect x="1607.3" y="1344.6" width="7.3" height="7.3" fill="#4e4e50"/><rect x="1614.4" y="1344.6" width="7.3" height="7.3" fill="#363638"/><rect x="1621.4" y="1344.6" width="7.3" height="7.3" fill="#5c5c5e"/><rect x="1628.5" y="1344.6" width="7.3" height="7.3" fill="#2a2a2c"/><rect x="1635.5" y="1344.6" width="7.3" height="7.3" fill="#2a2a2c"/><rect x="1642.5" y="1344.6" width="7.3" height="7.3" fill="#2a2a2c"/><rect x="1649.6" y="1344.6" width="7.3" height="7.3" fill="#333335"/><rect x="1656.6" y="1344.6" width="7.3" height="7.3" fill="#333335"/><rect x="1670.7" y="1344.6" width="7.3" height="7.3" fill="#333335"/><rect x="1684.7" y="1344.6" width="7.3" height="7.3" fill="#4e4e50"/><rect x="1691.8" y="1344.6" width="7.3" height="7.3" fill="#2c2c2e"/><rect x="1698.8" y="1344.6" width="7.3" height="7.3" fill="#3a3a3c"/><rect x="1712.9" y="1344.6" width="7.3" height="7.3" fill="#5c5c5e"/><rect x="1719.9" y="1344.6" width="7.3" height="7.3" fill="#2a2a2c"/><rect x="1727.0" y="1344.6" width="7.3" height="7.3" fill="#3a3a3c"/><rect x="1734.0" y="1344.6" width="7.3" height="7.3" fill="#555557"/><rect x="1741.0" y="1344.6" width="7.3" height="7.3" fill="#3a3a3c"/><rect x="1748.1" y="1344.6" width="7.3" height="7.3" fill="#48484a"/><rect x="1762.1" y="1344.6" width="7.3" height="7.3" fill="#3a3a3c"/><rect x="1776.2" y="1344.6" width="7.3" height="7.3" fill="#48484a"/><rect x="1783.2" y="1344.6" width="7.3" height="7.3" fill="#666668"/><rect x="1790.3" y="1344.6" width="7.3" height="7.3" fill="#363638"/><rect x="1797.3" y="1344.6" width="7.3" height="7.3" fill="#303032"/><rect x="1804.3" y="1344.6" width="7.3" height="7.3" fill="#2c2c2e"/><rect x="1811.4" y="1344.6" width="7.3" height="7.3" fill="#3e3e40"/><rect x="1818.4" y="1344.6" width="7.3" height="7.3" fill="#424244"/><rect x="1825.5" y="1344.6" width="7.3" height="7.3" fill="#4e4e50"/><rect x="1832.5" y="1344.6" width="7.3" height="7.3" fill="#2a2a2c"/><rect x="1839.5" y="1344.6" width="7.3" height="7.3" fill="#48484a"/><rect x="1846.6" y="1344.6" width="7.3" height="7.3" fill="#3e3e40"/><rect x="1853.6" y="1344.6" width="7.3" height="7.3" fill="#3a3a3c"/><rect x="1860.6" y="1344.6" width="7.3" height="7.3" fill="#3e3e40"/><rect x="1867.7" y="1344.6" width="7.3" height="7.3" fill="#2c2c2e"/><rect x="1283.7" y="1351.6" width="7.3" height="7.3" fill="#3e3e40"/><rect x="1290.7" y="1351.6" width="7.3" height="7.3" fill="#5c5c5e"/><rect x="1304.8" y="1351.6" width="7.3" height="7.3" fill="#555557"/><rect x="1311.8" y="1351.6" width="7.3" height="7.3" fill="#424244"/><rect x="1318.9" y="1351.6" width="7.3" height="7.3" fill="#4e4e50"/><rect x="1325.9" y="1351.6" width="7.3" height="7.3" fill="#363638"/><rect x="1333.0" y="1351.6" width="7.3" height="7.3" fill="#5c5c5e"/><rect x="1340.0" y="1351.6" width="7.3" height="7.3" fill="#2c2c2e"/><rect x="1347.0" y="1351.6" width="7.3" height="7.3" fill="#2c2c2e"/><rect x="1354.1" y="1351.6" width="7.3" height="7.3" fill="#2a2a2c"/><rect x="1361.1" y="1351.6" width="7.3" height="7.3" fill="#2c2c2e"/><rect x="1375.2" y="1351.6" width="7.3" height="7.3" fill="#3e3e40"/><rect x="1382.2" y="1351.6" width="7.3" height="7.3" fill="#4e4e50"/><rect x="1389.2" y="1351.6" width="7.3" height="7.3" fill="#363638"/><rect x="1396.3" y="1351.6" width="7.3" height="7.3" fill="#2a2a2c"/><rect x="1403.3" y="1351.6" width="7.3" height="7.3" fill="#555557"/><rect x="1410.3" y="1351.6" width="7.3" height="7.3" fill="#48484a"/><rect x="1417.4" y="1351.6" width="7.3" height="7.3" fill="#3a3a3c"/><rect x="1438.5" y="1351.6" width="7.3" height="7.3" fill="#363638"/><rect x="1445.5" y="1351.6" width="7.3" height="7.3" fill="#2a2a2c"/><rect x="1452.6" y="1351.6" width="7.3" height="7.3" fill="#424244"/><rect x="1459.6" y="1351.6" width="7.3" height="7.3" fill="#333335"/><rect x="1466.6" y="1351.6" width="7.3" height="7.3" fill="#3a3a3c"/><rect x="1473.7" y="1351.6" width="7.3" height="7.3" fill="#666668"/><rect x="1480.7" y="1351.6" width="7.3" height="7.3" fill="#3a3a3c"/><rect x="1487.7" y="1351.6" width="7.3" height="7.3" fill="#3a3a3c"/><rect x="1494.8" y="1351.6" width="7.3" height="7.3" fill="#333335"/><rect x="1501.8" y="1351.6" width="7.3" height="7.3" fill="#666668"/><rect x="1508.8" y="1351.6" width="7.3" height="7.3" fill="#3a3a3c"/><rect x="1522.9" y="1351.6" width="7.3" height="7.3" fill="#303032"/><rect x="1530.0" y="1351.6" width="7.3" height="7.3" fill="#303032"/><rect x="1537.0" y="1351.6" width="7.3" height="7.3" fill="#363638"/><rect x="1551.1" y="1351.6" width="7.3" height="7.3" fill="#555557"/><rect x="1558.1" y="1351.6" width="7.3" height="7.3" fill="#363638"/><rect x="1572.2" y="1351.6" width="7.3" height="7.3" fill="#3e3e40"/><rect x="1586.2" y="1351.6" width="7.3" height="7.3" fill="#2a2a2c"/><rect x="1593.3" y="1351.6" width="7.3" height="7.3" fill="#2a2a2c"/><rect x="1600.3" y="1351.6" width="7.3" height="7.3" fill="#3a3a3c"/><rect x="1621.4" y="1351.6" width="7.3" height="7.3" fill="#303032"/><rect x="1628.5" y="1351.6" width="7.3" height="7.3" fill="#333335"/><rect x="1635.5" y="1351.6" width="7.3" height="7.3" fill="#303032"/><rect x="1649.6" y="1351.6" width="7.3" height="7.3" fill="#3e3e40"/><rect x="1656.6" y="1351.6" width="7.3" height="7.3" fill="#555557"/><rect x="1663.6" y="1351.6" width="7.3" height="7.3" fill="#303032"/><rect x="1670.7" y="1351.6" width="7.3" height="7.3" fill="#3a3a3c"/><rect x="1684.7" y="1351.6" width="7.3" height="7.3" fill="#2e2e30"/><rect x="1698.8" y="1351.6" width="7.3" height="7.3" fill="#48484a"/><rect x="1705.8" y="1351.6" width="7.3" height="7.3" fill="#2a2a2c"/><rect x="1719.9" y="1351.6" width="7.3" height="7.3" fill="#5c5c5e"/><rect x="1727.0" y="1351.6" width="7.3" height="7.3" fill="#303032"/><rect x="1734.0" y="1351.6" width="7.3" height="7.3" fill="#4e4e50"/><rect x="1741.0" y="1351.6" width="7.3" height="7.3" fill="#5c5c5e"/><rect x="1748.1" y="1351.6" width="7.3" height="7.3" fill="#666668"/><rect x="1755.1" y="1351.6" width="7.3" height="7.3" fill="#5c5c5e"/><rect x="1769.2" y="1351.6" width="7.3" height="7.3" fill="#2c2c2e"/><rect x="1776.2" y="1351.6" width="7.3" height="7.3" fill="#303032"/><rect x="1783.2" y="1351.6" width="7.3" height="7.3" fill="#2a2a2c"/><rect x="1790.3" y="1351.6" width="7.3" height="7.3" fill="#4e4e50"/><rect x="1804.3" y="1351.6" width="7.3" height="7.3" fill="#3e3e40"/><rect x="1811.4" y="1351.6" width="7.3" height="7.3" fill="#2e2e30"/><rect x="1832.5" y="1351.6" width="7.3" height="7.3" fill="#2e2e30"/><rect x="1846.6" y="1351.6" width="7.3" height="7.3" fill="#303032"/><rect x="1860.6" y="1351.6" width="7.3" height="7.3" fill="#555557"/><rect x="1867.7" y="1351.6" width="7.3" height="7.3" fill="#2e2e30"/><rect x="1283.7" y="1358.6" width="7.3" height="7.3" fill="#333335"/><rect x="1290.7" y="1358.6" width="7.3" height="7.3" fill="#666668"/><rect x="1297.8" y="1358.6" width="7.3" height="7.3" fill="#5c5c5e"/><rect x="1304.8" y="1358.6" width="7.3" height="7.3" fill="#303032"/><rect x="1311.8" y="1358.6" width="7.3" height="7.3" fill="#2a2a2c"/><rect x="1318.9" y="1358.6" width="7.3" height="7.3" fill="#2e2e30"/><rect x="1325.9" y="1358.6" width="7.3" height="7.3" fill="#303032"/><rect x="1333.0" y="1358.6" width="7.3" height="7.3" fill="#555557"/><rect x="1340.0" y="1358.6" width="7.3" height="7.3" fill="#3e3e40"/><rect x="1347.0" y="1358.6" width="7.3" height="7.3" fill="#2e2e30"/><rect x="1354.1" y="1358.6" width="7.3" height="7.3" fill="#4e4e50"/><rect x="1361.1" y="1358.6" width="7.3" height="7.3" fill="#2a2a2c"/><rect x="1375.2" y="1358.6" width="7.3" height="7.3" fill="#303032"/><rect x="1396.3" y="1358.6" width="7.3" height="7.3" fill="#333335"/><rect x="1403.3" y="1358.6" width="7.3" height="7.3" fill="#2a2a2c"/><rect x="1410.3" y="1358.6" width="7.3" height="7.3" fill="#3e3e40"/><rect x="1431.5" y="1358.6" width="7.3" height="7.3" fill="#333335"/><rect x="1445.5" y="1358.6" width="7.3" height="7.3" fill="#424244"/><rect x="1452.6" y="1358.6" width="7.3" height="7.3" fill="#303032"/><rect x="1459.6" y="1358.6" width="7.3" height="7.3" fill="#333335"/><rect x="1466.6" y="1358.6" width="7.3" height="7.3" fill="#5c5c5e"/><rect x="1480.7" y="1358.6" width="7.3" height="7.3" fill="#333335"/><rect x="1487.7" y="1358.6" width="7.3" height="7.3" fill="#48484a"/><rect x="1494.8" y="1358.6" width="7.3" height="7.3" fill="#2a2a2c"/><rect x="1501.8" y="1358.6" width="7.3" height="7.3" fill="#2e2e30"/><rect x="1508.8" y="1358.6" width="7.3" height="7.3" fill="#2a2a2c"/><rect x="1515.9" y="1358.6" width="7.3" height="7.3" fill="#363638"/><rect x="1522.9" y="1358.6" width="7.3" height="7.3" fill="#303032"/><rect x="1530.0" y="1358.6" width="7.3" height="7.3" fill="#363638"/><rect x="1537.0" y="1358.6" width="7.3" height="7.3" fill="#5c5c5e"/><rect x="1558.1" y="1358.6" width="7.3" height="7.3" fill="#3e3e40"/><rect x="1565.1" y="1358.6" width="7.3" height="7.3" fill="#424244"/><rect x="1572.2" y="1358.6" width="7.3" height="7.3" fill="#2e2e30"/><rect x="1579.2" y="1358.6" width="7.3" height="7.3" fill="#3e3e40"/><rect x="1586.2" y="1358.6" width="7.3" height="7.3" fill="#2a2a2c"/><rect x="1593.3" y="1358.6" width="7.3" height="7.3" fill="#2c2c2e"/><rect x="1600.3" y="1358.6" width="7.3" height="7.3" fill="#555557"/><rect x="1607.3" y="1358.6" width="7.3" height="7.3" fill="#48484a"/><rect x="1621.4" y="1358.6" width="7.3" height="7.3" fill="#555557"/><rect x="1628.5" y="1358.6" width="7.3" height="7.3" fill="#2e2e30"/><rect x="1635.5" y="1358.6" width="7.3" height="7.3" fill="#4e4e50"/><rect x="1649.6" y="1358.6" width="7.3" height="7.3" fill="#666668"/><rect x="1656.6" y="1358.6" width="7.3" height="7.3" fill="#666668"/><rect x="1663.6" y="1358.6" width="7.3" height="7.3" fill="#2e2e30"/><rect x="1670.7" y="1358.6" width="7.3" height="7.3" fill="#2c2c2e"/><rect x="1684.7" y="1358.6" width="7.3" height="7.3" fill="#3e3e40"/><rect x="1691.8" y="1358.6" width="7.3" height="7.3" fill="#424244"/><rect x="1698.8" y="1358.6" width="7.3" height="7.3" fill="#3e3e40"/><rect x="1705.8" y="1358.6" width="7.3" height="7.3" fill="#48484a"/><rect x="1712.9" y="1358.6" width="7.3" height="7.3" fill="#424244"/><rect x="1719.9" y="1358.6" width="7.3" height="7.3" fill="#303032"/><rect x="1727.0" y="1358.6" width="7.3" height="7.3" fill="#424244"/><rect x="1734.0" y="1358.6" width="7.3" height="7.3" fill="#2e2e30"/><rect x="1748.1" y="1358.6" width="7.3" height="7.3" fill="#424244"/><rect x="1755.1" y="1358.6" width="7.3" height="7.3" fill="#2c2c2e"/><rect x="1762.1" y="1358.6" width="7.3" height="7.3" fill="#2a2a2c"/><rect x="1769.2" y="1358.6" width="7.3" height="7.3" fill="#5c5c5e"/><rect x="1776.2" y="1358.6" width="7.3" height="7.3" fill="#303032"/><rect x="1783.2" y="1358.6" width="7.3" height="7.3" fill="#303032"/><rect x="1790.3" y="1358.6" width="7.3" height="7.3" fill="#2e2e30"/><rect x="1797.3" y="1358.6" width="7.3" height="7.3" fill="#333335"/><rect x="1811.4" y="1358.6" width="7.3" height="7.3" fill="#48484a"/><rect x="1818.4" y="1358.6" width="7.3" height="7.3" fill="#333335"/><rect x="1825.5" y="1358.6" width="7.3" height="7.3" fill="#2c2c2e"/><rect x="1832.5" y="1358.6" width="7.3" height="7.3" fill="#48484a"/><rect x="1839.5" y="1358.6" width="7.3" height="7.3" fill="#303032"/><rect x="1846.6" y="1358.6" width="7.3" height="7.3" fill="#5c5c5e"/><rect x="1853.6" y="1358.6" width="7.3" height="7.3" fill="#666668"/><rect x="1860.6" y="1358.6" width="7.3" height="7.3" fill="#303032"/><rect x="1867.7" y="1358.6" width="7.3" height="7.3" fill="#363638"/><rect x="1290.7" y="1365.6" width="7.3" height="7.3" fill="#48484a"/><rect x="1297.8" y="1365.6" width="7.3" height="7.3" fill="#2e2e30"/><rect x="1311.8" y="1365.6" width="7.3" height="7.3" fill="#5c5c5e"/><rect x="1318.9" y="1365.6" width="7.3" height="7.3" fill="#48484a"/><rect x="1333.0" y="1365.6" width="7.3" height="7.3" fill="#3a3a3c"/><rect x="1340.0" y="1365.6" width="7.3" height="7.3" fill="#2a2a2c"/><rect x="1347.0" y="1365.6" width="7.3" height="7.3" fill="#303032"/><rect x="1354.1" y="1365.6" width="7.3" height="7.3" fill="#424244"/><rect x="1361.1" y="1365.6" width="7.3" height="7.3" fill="#2e2e30"/><rect x="1368.1" y="1365.6" width="7.3" height="7.3" fill="#5c5c5e"/><rect x="1375.2" y="1365.6" width="7.3" height="7.3" fill="#303032"/><rect x="1389.2" y="1365.6" width="7.3" height="7.3" fill="#555557"/><rect x="1410.3" y="1365.6" width="7.3" height="7.3" fill="#3e3e40"/><rect x="1417.4" y="1365.6" width="7.3" height="7.3" fill="#424244"/><rect x="1424.4" y="1365.6" width="7.3" height="7.3" fill="#2c2c2e"/><rect x="1431.5" y="1365.6" width="7.3" height="7.3" fill="#4e4e50"/><rect x="1438.5" y="1365.6" width="7.3" height="7.3" fill="#666668"/><rect x="1445.5" y="1365.6" width="7.3" height="7.3" fill="#666668"/><rect x="1452.6" y="1365.6" width="7.3" height="7.3" fill="#3a3a3c"/><rect x="1459.6" y="1365.6" width="7.3" height="7.3" fill="#555557"/><rect x="1473.7" y="1365.6" width="7.3" height="7.3" fill="#5c5c5e"/><rect x="1487.7" y="1365.6" width="7.3" height="7.3" fill="#555557"/><rect x="1494.8" y="1365.6" width="7.3" height="7.3" fill="#333335"/><rect x="1522.9" y="1365.6" width="7.3" height="7.3" fill="#666668"/><rect x="1530.0" y="1365.6" width="7.3" height="7.3" fill="#4e4e50"/><rect x="1537.0" y="1365.6" width="7.3" height="7.3" fill="#3a3a3c"/><rect x="1544.0" y="1365.6" width="7.3" height="7.3" fill="#4e4e50"/><rect x="1551.1" y="1365.6" width="7.3" height="7.3" fill="#666668"/><rect x="1558.1" y="1365.6" width="7.3" height="7.3" fill="#555557"/><rect x="1572.2" y="1365.6" width="7.3" height="7.3" fill="#4e4e50"/><rect x="1579.2" y="1365.6" width="7.3" height="7.3" fill="#5c5c5e"/><rect x="1586.2" y="1365.6" width="7.3" height="7.3" fill="#333335"/><rect x="1593.3" y="1365.6" width="7.3" height="7.3" fill="#666668"/><rect x="1600.3" y="1365.6" width="7.3" height="7.3" fill="#303032"/><rect x="1607.3" y="1365.6" width="7.3" height="7.3" fill="#424244"/><rect x="1614.4" y="1365.6" width="7.3" height="7.3" fill="#3e3e40"/><rect x="1621.4" y="1365.6" width="7.3" height="7.3" fill="#4e4e50"/><rect x="1635.5" y="1365.6" width="7.3" height="7.3" fill="#4e4e50"/><rect x="1642.5" y="1365.6" width="7.3" height="7.3" fill="#5c5c5e"/><rect x="1649.6" y="1365.6" width="7.3" height="7.3" fill="#5c5c5e"/><rect x="1670.7" y="1365.6" width="7.3" height="7.3" fill="#2c2c2e"/><rect x="1677.7" y="1365.6" width="7.3" height="7.3" fill="#4e4e50"/><rect x="1691.8" y="1365.6" width="7.3" height="7.3" fill="#48484a"/><rect x="1705.8" y="1365.6" width="7.3" height="7.3" fill="#333335"/><rect x="1712.9" y="1365.6" width="7.3" height="7.3" fill="#3e3e40"/><rect x="1719.9" y="1365.6" width="7.3" height="7.3" fill="#2c2c2e"/><rect x="1734.0" y="1365.6" width="7.3" height="7.3" fill="#3a3a3c"/><rect x="1741.0" y="1365.6" width="7.3" height="7.3" fill="#3e3e40"/><rect x="1748.1" y="1365.6" width="7.3" height="7.3" fill="#424244"/><rect x="1755.1" y="1365.6" width="7.3" height="7.3" fill="#363638"/><rect x="1762.1" y="1365.6" width="7.3" height="7.3" fill="#3e3e40"/><rect x="1769.2" y="1365.6" width="7.3" height="7.3" fill="#333335"/><rect x="1776.2" y="1365.6" width="7.3" height="7.3" fill="#333335"/><rect x="1783.2" y="1365.6" width="7.3" height="7.3" fill="#3e3e40"/><rect x="1790.3" y="1365.6" width="7.3" height="7.3" fill="#424244"/><rect x="1804.3" y="1365.6" width="7.3" height="7.3" fill="#4e4e50"/><rect x="1811.4" y="1365.6" width="7.3" height="7.3" fill="#3a3a3c"/><rect x="1825.5" y="1365.6" width="7.3" height="7.3" fill="#333335"/><rect x="1832.5" y="1365.6" width="7.3" height="7.3" fill="#2e2e30"/><rect x="1839.5" y="1365.6" width="7.3" height="7.3" fill="#303032"/><rect x="1846.6" y="1365.6" width="7.3" height="7.3" fill="#666668"/><rect x="1853.6" y="1365.6" width="7.3" height="7.3" fill="#3a3a3c"/><rect x="1860.6" y="1365.6" width="7.3" height="7.3" fill="#363638"/><rect x="882" y="1379.6" width="1262" height="2" fill="#1b1b1e"/></svg>
<div class="r" style="left:2202.0px;top:295.0px;width:20.0px;height:20.0px;background:#8289ff;border-radius:4px"></div>
<div class="r" style="left:2202.0px;top:335.0px;width:20.0px;height:20.0px;background:#235587;border-radius:4px"></div>
<div class="t" style="left:2231.5px;top:295.5px;font-size:23.4px;color:#c0c0c4;font-weight:400;font-family:'Liberation Mono', monospace;">{kafka_id=</div>
<div class="t" style="left:2371.9px;top:295.5px;font-size:23.4px;color:#4fc3f7;font-weight:400;font-family:'Liberation Mono', monospace;">"</div>
<div class="t" style="left:2535.5px;top:295.5px;font-size:23.4px;color:#4fc3f7;font-weight:400;font-family:'Liberation Mono', monospace;">"</div>
<div class="t" style="left:2549.5px;top:295.5px;font-size:23.4px;color:#c0c0c4;font-weight:400;font-family:'Liberation Mono', monospace;">, topic=</div>
<div class="t" style="left:2661.9px;top:295.5px;font-size:23.4px;color:#4fc3f7;font-weight:400;font-family:'Liberation Mono', monospace;">"</div>
<div class="t" style="left:2921.7px;top:295.5px;font-size:23.4px;color:#4fc3f7;font-weight:400;font-family:'Liberation Mono', monospace;">"</div>
<div class="t" style="left:2935.7px;top:295.5px;font-size:23.4px;color:#c0c0c4;font-weight:400;font-family:'Liberation Mono', monospace;">}</div>
<div class="t" style="left:2231.5px;top:335.4px;font-size:23.4px;color:#c0c0c4;font-weight:400;font-family:'Liberation Mono', monospace;">{kafka_id=</div>
<div class="t" style="left:2371.9px;top:335.4px;font-size:23.4px;color:#4fc3f7;font-weight:400;font-family:'Liberation Mono', monospace;">"</div>
<div class="t" style="left:2535.5px;top:335.4px;font-size:23.4px;color:#4fc3f7;font-weight:400;font-family:'Liberation Mono', monospace;">"</div>
<div class="t" style="left:2549.5px;top:335.4px;font-size:23.4px;color:#c0c0c4;font-weight:400;font-family:'Liberation Mono', monospace;">, topic=</div>
<div class="t" style="left:2661.9px;top:335.4px;font-size:23.4px;color:#4fc3f7;font-weight:400;font-family:'Liberation Mono', monospace;">"</div>
<div class="t" style="left:3265.7px;top:335.4px;font-size:23.4px;color:#4fc3f7;font-weight:400;font-family:'Liberation Mono', monospace;">"</div>
<div class="t" style="left:3279.7px;top:335.4px;font-size:23.4px;color:#c0c0c4;font-weight:400;font-family:'Liberation Mono', monospace;">}</div>
<svg width="3444" height="400"><rect x="2387.0" y="291.4" width="7.2" height="7.3" fill="#357ea6"/><rect x="2393.9" y="291.4" width="7.2" height="7.3" fill="#306b8c"/><rect x="2400.8" y="291.4" width="7.2" height="7.3" fill="#294c62"/><rect x="2407.7" y="291.4" width="7.2" height="7.3" fill="#233442"/><rect x="2421.5" y="291.4" width="7.2" height="7.3" fill="#306988"/><rect x="2428.4" y="291.4" width="7.2" height="7.3" fill="#253f50"/><rect x="2435.3" y="291.4" width="7.2" height="7.3" fill="#294e65"/><rect x="2449.1" y="291.4" width="7.2" height="7.3" fill="#264052"/><rect x="2469.9" y="291.4" width="7.2" height="7.3" fill="#22313d"/><rect x="2476.8" y="291.4" width="7.2" height="7.3" fill="#274559"/><rect x="2490.6" y="291.4" width="7.2" height="7.3" fill="#2c5973"/><rect x="2497.5" y="291.4" width="7.2" height="7.3" fill="#264052"/><rect x="2504.4" y="291.4" width="7.2" height="7.3" fill="#2c5a75"/><rect x="2518.2" y="291.4" width="7.2" height="7.3" fill="#253f51"/><rect x="2387.0" y="298.4" width="7.2" height="7.3" fill="#306b8c"/><rect x="2393.9" y="298.4" width="7.2" height="7.3" fill="#294f66"/><rect x="2400.8" y="298.4" width="7.2" height="7.3" fill="#2e6280"/><rect x="2428.4" y="298.4" width="7.2" height="7.3" fill="#253d4d"/><rect x="2435.3" y="298.4" width="7.2" height="7.3" fill="#347a9f"/><rect x="2449.1" y="298.4" width="7.2" height="7.3" fill="#2a526a"/><rect x="2456.0" y="298.4" width="7.2" height="7.3" fill="#22303c"/><rect x="2463.0" y="298.4" width="7.2" height="7.3" fill="#2e627f"/><rect x="2469.9" y="298.4" width="7.2" height="7.3" fill="#243a4a"/><rect x="2483.7" y="298.4" width="7.2" height="7.3" fill="#294e64"/><rect x="2490.6" y="298.4" width="7.2" height="7.3" fill="#357da4"/><rect x="2497.5" y="298.4" width="7.2" height="7.3" fill="#306888"/><rect x="2504.4" y="298.4" width="7.2" height="7.3" fill="#264153"/><rect x="2525.1" y="298.4" width="7.2" height="7.3" fill="#243a49"/><rect x="2387.0" y="305.4" width="7.2" height="7.3" fill="#2a5168"/><rect x="2407.7" y="305.4" width="7.2" height="7.3" fill="#223340"/><rect x="2414.6" y="305.4" width="7.2" height="7.3" fill="#327093"/><rect x="2421.5" y="305.4" width="7.2" height="7.3" fill="#2e617e"/><rect x="2428.4" y="305.4" width="7.2" height="7.3" fill="#253c4c"/><rect x="2435.3" y="305.4" width="7.2" height="7.3" fill="#243b4b"/><rect x="2442.2" y="305.4" width="7.2" height="7.3" fill="#347ba2"/><rect x="2456.0" y="305.4" width="7.2" height="7.3" fill="#253c4c"/><rect x="2469.9" y="305.4" width="7.2" height="7.3" fill="#253c4d"/><rect x="2476.8" y="305.4" width="7.2" height="7.3" fill="#22323f"/><rect x="2483.7" y="305.4" width="7.2" height="7.3" fill="#264254"/><rect x="2490.6" y="305.4" width="7.2" height="7.3" fill="#347ba1"/><rect x="2497.5" y="305.4" width="7.2" height="7.3" fill="#233644"/><rect x="2511.3" y="305.4" width="7.2" height="7.3" fill="#316c8d"/><rect x="2518.2" y="305.4" width="7.2" height="7.3" fill="#2f6584"/><rect x="2525.1" y="305.4" width="7.2" height="7.3" fill="#223341"/><rect x="2393.9" y="312.4" width="7.2" height="7.3" fill="#294f66"/><rect x="2400.8" y="312.4" width="7.2" height="7.3" fill="#2e6280"/><rect x="2407.7" y="312.4" width="7.2" height="7.3" fill="#253f51"/><rect x="2421.5" y="312.4" width="7.2" height="7.3" fill="#243a4a"/><rect x="2428.4" y="312.4" width="7.2" height="7.3" fill="#243948"/><rect x="2442.2" y="312.4" width="7.2" height="7.3" fill="#306a8b"/><rect x="2449.1" y="312.4" width="7.2" height="7.3" fill="#253f50"/><rect x="2463.0" y="312.4" width="7.2" height="7.3" fill="#243847"/><rect x="2469.9" y="312.4" width="7.2" height="7.3" fill="#294e65"/><rect x="2483.7" y="312.4" width="7.2" height="7.3" fill="#264356"/><rect x="2497.5" y="312.4" width="7.2" height="7.3" fill="#253c4c"/><rect x="2504.4" y="312.4" width="7.2" height="7.3" fill="#347ba2"/><rect x="2511.3" y="312.4" width="7.2" height="7.3" fill="#2d5c77"/><rect x="2525.1" y="312.4" width="7.2" height="7.3" fill="#34789d"/><rect x="2682.9" y="291.4" width="7.3" height="7.3" fill="#264154"/><rect x="2696.9" y="291.4" width="7.3" height="7.3" fill="#233543"/><rect x="2710.9" y="291.4" width="7.3" height="7.3" fill="#294c62"/><rect x="2717.9" y="291.4" width="7.3" height="7.3" fill="#327397"/><rect x="2724.9" y="291.4" width="7.3" height="7.3" fill="#253e4f"/><rect x="2731.9" y="291.4" width="7.3" height="7.3" fill="#264356"/><rect x="2738.9" y="291.4" width="7.3" height="7.3" fill="#316d8f"/><rect x="2745.9" y="291.4" width="7.3" height="7.3" fill="#2a5168"/><rect x="2752.9" y="291.4" width="7.3" height="7.3" fill="#2a5068"/><rect x="2759.9" y="291.4" width="7.3" height="7.3" fill="#316d8e"/><rect x="2780.9" y="291.4" width="7.3" height="7.3" fill="#2c5a75"/><rect x="2794.9" y="291.4" width="7.3" height="7.3" fill="#327396"/><rect x="2822.9" y="291.4" width="7.3" height="7.3" fill="#327193"/><rect x="2829.9" y="291.4" width="7.3" height="7.3" fill="#2d5d79"/><rect x="2843.9" y="291.4" width="7.3" height="7.3" fill="#243a49"/><rect x="2850.9" y="291.4" width="7.3" height="7.3" fill="#2a536c"/><rect x="2864.9" y="291.4" width="7.3" height="7.3" fill="#233645"/><rect x="2871.9" y="291.4" width="7.3" height="7.3" fill="#22313e"/><rect x="2878.9" y="291.4" width="7.3" height="7.3" fill="#357ca3"/><rect x="2892.9" y="291.4" width="7.3" height="7.3" fill="#2d5d78"/><rect x="2899.9" y="291.4" width="7.3" height="7.3" fill="#316c8d"/><rect x="2906.9" y="291.4" width="7.3" height="7.3" fill="#22303c"/><rect x="2913.9" y="291.4" width="7.3" height="7.3" fill="#223340"/><rect x="2675.9" y="298.4" width="7.3" height="7.3" fill="#22303d"/><rect x="2682.9" y="298.4" width="7.3" height="7.3" fill="#294f66"/><rect x="2696.9" y="298.4" width="7.3" height="7.3" fill="#306b8b"/><rect x="2703.9" y="298.4" width="7.3" height="7.3" fill="#233745"/><rect x="2710.9" y="298.4" width="7.3" height="7.3" fill="#253e4f"/><rect x="2717.9" y="298.4" width="7.3" height="7.3" fill="#2a5067"/><rect x="2724.9" y="298.4" width="7.3" height="7.3" fill="#2f6786"/><rect x="2731.9" y="298.4" width="7.3" height="7.3" fill="#316c8d"/><rect x="2745.9" y="298.4" width="7.3" height="7.3" fill="#22303c"/><rect x="2759.9" y="298.4" width="7.3" height="7.3" fill="#284a60"/><rect x="2766.9" y="298.4" width="7.3" height="7.3" fill="#22303d"/><rect x="2773.9" y="298.4" width="7.3" height="7.3" fill="#2d5f7c"/><rect x="2780.9" y="298.4" width="7.3" height="7.3" fill="#264254"/><rect x="2787.9" y="298.4" width="7.3" height="7.3" fill="#2a526a"/><rect x="2794.9" y="298.4" width="7.3" height="7.3" fill="#316f92"/><rect x="2822.9" y="298.4" width="7.3" height="7.3" fill="#357ea5"/><rect x="2829.9" y="298.4" width="7.3" height="7.3" fill="#28485d"/><rect x="2836.9" y="298.4" width="7.3" height="7.3" fill="#27465a"/><rect x="2843.9" y="298.4" width="7.3" height="7.3" fill="#2d5e7a"/><rect x="2850.9" y="298.4" width="7.3" height="7.3" fill="#253e4f"/><rect x="2857.9" y="298.4" width="7.3" height="7.3" fill="#264255"/><rect x="2864.9" y="298.4" width="7.3" height="7.3" fill="#233543"/><rect x="2878.9" y="298.4" width="7.3" height="7.3" fill="#274558"/><rect x="2885.9" y="298.4" width="7.3" height="7.3" fill="#2d5d79"/><rect x="2892.9" y="298.4" width="7.3" height="7.3" fill="#243948"/><rect x="2899.9" y="298.4" width="7.3" height="7.3" fill="#2d5d79"/><rect x="2703.9" y="305.4" width="7.3" height="7.3" fill="#233644"/><rect x="2710.9" y="305.4" width="7.3" height="7.3" fill="#316f91"/><rect x="2724.9" y="305.4" width="7.3" height="7.3" fill="#243948"/><rect x="2731.9" y="305.4" width="7.3" height="7.3" fill="#233441"/><rect x="2738.9" y="305.4" width="7.3" height="7.3" fill="#357ea6"/><rect x="2745.9" y="305.4" width="7.3" height="7.3" fill="#22303c"/><rect x="2752.9" y="305.4" width="7.3" height="7.3" fill="#253f50"/><rect x="2773.9" y="305.4" width="7.3" height="7.3" fill="#22323e"/><rect x="2780.9" y="305.4" width="7.3" height="7.3" fill="#233441"/><rect x="2794.9" y="305.4" width="7.3" height="7.3" fill="#357ea6"/><rect x="2815.9" y="305.4" width="7.3" height="7.3" fill="#306a8a"/><rect x="2822.9" y="305.4" width="7.3" height="7.3" fill="#22323f"/><rect x="2829.9" y="305.4" width="7.3" height="7.3" fill="#284b60"/><rect x="2836.9" y="305.4" width="7.3" height="7.3" fill="#243847"/><rect x="2843.9" y="305.4" width="7.3" height="7.3" fill="#337498"/><rect x="2871.9" y="305.4" width="7.3" height="7.3" fill="#2e607d"/><rect x="2878.9" y="305.4" width="7.3" height="7.3" fill="#306989"/><rect x="2892.9" y="305.4" width="7.3" height="7.3" fill="#22303c"/><rect x="2899.9" y="305.4" width="7.3" height="7.3" fill="#2a5169"/><rect x="2906.9" y="305.4" width="7.3" height="7.3" fill="#22303c"/><rect x="2682.9" y="312.4" width="7.3" height="7.3" fill="#22303c"/><rect x="2696.9" y="312.4" width="7.3" height="7.3" fill="#22313d"/><rect x="2703.9" y="312.4" width="7.3" height="7.3" fill="#2b556e"/><rect x="2717.9" y="312.4" width="7.3" height="7.3" fill="#2b5770"/><rect x="2724.9" y="312.4" width="7.3" height="7.3" fill="#243847"/><rect x="2738.9" y="312.4" width="7.3" height="7.3" fill="#22323e"/><rect x="2745.9" y="312.4" width="7.3" height="7.3" fill="#22323f"/><rect x="2752.9" y="312.4" width="7.3" height="7.3" fill="#27465a"/><rect x="2759.9" y="312.4" width="7.3" height="7.3" fill="#2b5670"/><rect x="2773.9" y="312.4" width="7.3" height="7.3" fill="#22313d"/><rect x="2787.9" y="312.4" width="7.3" height="7.3" fill="#27475c"/><rect x="2794.9" y="312.4" width="7.3" height="7.3" fill="#2c5a75"/><rect x="2808.9" y="312.4" width="7.3" height="7.3" fill="#2c5872"/><rect x="2815.9" y="312.4" width="7.3" height="7.3" fill="#28485c"/><rect x="2822.9" y="312.4" width="7.3" height="7.3" fill="#337498"/><rect x="2829.9" y="312.4" width="7.3" height="7.3" fill="#22303d"/><rect x="2836.9" y="312.4" width="7.3" height="7.3" fill="#357ea5"/><rect x="2843.9" y="312.4" width="7.3" height="7.3" fill="#264154"/><rect x="2864.9" y="312.4" width="7.3" height="7.3" fill="#2e617e"/><rect x="2871.9" y="312.4" width="7.3" height="7.3" fill="#22313e"/><rect x="2892.9" y="312.4" width="7.3" height="7.3" fill="#22303c"/><rect x="2899.9" y="312.4" width="7.3" height="7.3" fill="#33779c"/><rect x="2906.9" y="312.4" width="7.3" height="7.3" fill="#2c5a75"/><rect x="2387.0" y="331.3" width="7.2" height="7.3" fill="#33759a"/><rect x="2393.9" y="331.3" width="7.2" height="7.3" fill="#223341"/><rect x="2400.8" y="331.3" width="7.2" height="7.3" fill="#2e6381"/><rect x="2407.7" y="331.3" width="7.2" height="7.3" fill="#357ca3"/><rect x="2421.5" y="331.3" width="7.2" height="7.3" fill="#306888"/><rect x="2428.4" y="331.3" width="7.2" height="7.3" fill="#284b61"/><rect x="2435.3" y="331.3" width="7.2" height="7.3" fill="#2f6685"/><rect x="2456.0" y="331.3" width="7.2" height="7.3" fill="#316d8f"/><rect x="2463.0" y="331.3" width="7.2" height="7.3" fill="#306a8a"/><rect x="2469.9" y="331.3" width="7.2" height="7.3" fill="#2b556e"/><rect x="2476.8" y="331.3" width="7.2" height="7.3" fill="#2f6787"/><rect x="2483.7" y="331.3" width="7.2" height="7.3" fill="#22303d"/><rect x="2490.6" y="331.3" width="7.2" height="7.3" fill="#243b4a"/><rect x="2497.5" y="331.3" width="7.2" height="7.3" fill="#22303c"/><rect x="2511.3" y="331.3" width="7.2" height="7.3" fill="#306b8c"/><rect x="2525.1" y="331.3" width="7.2" height="7.3" fill="#22323f"/><rect x="2387.0" y="338.3" width="7.2" height="7.3" fill="#233644"/><rect x="2393.9" y="338.3" width="7.2" height="7.3" fill="#22323f"/><rect x="2407.7" y="338.3" width="7.2" height="7.3" fill="#253f50"/><rect x="2414.6" y="338.3" width="7.2" height="7.3" fill="#2e607d"/><rect x="2435.3" y="338.3" width="7.2" height="7.3" fill="#264051"/><rect x="2442.2" y="338.3" width="7.2" height="7.3" fill="#2e6381"/><rect x="2449.1" y="338.3" width="7.2" height="7.3" fill="#2a536c"/><rect x="2469.9" y="338.3" width="7.2" height="7.3" fill="#22313d"/><rect x="2476.8" y="338.3" width="7.2" height="7.3" fill="#2d5c77"/><rect x="2483.7" y="338.3" width="7.2" height="7.3" fill="#294c61"/><rect x="2490.6" y="338.3" width="7.2" height="7.3" fill="#264355"/><rect x="2497.5" y="338.3" width="7.2" height="7.3" fill="#2c5872"/><rect x="2400.8" y="345.3" width="7.2" height="7.3" fill="#2c5b76"/><rect x="2414.6" y="345.3" width="7.2" height="7.3" fill="#327093"/><rect x="2421.5" y="345.3" width="7.2" height="7.3" fill="#34789e"/><rect x="2428.4" y="345.3" width="7.2" height="7.3" fill="#2d5d79"/><rect x="2435.3" y="345.3" width="7.2" height="7.3" fill="#243b4b"/><rect x="2442.2" y="345.3" width="7.2" height="7.3" fill="#253d4d"/><rect x="2449.1" y="345.3" width="7.2" height="7.3" fill="#274559"/><rect x="2463.0" y="345.3" width="7.2" height="7.3" fill="#33779c"/><rect x="2497.5" y="345.3" width="7.2" height="7.3" fill="#243847"/><rect x="2504.4" y="345.3" width="7.2" height="7.3" fill="#22303c"/><rect x="2511.3" y="345.3" width="7.2" height="7.3" fill="#327195"/><rect x="2525.1" y="345.3" width="7.2" height="7.3" fill="#2f6483"/><rect x="2407.7" y="352.3" width="7.2" height="7.3" fill="#22323e"/><rect x="2421.5" y="352.3" width="7.2" height="7.3" fill="#2b556f"/><rect x="2428.4" y="352.3" width="7.2" height="7.3" fill="#294d63"/><rect x="2442.2" y="352.3" width="7.2" height="7.3" fill="#294d63"/><rect x="2449.1" y="352.3" width="7.2" height="7.3" fill="#294d64"/><rect x="2463.0" y="352.3" width="7.2" height="7.3" fill="#337599"/><rect x="2469.9" y="352.3" width="7.2" height="7.3" fill="#347ba2"/><rect x="2476.8" y="352.3" width="7.2" height="7.3" fill="#233645"/><rect x="2483.7" y="352.3" width="7.2" height="7.3" fill="#337498"/><rect x="2490.6" y="352.3" width="7.2" height="7.3" fill="#243948"/><rect x="2511.3" y="352.3" width="7.2" height="7.3" fill="#274558"/><rect x="2518.2" y="352.3" width="7.2" height="7.3" fill="#2d5c77"/><rect x="2682.9" y="331.3" width="7.3" height="7.3" fill="#243948"/><rect x="2689.9" y="331.3" width="7.3" height="7.3" fill="#2d5c77"/><rect x="2696.9" y="331.3" width="7.3" height="7.3" fill="#243948"/><rect x="2711.0" y="331.3" width="7.3" height="7.3" fill="#2a526a"/><rect x="2718.0" y="331.3" width="7.3" height="7.3" fill="#2a536b"/><rect x="2725.0" y="331.3" width="7.3" height="7.3" fill="#243b4c"/><rect x="2732.0" y="331.3" width="7.3" height="7.3" fill="#22313d"/><rect x="2739.0" y="331.3" width="7.3" height="7.3" fill="#253f51"/><rect x="2746.0" y="331.3" width="7.3" height="7.3" fill="#22323f"/><rect x="2753.0" y="331.3" width="7.3" height="7.3" fill="#357ca2"/><rect x="2760.0" y="331.3" width="7.3" height="7.3" fill="#243a49"/><rect x="2774.1" y="331.3" width="7.3" height="7.3" fill="#22323e"/><rect x="2781.1" y="331.3" width="7.3" height="7.3" fill="#264355"/><rect x="2788.1" y="331.3" width="7.3" height="7.3" fill="#274559"/><rect x="2802.1" y="331.3" width="7.3" height="7.3" fill="#33779c"/><rect x="2809.1" y="331.3" width="7.3" height="7.3" fill="#306b8c"/><rect x="2816.1" y="331.3" width="7.3" height="7.3" fill="#306b8b"/><rect x="2823.2" y="331.3" width="7.3" height="7.3" fill="#316e90"/><rect x="2837.2" y="331.3" width="7.3" height="7.3" fill="#243a49"/><rect x="2844.2" y="331.3" width="7.3" height="7.3" fill="#233543"/><rect x="2858.2" y="331.3" width="7.3" height="7.3" fill="#2c5973"/><rect x="2865.2" y="331.3" width="7.3" height="7.3" fill="#2c5973"/><rect x="2872.2" y="331.3" width="7.3" height="7.3" fill="#223340"/><rect x="2879.2" y="331.3" width="7.3" height="7.3" fill="#357da5"/><rect x="2886.3" y="331.3" width="7.3" height="7.3" fill="#2c5872"/><rect x="2893.3" y="331.3" width="7.3" height="7.3" fill="#233745"/><rect x="2900.3" y="331.3" width="7.3" height="7.3" fill="#22303c"/><rect x="2914.3" y="331.3" width="7.3" height="7.3" fill="#347ba1"/><rect x="2921.3" y="331.3" width="7.3" height="7.3" fill="#2d5f7c"/><rect x="2928.3" y="331.3" width="7.3" height="7.3" fill="#2f6685"/><rect x="2935.3" y="331.3" width="7.3" height="7.3" fill="#264051"/><rect x="2942.4" y="331.3" width="7.3" height="7.3" fill="#22323f"/><rect x="2949.4" y="331.3" width="7.3" height="7.3" fill="#2f6786"/><rect x="2956.4" y="331.3" width="7.3" height="7.3" fill="#264153"/><rect x="2970.4" y="331.3" width="7.3" height="7.3" fill="#233543"/><rect x="2977.4" y="331.3" width="7.3" height="7.3" fill="#264153"/><rect x="2984.4" y="331.3" width="7.3" height="7.3" fill="#2b5771"/><rect x="2991.4" y="331.3" width="7.3" height="7.3" fill="#316f92"/><rect x="2998.4" y="331.3" width="7.3" height="7.3" fill="#2c5974"/><rect x="3012.5" y="331.3" width="7.3" height="7.3" fill="#22303c"/><rect x="3019.5" y="331.3" width="7.3" height="7.3" fill="#22323f"/><rect x="3026.5" y="331.3" width="7.3" height="7.3" fill="#2d5e7a"/><rect x="3033.5" y="331.3" width="7.3" height="7.3" fill="#22323f"/><rect x="3040.5" y="331.3" width="7.3" height="7.3" fill="#233442"/><rect x="3047.5" y="331.3" width="7.3" height="7.3" fill="#274559"/><rect x="3054.5" y="331.3" width="7.3" height="7.3" fill="#22313d"/><rect x="3061.6" y="331.3" width="7.3" height="7.3" fill="#27475c"/><rect x="3075.6" y="331.3" width="7.3" height="7.3" fill="#22313d"/><rect x="3082.6" y="331.3" width="7.3" height="7.3" fill="#2e617f"/><rect x="3089.6" y="331.3" width="7.3" height="7.3" fill="#327092"/><rect x="3110.6" y="331.3" width="7.3" height="7.3" fill="#34789e"/><rect x="3117.7" y="331.3" width="7.3" height="7.3" fill="#243846"/><rect x="3124.7" y="331.3" width="7.3" height="7.3" fill="#316f91"/><rect x="3131.7" y="331.3" width="7.3" height="7.3" fill="#22313e"/><rect x="3138.7" y="331.3" width="7.3" height="7.3" fill="#33769b"/><rect x="3145.7" y="331.3" width="7.3" height="7.3" fill="#2e607d"/><rect x="3152.7" y="331.3" width="7.3" height="7.3" fill="#27465a"/><rect x="3159.7" y="331.3" width="7.3" height="7.3" fill="#233644"/><rect x="3166.7" y="331.3" width="7.3" height="7.3" fill="#253f51"/><rect x="3173.7" y="331.3" width="7.3" height="7.3" fill="#357da5"/><rect x="3180.8" y="331.3" width="7.3" height="7.3" fill="#233542"/><rect x="3187.8" y="331.3" width="7.3" height="7.3" fill="#2c5872"/><rect x="3194.8" y="331.3" width="7.3" height="7.3" fill="#22303c"/><rect x="3201.8" y="331.3" width="7.3" height="7.3" fill="#2e617e"/><rect x="3208.8" y="331.3" width="7.3" height="7.3" fill="#233746"/><rect x="3215.8" y="331.3" width="7.3" height="7.3" fill="#2a536c"/><rect x="3222.8" y="331.3" width="7.3" height="7.3" fill="#223340"/><rect x="3257.9" y="331.3" width="7.3" height="7.3" fill="#327397"/><rect x="2675.9" y="338.3" width="7.3" height="7.3" fill="#233746"/><rect x="2682.9" y="338.3" width="7.3" height="7.3" fill="#327397"/><rect x="2689.9" y="338.3" width="7.3" height="7.3" fill="#233645"/><rect x="2696.9" y="338.3" width="7.3" height="7.3" fill="#274558"/><rect x="2703.9" y="338.3" width="7.3" height="7.3" fill="#233543"/><rect x="2718.0" y="338.3" width="7.3" height="7.3" fill="#34789d"/><rect x="2725.0" y="338.3" width="7.3" height="7.3" fill="#2c5b76"/><rect x="2732.0" y="338.3" width="7.3" height="7.3" fill="#34799f"/><rect x="2739.0" y="338.3" width="7.3" height="7.3" fill="#28485d"/><rect x="2746.0" y="338.3" width="7.3" height="7.3" fill="#34799f"/><rect x="2753.0" y="338.3" width="7.3" height="7.3" fill="#357ea6"/><rect x="2760.0" y="338.3" width="7.3" height="7.3" fill="#233645"/><rect x="2774.1" y="338.3" width="7.3" height="7.3" fill="#357fa7"/><rect x="2781.1" y="338.3" width="7.3" height="7.3" fill="#233746"/><rect x="2795.1" y="338.3" width="7.3" height="7.3" fill="#264255"/><rect x="2802.1" y="338.3" width="7.3" height="7.3" fill="#2c5a74"/><rect x="2809.1" y="338.3" width="7.3" height="7.3" fill="#264052"/><rect x="2816.1" y="338.3" width="7.3" height="7.3" fill="#306b8b"/><rect x="2823.2" y="338.3" width="7.3" height="7.3" fill="#2b546c"/><rect x="2830.2" y="338.3" width="7.3" height="7.3" fill="#27465a"/><rect x="2837.2" y="338.3" width="7.3" height="7.3" fill="#2d5e7a"/><rect x="2844.2" y="338.3" width="7.3" height="7.3" fill="#243847"/><rect x="2851.2" y="338.3" width="7.3" height="7.3" fill="#347aa1"/><rect x="2858.2" y="338.3" width="7.3" height="7.3" fill="#223340"/><rect x="2865.2" y="338.3" width="7.3" height="7.3" fill="#2a5169"/><rect x="2879.2" y="338.3" width="7.3" height="7.3" fill="#233746"/><rect x="2886.3" y="338.3" width="7.3" height="7.3" fill="#2a5169"/><rect x="2893.3" y="338.3" width="7.3" height="7.3" fill="#264355"/><rect x="2907.3" y="338.3" width="7.3" height="7.3" fill="#316e90"/><rect x="2921.3" y="338.3" width="7.3" height="7.3" fill="#34789e"/><rect x="2928.3" y="338.3" width="7.3" height="7.3" fill="#22303c"/><rect x="2942.4" y="338.3" width="7.3" height="7.3" fill="#22303c"/><rect x="2949.4" y="338.3" width="7.3" height="7.3" fill="#243a4a"/><rect x="2970.4" y="338.3" width="7.3" height="7.3" fill="#294c63"/><rect x="2991.4" y="338.3" width="7.3" height="7.3" fill="#284b61"/><rect x="2998.4" y="338.3" width="7.3" height="7.3" fill="#243847"/><rect x="3005.5" y="338.3" width="7.3" height="7.3" fill="#2a5269"/><rect x="3033.5" y="338.3" width="7.3" height="7.3" fill="#22313d"/><rect x="3047.5" y="338.3" width="7.3" height="7.3" fill="#233543"/><rect x="3054.5" y="338.3" width="7.3" height="7.3" fill="#243948"/><rect x="3061.6" y="338.3" width="7.3" height="7.3" fill="#264051"/><rect x="3068.6" y="338.3" width="7.3" height="7.3" fill="#2c5a75"/><rect x="3075.6" y="338.3" width="7.3" height="7.3" fill="#2e617e"/><rect x="3082.6" y="338.3" width="7.3" height="7.3" fill="#28485c"/><rect x="3089.6" y="338.3" width="7.3" height="7.3" fill="#2f6787"/><rect x="3096.6" y="338.3" width="7.3" height="7.3" fill="#28485c"/><rect x="3103.6" y="338.3" width="7.3" height="7.3" fill="#2d5e7a"/><rect x="3110.6" y="338.3" width="7.3" height="7.3" fill="#233542"/><rect x="3131.7" y="338.3" width="7.3" height="7.3" fill="#274458"/><rect x="3145.7" y="338.3" width="7.3" height="7.3" fill="#264355"/><rect x="3166.7" y="338.3" width="7.3" height="7.3" fill="#2e607e"/><rect x="3173.7" y="338.3" width="7.3" height="7.3" fill="#2c5974"/><rect x="3187.8" y="338.3" width="7.3" height="7.3" fill="#233745"/><rect x="3194.8" y="338.3" width="7.3" height="7.3" fill="#243948"/><rect x="3201.8" y="338.3" width="7.3" height="7.3" fill="#223340"/><rect x="3208.8" y="338.3" width="7.3" height="7.3" fill="#274457"/><rect x="3215.8" y="338.3" width="7.3" height="7.3" fill="#2a5169"/><rect x="3229.8" y="338.3" width="7.3" height="7.3" fill="#253f50"/><rect x="3243.9" y="338.3" width="7.3" height="7.3" fill="#233442"/><rect x="3250.9" y="338.3" width="7.3" height="7.3" fill="#22303c"/><rect x="3257.9" y="338.3" width="7.3" height="7.3" fill="#233441"/><rect x="2675.9" y="345.3" width="7.3" height="7.3" fill="#347ba1"/><rect x="2696.9" y="345.3" width="7.3" height="7.3" fill="#2b5670"/><rect x="2718.0" y="345.3" width="7.3" height="7.3" fill="#2f6482"/><rect x="2725.0" y="345.3" width="7.3" height="7.3" fill="#243948"/><rect x="2739.0" y="345.3" width="7.3" height="7.3" fill="#316d8f"/><rect x="2753.0" y="345.3" width="7.3" height="7.3" fill="#233644"/><rect x="2760.0" y="345.3" width="7.3" height="7.3" fill="#294d63"/><rect x="2774.1" y="345.3" width="7.3" height="7.3" fill="#22313d"/><rect x="2781.1" y="345.3" width="7.3" height="7.3" fill="#233442"/><rect x="2788.1" y="345.3" width="7.3" height="7.3" fill="#22303c"/><rect x="2795.1" y="345.3" width="7.3" height="7.3" fill="#243948"/><rect x="2816.1" y="345.3" width="7.3" height="7.3" fill="#22323f"/><rect x="2837.2" y="345.3" width="7.3" height="7.3" fill="#253d4e"/><rect x="2844.2" y="345.3" width="7.3" height="7.3" fill="#253c4d"/><rect x="2851.2" y="345.3" width="7.3" height="7.3" fill="#28485d"/><rect x="2858.2" y="345.3" width="7.3" height="7.3" fill="#22303d"/><rect x="2865.2" y="345.3" width="7.3" height="7.3" fill="#233441"/><rect x="2872.2" y="345.3" width="7.3" height="7.3" fill="#2b556e"/><rect x="2879.2" y="345.3" width="7.3" height="7.3" fill="#243948"/><rect x="2900.3" y="345.3" width="7.3" height="7.3" fill="#28495e"/><rect x="2907.3" y="345.3" width="7.3" height="7.3" fill="#33779b"/><rect x="2914.3" y="345.3" width="7.3" height="7.3" fill="#22303c"/><rect x="2921.3" y="345.3" width="7.3" height="7.3" fill="#2d5c78"/><rect x="2928.3" y="345.3" width="7.3" height="7.3" fill="#2d5e7b"/><rect x="2935.3" y="345.3" width="7.3" height="7.3" fill="#2f6787"/><rect x="2949.4" y="345.3" width="7.3" height="7.3" fill="#2a5269"/><rect x="2956.4" y="345.3" width="7.3" height="7.3" fill="#2d5e7a"/><rect x="2977.4" y="345.3" width="7.3" height="7.3" fill="#22313e"/><rect x="2984.4" y="345.3" width="7.3" height="7.3" fill="#2a5067"/><rect x="2991.4" y="345.3" width="7.3" height="7.3" fill="#233543"/><rect x="2998.4" y="345.3" width="7.3" height="7.3" fill="#22323f"/><rect x="3005.5" y="345.3" width="7.3" height="7.3" fill="#243847"/><rect x="3012.5" y="345.3" width="7.3" height="7.3" fill="#274457"/><rect x="3019.5" y="345.3" width="7.3" height="7.3" fill="#2d5f7c"/><rect x="3026.5" y="345.3" width="7.3" height="7.3" fill="#2d5f7c"/><rect x="3033.5" y="345.3" width="7.3" height="7.3" fill="#243b4a"/><rect x="3040.5" y="345.3" width="7.3" height="7.3" fill="#2d5c77"/><rect x="3047.5" y="345.3" width="7.3" height="7.3" fill="#327397"/><rect x="3054.5" y="345.3" width="7.3" height="7.3" fill="#253c4c"/><rect x="3061.6" y="345.3" width="7.3" height="7.3" fill="#243948"/><rect x="3068.6" y="345.3" width="7.3" height="7.3" fill="#233746"/><rect x="3110.6" y="345.3" width="7.3" height="7.3" fill="#253c4d"/><rect x="3124.7" y="345.3" width="7.3" height="7.3" fill="#2b546c"/><rect x="3131.7" y="345.3" width="7.3" height="7.3" fill="#22303c"/><rect x="3138.7" y="345.3" width="7.3" height="7.3" fill="#223341"/><rect x="3159.7" y="345.3" width="7.3" height="7.3" fill="#233544"/><rect x="3166.7" y="345.3" width="7.3" height="7.3" fill="#284a60"/><rect x="3173.7" y="345.3" width="7.3" height="7.3" fill="#253f51"/><rect x="3187.8" y="345.3" width="7.3" height="7.3" fill="#2f6583"/><rect x="3194.8" y="345.3" width="7.3" height="7.3" fill="#22313d"/><rect x="3201.8" y="345.3" width="7.3" height="7.3" fill="#28495d"/><rect x="3208.8" y="345.3" width="7.3" height="7.3" fill="#2c5a74"/><rect x="3215.8" y="345.3" width="7.3" height="7.3" fill="#253c4d"/><rect x="3222.8" y="345.3" width="7.3" height="7.3" fill="#2d5e7a"/><rect x="3236.9" y="345.3" width="7.3" height="7.3" fill="#274659"/><rect x="3257.9" y="345.3" width="7.3" height="7.3" fill="#22323e"/><rect x="2675.9" y="352.3" width="7.3" height="7.3" fill="#2b5670"/><rect x="2682.9" y="352.3" width="7.3" height="7.3" fill="#22303c"/><rect x="2703.9" y="352.3" width="7.3" height="7.3" fill="#27475b"/><rect x="2711.0" y="352.3" width="7.3" height="7.3" fill="#243b4b"/><rect x="2718.0" y="352.3" width="7.3" height="7.3" fill="#2e6280"/><rect x="2732.0" y="352.3" width="7.3" height="7.3" fill="#22313e"/><rect x="2739.0" y="352.3" width="7.3" height="7.3" fill="#22313e"/><rect x="2753.0" y="352.3" width="7.3" height="7.3" fill="#243a4a"/><rect x="2767.1" y="352.3" width="7.3" height="7.3" fill="#22323f"/><rect x="2774.1" y="352.3" width="7.3" height="7.3" fill="#233441"/><rect x="2781.1" y="352.3" width="7.3" height="7.3" fill="#306b8c"/><rect x="2788.1" y="352.3" width="7.3" height="7.3" fill="#233442"/><rect x="2802.1" y="352.3" width="7.3" height="7.3" fill="#253e4f"/><rect x="2809.1" y="352.3" width="7.3" height="7.3" fill="#243847"/><rect x="2823.2" y="352.3" width="7.3" height="7.3" fill="#243948"/><rect x="2851.2" y="352.3" width="7.3" height="7.3" fill="#347aa0"/><rect x="2858.2" y="352.3" width="7.3" height="7.3" fill="#243a4a"/><rect x="2865.2" y="352.3" width="7.3" height="7.3" fill="#2d5e7b"/><rect x="2879.2" y="352.3" width="7.3" height="7.3" fill="#233543"/><rect x="2893.3" y="352.3" width="7.3" height="7.3" fill="#306989"/><rect x="2900.3" y="352.3" width="7.3" height="7.3" fill="#243847"/><rect x="2907.3" y="352.3" width="7.3" height="7.3" fill="#27475c"/><rect x="2921.3" y="352.3" width="7.3" height="7.3" fill="#316e8f"/><rect x="2928.3" y="352.3" width="7.3" height="7.3" fill="#233442"/><rect x="2942.4" y="352.3" width="7.3" height="7.3" fill="#233543"/><rect x="2949.4" y="352.3" width="7.3" height="7.3" fill="#306a8a"/><rect x="2963.4" y="352.3" width="7.3" height="7.3" fill="#22303c"/><rect x="2977.4" y="352.3" width="7.3" height="7.3" fill="#327397"/><rect x="2991.4" y="352.3" width="7.3" height="7.3" fill="#316d8f"/><rect x="3005.5" y="352.3" width="7.3" height="7.3" fill="#264051"/><rect x="3012.5" y="352.3" width="7.3" height="7.3" fill="#253f50"/><rect x="3019.5" y="352.3" width="7.3" height="7.3" fill="#22323f"/><rect x="3026.5" y="352.3" width="7.3" height="7.3" fill="#337498"/><rect x="3033.5" y="352.3" width="7.3" height="7.3" fill="#2b5670"/><rect x="3054.5" y="352.3" width="7.3" height="7.3" fill="#33759a"/><rect x="3096.6" y="352.3" width="7.3" height="7.3" fill="#2c5873"/><rect x="3103.6" y="352.3" width="7.3" height="7.3" fill="#316c8d"/><rect x="3110.6" y="352.3" width="7.3" height="7.3" fill="#294d64"/><rect x="3117.7" y="352.3" width="7.3" height="7.3" fill="#306a8a"/><rect x="3124.7" y="352.3" width="7.3" height="7.3" fill="#316c8e"/><rect x="3145.7" y="352.3" width="7.3" height="7.3" fill="#34789d"/><rect x="3159.7" y="352.3" width="7.3" height="7.3" fill="#2c5872"/><rect x="3166.7" y="352.3" width="7.3" height="7.3" fill="#327092"/><rect x="3173.7" y="352.3" width="7.3" height="7.3" fill="#27465a"/><rect x="3180.8" y="352.3" width="7.3" height="7.3" fill="#2f6685"/><rect x="3201.8" y="352.3" width="7.3" height="7.3" fill="#253e4f"/><rect x="3208.8" y="352.3" width="7.3" height="7.3" fill="#22323e"/><rect x="3215.8" y="352.3" width="7.3" height="7.3" fill="#22303c"/><rect x="3229.8" y="352.3" width="7.3" height="7.3" fill="#22313d"/><rect x="3236.9" y="352.3" width="7.3" height="7.3" fill="#2e617e"/><rect x="3243.9" y="352.3" width="7.3" height="7.3" fill="#27475b"/><rect x="3250.9" y="352.3" width="7.3" height="7.3" fill="#306887"/></svg>
<div class="r" style="left:3344.0px;top:287.0px;width:47.6px;height:39.0px;background:#3a3a3d;border-radius:7px"></div>
<svg width="3444" height="400"><path d="M3361.5 304 L3367.8 310 L3374 304" stroke="#c8c8cc" stroke-width="2.4" fill="none" stroke-linecap="round" stroke-linejoin="round"/></svg>
<svg width="3444" height="1400"><path d="M2799.50,390.34 A477,477 0 0 1 3266.28,805.50 L2867.31,852.36 A75.5,75.5 0 0 0 2799.50,792.06 Z" fill="#8289ff" stroke="#8289ff" stroke-width="8" stroke-linejoin="round"/><path d="M3267.73,817.81 A477,477 0 0 1 3001.99,1296.23 L2830.95,932.74 A75.5,75.5 0 0 0 2868.75,864.68 Z" fill="#235587" stroke="#235587" stroke-width="8" stroke-linejoin="round"/><path d="M2990.77,1301.51 A477,477 0 0 1 2490.18,1235.60 L2749.47,928.77 A75.5,75.5 0 0 0 2819.73,938.02 Z" fill="#84a0d4" stroke="#84a0d4" stroke-width="8" stroke-linejoin="round"/><path d="M2480.71,1227.60 A477,477 0 0 1 2321.11,934.88 L2719.48,883.14 A75.5,75.5 0 0 0 2740.00,920.77 Z" fill="#6f4799" stroke="#6f4799" stroke-width="8" stroke-linejoin="round"/><path d="M2319.51,922.58 A477,477 0 0 1 2368.88,649.60 L2723.90,837.57 A75.5,75.5 0 0 0 2717.88,870.84 Z" fill="#b09e7a" stroke="#b09e7a" stroke-width="8" stroke-linejoin="round"/><path d="M2374.68,638.64 A477,477 0 0 1 2520.08,476.30 L2745.88,808.55 A75.5,75.5 0 0 0 2729.70,826.61 Z" fill="#52525a" stroke="#52525a" stroke-width="8" stroke-linejoin="round"/><path d="M2530.34,469.33 A477,477 0 0 1 2577.16,442.08 L2755.32,802.05 Z" fill="#a39b9b" stroke="#a39b9b" stroke-width="8" stroke-linejoin="round"/><path d="M2588.28,436.61 A477,477 0 0 1 2620.46,422.72 L2763.38,797.98 Z" fill="#d0ae5a" stroke="#d0ae5a" stroke-width="8" stroke-linejoin="round"/><path d="M2632.07,418.37 A477,477 0 0 1 2658.27,409.81 L2769.84,795.54 Z" fill="#d8b4fe" stroke="#d8b4fe" stroke-width="8" stroke-linejoin="round"/><path d="M2670.20,406.46 A477,477 0 0 1 2682.15,403.43 L2774.76,794.11 Z" fill="#6fd0ef" stroke="#6fd0ef" stroke-width="8" stroke-linejoin="round"/><path d="M2694.25,400.70 A477,477 0 0 1 2707.15,398.14 L2778.64,793.24 Z" fill="#8289ff" stroke="#8289ff" stroke-width="8" stroke-linejoin="round"/><path d="M2719.38,396.06 A477,477 0 0 1 2724.24,395.33 L2781.98,792.65 Z" fill="#235587" stroke="#235587" stroke-width="8" stroke-linejoin="round"/><path d="M2732.71,390.74 A480.4,480.4 0 0 1 2740.97,389.76 L2784.83,795.70 Z" fill="#84a0d4" stroke="#84a0d4" stroke-width="1.2" stroke-linejoin="round"/><path d="M2746.54,389.18 A480.4,480.4 0 0 1 2751.90,388.69 L2786.68,795.50 Z" fill="#6f4799" stroke="#6f4799" stroke-width="1.2" stroke-linejoin="round"/><path d="M2757.48,388.24 A480.4,480.4 0 0 1 2761.18,387.98 L2788.20,795.38 Z" fill="#b09e7a" stroke="#b09e7a" stroke-width="1.2" stroke-linejoin="round"/><path d="M2766.77,387.63 A480.4,480.4 0 0 1 2768.71,387.53 L2789.46,795.30 Z" fill="#52525a" stroke="#52525a" stroke-width="1.2" stroke-linejoin="round"/><path d="M2774.31,387.28 A480.4,480.4 0 0 1 2775.16,387.24 L2790.51,795.25 Z" fill="#a39b9b" stroke="#a39b9b" stroke-width="1.2" stroke-linejoin="round"/><path d="M2780.76,387.06 A480.4,480.4 0 0 1 2782.12,387.03 L2791.52,795.22 Z" fill="#4a4236" stroke="#4a4236" stroke-width="1.2" stroke-linejoin="round"/><path d="M2787.72,386.93 A480.4,480.4 0 0 1 2790.50,386.91 L2792.67,795.20 Z" fill="#262629" stroke="#262629" stroke-width="1.2" stroke-linejoin="round"/></svg>
<svg width="3444" height="2597"><path d="M924 1495 V1507.5 M918.5 1502 L924 1507.5 L929.5 1502" stroke="#a3a3a7" stroke-width="2" fill="none" stroke-linecap="round" stroke-linejoin="round"/><rect x="914" y="1514" width="1198" height="2" fill="#48484b"/><path d="M913.90,1853.0 V1522.0 A4.0,4.0 0 0 1 921.90,1522.0 V1853.0 Z M923.85,1853.0 V1522.0 A4.0,4.0 0 0 1 931.85,1522.0 V1853.0 Z M933.80,1853.0 V1522.0 A4.0,4.0 0 0 1 941.80,1522.0 V1853.0 Z M943.75,1853.0 V1522.0 A4.0,4.0 0 0 1 951.75,1522.0 V1853.0 Z M953.70,1853.0 V1522.0 A4.0,4.0 0 0 1 961.70,1522.0 V1853.0 Z M963.65,1853.0 V1522.0 A4.0,4.0 0 0 1 971.65,1522.0 V1853.0 Z M973.60,1853.0 V1522.0 A4.0,4.0 0 0 1 981.60,1522.0 V1853.0 Z M983.55,1853.0 V1522.0 A4.0,4.0 0 0 1 991.55,1522.0 V1853.0 Z M993.50,1853.0 V1522.0 A4.0,4.0 0 0 1 1001.50,1522.0 V1853.0 Z M1003.45,1853.0 V1522.0 A4.0,4.0 0 0 1 1011.45,1522.0 V1853.0 Z M1013.40,1853.0 V1522.0 A4.0,4.0 0 0 1 1021.40,1522.0 V1853.0 Z M1023.35,1853.0 V1522.0 A4.0,4.0 0 0 1 1031.35,1522.0 V1853.0 Z M1033.30,1853.0 V1522.0 A4.0,4.0 0 0 1 1041.30,1522.0 V1853.0 Z M1043.25,1853.0 V1522.0 A4.0,4.0 0 0 1 1051.25,1522.0 V1853.0 Z M1053.20,1853.0 V1522.0 A4.0,4.0 0 0 1 1061.20,1522.0 V1853.0 Z M1063.15,1853.0 V1522.0 A4.0,4.0 0 0 1 1071.15,1522.0 V1853.0 Z M1073.10,1853.0 V1522.0 A4.0,4.0 0 0 1 1081.10,1522.0 V1853.0 Z M1083.05,1853.0 V1522.0 A4.0,4.0 0 0 1 1091.05,1522.0 V1853.0 Z M1093.00,1853.0 V1522.0 A4.0,4.0 0 0 1 1101.00,1522.0 V1853.0 Z M1102.95,1853.0 V1522.0 A4.0,4.0 0 0 1 1110.95,1522.0 V1853.0 Z M1112.90,1853.0 V1522.0 A4.0,4.0 0 0 1 1120.90,1522.0 V1853.0 Z M1122.85,1853.0 V1522.0 A4.0,4.0 0 0 1 1130.85,1522.0 V1853.0 Z M1132.80,1853.0 V1522.0 A4.0,4.0 0 0 1 1140.80,1522.0 V1853.0 Z M1142.75,1853.0 V1522.0 A4.0,4.0 0 0 1 1150.75,1522.0 V1853.0 Z M1152.70,1853.0 V1522.0 A4.0,4.0 0 0 1 1160.70,1522.0 V1853.0 Z M1162.65,1853.0 V1522.0 A4.0,4.0 0 0 1 1170.65,1522.0 V1853.0 Z M1172.60,1853.0 V1522.0 A4.0,4.0 0 0 1 1180.60,1522.0 V1853.0 Z M1182.55,1853.0 V1522.0 A4.0,4.0 0 0 1 1190.55,1522.0 V1853.0 Z M1192.50,1853.0 V1522.0 A4.0,4.0 0 0 1 1200.50,1522.0 V1853.0 Z M1202.45,1853.0 V1522.0 A4.0,4.0 0 0 1 1210.45,1522.0 V1853.0 Z M1212.40,1853.0 V1522.0 A4.0,4.0 0 0 1 1220.40,1522.0 V1853.0 Z M1222.35,1853.0 V1522.0 A4.0,4.0 0 0 1 1230.35,1522.0 V1853.0 Z M1232.30,1853.0 V1522.0 A4.0,4.0 0 0 1 1240.30,1522.0 V1853.0 Z M1242.25,1853.0 V1522.0 A4.0,4.0 0 0 1 1250.25,1522.0 V1853.0 Z M1252.20,1853.0 V1522.0 A4.0,4.0 0 0 1 1260.20,1522.0 V1853.0 Z M1262.15,1853.0 V1522.0 A4.0,4.0 0 0 1 1270.15,1522.0 V1853.0 Z M1272.10,1853.0 V1522.0 A4.0,4.0 0 0 1 1280.10,1522.0 V1853.0 Z M1282.05,1853.0 V1522.0 A4.0,4.0 0 0 1 1290.05,1522.0 V1853.0 Z M1292.00,1853.0 V1522.0 A4.0,4.0 0 0 1 1300.00,1522.0 V1853.0 Z M1301.95,1853.0 V1522.0 A4.0,4.0 0 0 1 1309.95,1522.0 V1853.0 Z M1311.90,1853.0 V1522.0 A4.0,4.0 0 0 1 1319.90,1522.0 V1853.0 Z M1321.85,1853.0 V1522.0 A4.0,4.0 0 0 1 1329.85,1522.0 V1853.0 Z M1331.80,1853.0 V1522.0 A4.0,4.0 0 0 1 1339.80,1522.0 V1853.0 Z M1341.75,1853.0 V1522.0 A4.0,4.0 0 0 1 1349.75,1522.0 V1853.0 Z M1351.70,1853.0 V1522.0 A4.0,4.0 0 0 1 1359.70,1522.0 V1853.0 Z M1361.65,1853.0 V1522.0 A4.0,4.0 0 0 1 1369.65,1522.0 V1853.0 Z M1371.60,1853.0 V1522.0 A4.0,4.0 0 0 1 1379.60,1522.0 V1853.0 Z M1381.55,1853.0 V1522.0 A4.0,4.0 0 0 1 1389.55,1522.0 V1853.0 Z M1391.50,1853.0 V1522.0 A4.0,4.0 0 0 1 1399.50,1522.0 V1853.0 Z M1401.45,1853.0 V1522.0 A4.0,4.0 0 0 1 1409.45,1522.0 V1853.0 Z M1411.40,1853.0 V1522.0 A4.0,4.0 0 0 1 1419.40,1522.0 V1853.0 Z M1421.35,1853.0 V1522.0 A4.0,4.0 0 0 1 1429.35,1522.0 V1853.0 Z M1431.30,1853.0 V1522.0 A4.0,4.0 0 0 1 1439.30,1522.0 V1853.0 Z M1441.25,1853.0 V1522.0 A4.0,4.0 0 0 1 1449.25,1522.0 V1853.0 Z M1451.20,1853.0 V1522.0 A4.0,4.0 0 0 1 1459.20,1522.0 V1853.0 Z M1461.15,1853.0 V1522.0 A4.0,4.0 0 0 1 1469.15,1522.0 V1853.0 Z M1471.10,1853.0 V1522.0 A4.0,4.0 0 0 1 1479.10,1522.0 V1853.0 Z M1481.05,1853.0 V1522.0 A4.0,4.0 0 0 1 1489.05,1522.0 V1853.0 Z M1491.00,1853.0 V1522.0 A4.0,4.0 0 0 1 1499.00,1522.0 V1853.0 Z M1500.95,1853.0 V1522.0 A4.0,4.0 0 0 1 1508.95,1522.0 V1853.0 Z M1510.90,1853.0 V1523.0 A4.0,4.0 0 0 1 1518.90,1523.0 V1853.0 Z M1520.85,1853.0 V1523.0 A4.0,4.0 0 0 1 1528.85,1523.0 V1853.0 Z M1530.80,1853.0 V1523.0 A4.0,4.0 0 0 1 1538.80,1523.0 V1853.0 Z M1540.75,1853.0 V1523.0 A4.0,4.0 0 0 1 1548.75,1523.0 V1853.0 Z M1550.70,1853.0 V1523.0 A4.0,4.0 0 0 1 1558.70,1523.0 V1853.0 Z M1560.65,1853.0 V1523.0 A4.0,4.0 0 0 1 1568.65,1523.0 V1853.0 Z M1570.60,1853.0 V1523.0 A4.0,4.0 0 0 1 1578.60,1523.0 V1853.0 Z M1580.55,1853.0 V1523.0 A4.0,4.0 0 0 1 1588.55,1523.0 V1853.0 Z M1590.50,1853.0 V1523.0 A4.0,4.0 0 0 1 1598.50,1523.0 V1853.0 Z M1600.45,1853.0 V1523.0 A4.0,4.0 0 0 1 1608.45,1523.0 V1853.0 Z M1610.40,1853.0 V1523.0 A4.0,4.0 0 0 1 1618.40,1523.0 V1853.0 Z M1620.35,1853.0 V1523.0 A4.0,4.0 0 0 1 1628.35,1523.0 V1853.0 Z M1630.30,1853.0 V1523.0 A4.0,4.0 0 0 1 1638.30,1523.0 V1853.0 Z M1640.25,1853.0 V1523.0 A4.0,4.0 0 0 1 1648.25,1523.0 V1853.0 Z M1650.20,1853.0 V1523.0 A4.0,4.0 0 0 1 1658.20,1523.0 V1853.0 Z M1660.15,1853.0 V1523.0 A4.0,4.0 0 0 1 1668.15,1523.0 V1853.0 Z M1670.10,1853.0 V1523.0 A4.0,4.0 0 0 1 1678.10,1523.0 V1853.0 Z M1680.05,1853.0 V1523.0 A4.0,4.0 0 0 1 1688.05,1523.0 V1853.0 Z M1690.00,1853.0 V1523.0 A4.0,4.0 0 0 1 1698.00,1523.0 V1853.0 Z M1699.95,1853.0 V1523.0 A4.0,4.0 0 0 1 1707.95,1523.0 V1853.0 Z M1709.90,1853.0 V1523.0 A4.0,4.0 0 0 1 1717.90,1523.0 V1853.0 Z M1719.85,1853.0 V1523.0 A4.0,4.0 0 0 1 1727.85,1523.0 V1853.0 Z M1729.80,1853.0 V1523.0 A4.0,4.0 0 0 1 1737.80,1523.0 V1853.0 Z M1739.75,1853.0 V1523.0 A4.0,4.0 0 0 1 1747.75,1523.0 V1853.0 Z M1749.70,1853.0 V1523.0 A4.0,4.0 0 0 1 1757.70,1523.0 V1853.0 Z M1759.65,1853.0 V1523.0 A4.0,4.0 0 0 1 1767.65,1523.0 V1853.0 Z M1769.60,1853.0 V1523.0 A4.0,4.0 0 0 1 1777.60,1523.0 V1853.0 Z M1779.55,1853.0 V1523.0 A4.0,4.0 0 0 1 1787.55,1523.0 V1853.0 Z M1789.50,1853.0 V1523.0 A4.0,4.0 0 0 1 1797.50,1523.0 V1853.0 Z M1799.45,1853.0 V1523.0 A4.0,4.0 0 0 1 1807.45,1523.0 V1853.0 Z M1809.40,1853.0 V1523.0 A4.0,4.0 0 0 1 1817.40,1523.0 V1853.0 Z M1819.35,1853.0 V1523.0 A4.0,4.0 0 0 1 1827.35,1523.0 V1853.0 Z M1829.30,1853.0 V1523.0 A4.0,4.0 0 0 1 1837.30,1523.0 V1853.0 Z M1839.25,1853.0 V1523.0 A4.0,4.0 0 0 1 1847.25,1523.0 V1853.0 Z M1849.20,1853.0 V1523.0 A4.0,4.0 0 0 1 1857.20,1523.0 V1853.0 Z M1859.15,1853.0 V1523.0 A4.0,4.0 0 0 1 1867.15,1523.0 V1853.0 Z M1869.10,1853.0 V1523.0 A4.0,4.0 0 0 1 1877.10,1523.0 V1853.0 Z M1879.05,1853.0 V1523.0 A4.0,4.0 0 0 1 1887.05,1523.0 V1853.0 Z M1889.00,1853.0 V1523.0 A4.0,4.0 0 0 1 1897.00,1523.0 V1853.0 Z M1898.95,1853.0 V1523.0 A4.0,4.0 0 0 1 1906.95,1523.0 V1853.0 Z M1908.90,1853.0 V1523.0 A4.0,4.0 0 0 1 1916.90,1523.0 V1853.0 Z M1918.85,1853.0 V1523.0 A4.0,4.0 0 0 1 1926.85,1523.0 V1853.0 Z M1928.80,1853.0 V1523.0 A4.0,4.0 0 0 1 1936.80,1523.0 V1853.0 Z M1938.75,1853.0 V1523.0 A4.0,4.0 0 0 1 1946.75,1523.0 V1853.0 Z M1948.70,1853.0 V1523.0 A4.0,4.0 0 0 1 1956.70,1523.0 V1853.0 Z M1958.65,1853.0 V1523.0 A4.0,4.0 0 0 1 1966.65,1523.0 V1853.0 Z M1968.60,1853.0 V1523.0 A4.0,4.0 0 0 1 1976.60,1523.0 V1853.0 Z M1978.55,1853.0 V1523.0 A4.0,4.0 0 0 1 1986.55,1523.0 V1853.0 Z M1988.50,1853.0 V1523.0 A4.0,4.0 0 0 1 1996.50,1523.0 V1853.0 Z M1998.45,1853.0 V1523.0 A4.0,4.0 0 0 1 2006.45,1523.0 V1853.0 Z M2008.40,1853.0 V1523.0 A4.0,4.0 0 0 1 2016.40,1523.0 V1853.0 Z M2018.35,1853.0 V1523.0 A4.0,4.0 0 0 1 2026.35,1523.0 V1853.0 Z M2028.30,1853.0 V1523.0 A4.0,4.0 0 0 1 2036.30,1523.0 V1853.0 Z M2038.25,1853.0 V1523.0 A4.0,4.0 0 0 1 2046.25,1523.0 V1853.0 Z M2048.20,1853.0 V1523.0 A4.0,4.0 0 0 1 2056.20,1523.0 V1853.0 Z M2058.15,1853.0 V1523.0 A4.0,4.0 0 0 1 2066.15,1523.0 V1853.0 Z M2068.10,1853.0 V1523.0 A4.0,4.0 0 0 1 2076.10,1523.0 V1853.0 Z M2078.05,1853.0 V1523.0 A4.0,4.0 0 0 1 2086.05,1523.0 V1853.0 Z M2088.00,1853.0 V1523.0 A4.0,4.0 0 0 1 2096.00,1523.0 V1853.0 Z" fill="#235587"/><path d="M913.90,1854.8 H921.90 V1984.7 A4.0,4.0 0 0 1 913.90,1984.7 Z M923.85,1854.8 H931.85 V1984.7 A4.0,4.0 0 0 1 923.85,1984.7 Z M933.80,1854.8 H941.80 V1984.7 A4.0,4.0 0 0 1 933.80,1984.7 Z M943.75,1854.8 H951.75 V1984.7 A4.0,4.0 0 0 1 943.75,1984.7 Z M953.70,1854.8 H961.70 V1984.7 A4.0,4.0 0 0 1 953.70,1984.7 Z M963.65,1854.8 H971.65 V1984.7 A4.0,4.0 0 0 1 963.65,1984.7 Z M973.60,1854.8 H981.60 V1984.7 A4.0,4.0 0 0 1 973.60,1984.7 Z M983.55,1854.8 H991.55 V1984.7 A4.0,4.0 0 0 1 983.55,1984.7 Z M993.50,1854.8 H1001.50 V1984.7 A4.0,4.0 0 0 1 993.50,1984.7 Z M1003.45,1854.8 H1011.45 V1984.7 A4.0,4.0 0 0 1 1003.45,1984.7 Z M1013.40,1854.8 H1021.40 V1984.7 A4.0,4.0 0 0 1 1013.40,1984.7 Z M1023.35,1854.8 H1031.35 V1984.7 A4.0,4.0 0 0 1 1023.35,1984.7 Z M1033.30,1854.8 H1041.30 V1984.7 A4.0,4.0 0 0 1 1033.30,1984.7 Z M1043.25,1854.8 H1051.25 V1984.7 A4.0,4.0 0 0 1 1043.25,1984.7 Z M1053.20,1854.8 H1061.20 V1984.7 A4.0,4.0 0 0 1 1053.20,1984.7 Z M1063.15,1854.8 H1071.15 V1984.7 A4.0,4.0 0 0 1 1063.15,1984.7 Z M1073.10,1854.8 H1081.10 V1984.7 A4.0,4.0 0 0 1 1073.10,1984.7 Z M1083.05,1854.8 H1091.05 V1984.7 A4.0,4.0 0 0 1 1083.05,1984.7 Z M1093.00,1854.8 H1101.00 V1984.7 A4.0,4.0 0 0 1 1093.00,1984.7 Z M1102.95,1854.8 H1110.95 V1984.7 A4.0,4.0 0 0 1 1102.95,1984.7 Z M1112.90,1854.8 H1120.90 V1984.7 A4.0,4.0 0 0 1 1112.90,1984.7 Z M1122.85,1854.8 H1130.85 V1984.7 A4.0,4.0 0 0 1 1122.85,1984.7 Z M1132.80,1854.8 H1140.80 V1984.7 A4.0,4.0 0 0 1 1132.80,1984.7 Z M1142.75,1854.8 H1150.75 V1984.7 A4.0,4.0 0 0 1 1142.75,1984.7 Z M1152.70,1854.8 H1160.70 V1984.7 A4.0,4.0 0 0 1 1152.70,1984.7 Z M1162.65,1854.8 H1170.65 V1984.7 A4.0,4.0 0 0 1 1162.65,1984.7 Z M1172.60,1854.8 H1180.60 V1984.7 A4.0,4.0 0 0 1 1172.60,1984.7 Z M1182.55,1854.8 H1190.55 V1984.7 A4.0,4.0 0 0 1 1182.55,1984.7 Z M1192.50,1854.8 H1200.50 V1984.7 A4.0,4.0 0 0 1 1192.50,1984.7 Z M1202.45,1854.8 H1210.45 V1984.7 A4.0,4.0 0 0 1 1202.45,1984.7 Z M1212.40,1854.8 H1220.40 V1984.7 A4.0,4.0 0 0 1 1212.40,1984.7 Z M1222.35,1854.8 H1230.35 V1984.7 A4.0,4.0 0 0 1 1222.35,1984.7 Z M1232.30,1854.8 H1240.30 V1984.7 A4.0,4.0 0 0 1 1232.30,1984.7 Z M1242.25,1854.8 H1250.25 V1984.7 A4.0,4.0 0 0 1 1242.25,1984.7 Z M1252.20,1854.8 H1260.20 V1984.7 A4.0,4.0 0 0 1 1252.20,1984.7 Z M1262.15,1854.8 H1270.15 V1984.7 A4.0,4.0 0 0 1 1262.15,1984.7 Z M1272.10,1854.8 H1280.10 V1984.7 A4.0,4.0 0 0 1 1272.10,1984.7 Z M1282.05,1854.8 H1290.05 V1984.7 A4.0,4.0 0 0 1 1282.05,1984.7 Z M1292.00,1854.8 H1300.00 V1984.7 A4.0,4.0 0 0 1 1292.00,1984.7 Z M1301.95,1854.8 H1309.95 V1984.7 A4.0,4.0 0 0 1 1301.95,1984.7 Z M1311.90,1854.8 H1319.90 V1984.7 A4.0,4.0 0 0 1 1311.90,1984.7 Z M1321.85,1854.8 H1329.85 V1984.7 A4.0,4.0 0 0 1 1321.85,1984.7 Z M1331.80,1854.8 H1339.80 V1984.7 A4.0,4.0 0 0 1 1331.80,1984.7 Z M1341.75,1854.8 H1349.75 V1984.7 A4.0,4.0 0 0 1 1341.75,1984.7 Z M1351.70,1854.8 H1359.70 V1984.7 A4.0,4.0 0 0 1 1351.70,1984.7 Z M1361.65,1854.8 H1369.65 V1984.7 A4.0,4.0 0 0 1 1361.65,1984.7 Z M1371.60,1854.8 H1379.60 V1984.7 A4.0,4.0 0 0 1 1371.60,1984.7 Z M1381.55,1854.8 H1389.55 V1984.7 A4.0,4.0 0 0 1 1381.55,1984.7 Z M1391.50,1854.8 H1399.50 V1984.7 A4.0,4.0 0 0 1 1391.50,1984.7 Z M1401.45,1854.8 H1409.45 V1984.7 A4.0,4.0 0 0 1 1401.45,1984.7 Z M1411.40,1854.8 H1419.40 V1984.7 A4.0,4.0 0 0 1 1411.40,1984.7 Z M1421.35,1854.8 H1429.35 V1984.7 A4.0,4.0 0 0 1 1421.35,1984.7 Z M1431.30,1854.8 H1439.30 V1984.7 A4.0,4.0 0 0 1 1431.30,1984.7 Z M1441.25,1854.8 H1449.25 V1984.7 A4.0,4.0 0 0 1 1441.25,1984.7 Z M1451.20,1854.8 H1459.20 V1984.7 A4.0,4.0 0 0 1 1451.20,1984.7 Z M1461.15,1854.8 H1469.15 V1984.7 A4.0,4.0 0 0 1 1461.15,1984.7 Z M1471.10,1854.8 H1479.10 V1984.7 A4.0,4.0 0 0 1 1471.10,1984.7 Z M1481.05,1854.8 H1489.05 V1984.7 A4.0,4.0 0 0 1 1481.05,1984.7 Z M1491.00,1854.8 H1499.00 V1984.7 A4.0,4.0 0 0 1 1491.00,1984.7 Z M1500.95,1854.8 H1508.95 V1984.7 A4.0,4.0 0 0 1 1500.95,1984.7 Z M1510.90,1854.8 H1518.90 V1984.7 A4.0,4.0 0 0 1 1510.90,1984.7 Z M1520.85,1854.8 H1528.85 V1984.7 A4.0,4.0 0 0 1 1520.85,1984.7 Z M1530.80,1854.8 H1538.80 V1984.7 A4.0,4.0 0 0 1 1530.80,1984.7 Z M1540.75,1854.8 H1548.75 V1984.7 A4.0,4.0 0 0 1 1540.75,1984.7 Z M1550.70,1854.8 H1558.70 V1984.7 A4.0,4.0 0 0 1 1550.70,1984.7 Z M1560.65,1854.8 H1568.65 V1984.7 A4.0,4.0 0 0 1 1560.65,1984.7 Z M1570.60,1854.8 H1578.60 V1984.7 A4.0,4.0 0 0 1 1570.60,1984.7 Z M1580.55,1854.8 H1588.55 V1984.7 A4.0,4.0 0 0 1 1580.55,1984.7 Z M1590.50,1854.8 H1598.50 V1984.7 A4.0,4.0 0 0 1 1590.50,1984.7 Z M1600.45,1854.8 H1608.45 V1984.7 A4.0,4.0 0 0 1 1600.45,1984.7 Z M1610.40,1854.8 H1618.40 V1984.7 A4.0,4.0 0 0 1 1610.40,1984.7 Z M1620.35,1854.8 H1628.35 V1984.7 A4.0,4.0 0 0 1 1620.35,1984.7 Z M1630.30,1854.8 H1638.30 V1984.7 A4.0,4.0 0 0 1 1630.30,1984.7 Z M1640.25,1854.8 H1648.25 V1984.7 A4.0,4.0 0 0 1 1640.25,1984.7 Z M1650.20,1854.8 H1658.20 V1984.7 A4.0,4.0 0 0 1 1650.20,1984.7 Z M1660.15,1854.8 H1668.15 V1984.7 A4.0,4.0 0 0 1 1660.15,1984.7 Z M1670.10,1854.8 H1678.10 V1984.7 A4.0,4.0 0 0 1 1670.10,1984.7 Z M1680.05,1854.8 H1688.05 V1984.7 A4.0,4.0 0 0 1 1680.05,1984.7 Z M1690.00,1854.8 H1698.00 V1984.7 A4.0,4.0 0 0 1 1690.00,1984.7 Z M1699.95,1854.8 H1707.95 V1984.7 A4.0,4.0 0 0 1 1699.95,1984.7 Z M1709.90,1854.8 H1717.90 V1984.7 A4.0,4.0 0 0 1 1709.90,1984.7 Z M1719.85,1854.8 H1727.85 V1984.7 A4.0,4.0 0 0 1 1719.85,1984.7 Z M1729.80,1854.8 H1737.80 V1984.7 A4.0,4.0 0 0 1 1729.80,1984.7 Z M1739.75,1854.8 H1747.75 V1984.7 A4.0,4.0 0 0 1 1739.75,1984.7 Z M1749.70,1854.8 H1757.70 V1984.7 A4.0,4.0 0 0 1 1749.70,1984.7 Z M1759.65,1854.8 H1767.65 V1984.7 A4.0,4.0 0 0 1 1759.65,1984.7 Z M1769.60,1854.8 H1777.60 V1984.7 A4.0,4.0 0 0 1 1769.60,1984.7 Z M1779.55,1854.8 H1787.55 V1984.7 A4.0,4.0 0 0 1 1779.55,1984.7 Z M1789.50,1854.8 H1797.50 V1984.7 A4.0,4.0 0 0 1 1789.50,1984.7 Z M1799.45,1854.8 H1807.45 V1984.7 A4.0,4.0 0 0 1 1799.45,1984.7 Z M1809.40,1854.8 H1817.40 V1984.7 A4.0,4.0 0 0 1 1809.40,1984.7 Z M1819.35,1854.8 H1827.35 V1984.7 A4.0,4.0 0 0 1 1819.35,1984.7 Z M1829.30,1854.8 H1837.30 V1984.7 A4.0,4.0 0 0 1 1829.30,1984.7 Z M1839.25,1854.8 H1847.25 V1984.7 A4.0,4.0 0 0 1 1839.25,1984.7 Z M1849.20,1854.8 H1857.20 V1984.7 A4.0,4.0 0 0 1 1849.20,1984.7 Z M1859.15,1854.8 H1867.15 V1984.7 A4.0,4.0 0 0 1 1859.15,1984.7 Z M1869.10,1854.8 H1877.10 V1984.7 A4.0,4.0 0 0 1 1869.10,1984.7 Z M1879.05,1854.8 H1887.05 V1984.7 A4.0,4.0 0 0 1 1879.05,1984.7 Z M1889.00,1854.8 H1897.00 V1984.7 A4.0,4.0 0 0 1 1889.00,1984.7 Z M1898.95,1854.8 H1906.95 V1984.7 A4.0,4.0 0 0 1 1898.95,1984.7 Z M1908.90,1854.8 H1916.90 V1984.7 A4.0,4.0 0 0 1 1908.90,1984.7 Z M1918.85,1854.8 H1926.85 V1984.7 A4.0,4.0 0 0 1 1918.85,1984.7 Z M1928.80,1854.8 H1936.80 V1984.7 A4.0,4.0 0 0 1 1928.80,1984.7 Z M1938.75,1854.8 H1946.75 V1984.7 A4.0,4.0 0 0 1 1938.75,1984.7 Z M1948.70,1854.8 H1956.70 V1984.7 A4.0,4.0 0 0 1 1948.70,1984.7 Z M1958.65,1854.8 H1966.65 V1984.7 A4.0,4.0 0 0 1 1958.65,1984.7 Z M1968.60,1854.8 H1976.60 V1984.7 A4.0,4.0 0 0 1 1968.60,1984.7 Z M1978.55,1854.8 H1986.55 V1984.7 A4.0,4.0 0 0 1 1978.55,1984.7 Z M1988.50,1854.8 H1996.50 V1984.7 A4.0,4.0 0 0 1 1988.50,1984.7 Z M1998.45,1854.8 H2006.45 V1984.7 A4.0,4.0 0 0 1 1998.45,1984.7 Z M2008.40,1854.8 H2016.40 V1984.7 A4.0,4.0 0 0 1 2008.40,1984.7 Z M2018.35,1854.8 H2026.35 V1984.7 A4.0,4.0 0 0 1 2018.35,1984.7 Z M2028.30,1854.8 H2036.30 V1984.7 A4.0,4.0 0 0 1 2028.30,1984.7 Z M2038.25,1854.8 H2046.25 V1984.7 A4.0,4.0 0 0 1 2038.25,1984.7 Z M2048.20,1854.8 H2056.20 V1984.7 A4.0,4.0 0 0 1 2048.20,1984.7 Z M2058.15,1854.8 H2066.15 V1984.7 A4.0,4.0 0 0 1 2058.15,1984.7 Z M2068.10,1854.8 H2076.10 V1984.7 A4.0,4.0 0 0 1 2068.10,1984.7 Z M2078.05,1854.8 H2086.05 V1984.7 A4.0,4.0 0 0 1 2078.05,1984.7 Z M2088.00,1854.8 H2096.00 V1984.7 A4.0,4.0 0 0 1 2088.00,1984.7 Z" fill="#8289ff"/><rect x="914" y="1992.5" width="1198" height="1.6" fill="#3a3a3d"/><rect x="913.7" y="1993" width="1.6" height="12" fill="#3a3a3d"/><rect x="1162.4" y="1993" width="1.6" height="12" fill="#3a3a3d"/><rect x="1411.1" y="1993" width="1.6" height="12" fill="#3a3a3d"/><rect x="1659.8" y="1993" width="1.6" height="12" fill="#3a3a3d"/><rect x="882" y="2042.5" width="1262" height="2" fill="#1e1e21"/><rect x="1034.6" y="2070.4" width="385" height="45" rx="10" fill="#18181b" stroke="#444447" stroke-width="2"/><circle cx="1066" cy="2091" r="10" stroke="#8a8a8e" stroke-width="2.4" fill="none"/><path d="M1073.5 2098.5 L1079.5 2104.5" stroke="#8a8a8e" stroke-width="2.4" stroke-linecap="round"/><rect x="882" y="2141.5" width="1262" height="1.6" fill="#333336"/><rect x="882" y="2143" width="1262" height="60" fill="#1e1e21"/><rect x="882" y="2203" width="1262" height="1.8" fill="#38383b"/><rect x="882" y="2204.8" width="1262" height="2.4" fill="#1b1b1e"/><rect x="914.2" y="2163.3" width="23.7" height="23.5" rx="6" fill="#3a3a3d"/><rect x="914.2" y="2217.2" width="23.7" height="23.6" rx="6" fill="#8289ff"/><rect x="914.2" y="2263" width="23.7" height="23.7" rx="6" fill="#235587"/><rect x="882" y="2253.5" width="1262" height="1.8" fill="#1b1b1e"/><rect x="882" y="2298.6" width="1262" height="1.8" fill="#1b1b1e"/></svg>
<div class="t" style="left:945.0px;top:1489.7px;font-size:21.7px;color:#a3a3a7;font-weight:400;font-family:'Liberation Sans', sans-serif;">38 GB max</div>
<div class="t" style="left:920.5px;top:2003.2px;font-size:21px;color:#a3a3a7;font-weight:400;font-family:'Liberation Sans', sans-serif;">12:04:10</div>
<div class="t" style="left:1169.2px;top:2003.2px;font-size:21px;color:#a3a3a7;font-weight:400;font-family:'Liberation Sans', sans-serif;">12:10:25</div>
<div class="t" style="left:1417.9px;top:2003.2px;font-size:21px;color:#a3a3a7;font-weight:400;font-family:'Liberation Sans', sans-serif;">12:16:40</div>
<div class="t" style="left:1666.6px;top:2003.2px;font-size:21px;color:#a3a3a7;font-weight:400;font-family:'Liberation Sans', sans-serif;">12:22:55</div>
<div class="t" style="left:914.5px;top:2080.7px;font-size:24px;color:#f2f2f3;font-weight:700;font-family:'Liberation Sans', sans-serif;">Legend</div>
<div class="t" style="left:955.0px;top:2162.7px;font-size:24px;color:#b8b8bc;font-weight:400;font-family:'Liberation Mono', monospace;">kafka_id</div>
<svg width="3444" height="2597"><path d="M2204 1495 V1507.5 M2198.5 1502 L2204 1507.5 L2209.5 1502" stroke="#a3a3a7" stroke-width="2" fill="none" stroke-linecap="round" stroke-linejoin="round"/><rect x="2194" y="1514" width="1198" height="2" fill="#48484b"/><path d="M2193.90,1978.8 V1522.0 A4.0,4.0 0 0 1 2201.90,1522.0 V1978.8 Z M2203.85,1978.8 V1522.0 A4.0,4.0 0 0 1 2211.85,1522.0 V1978.8 Z M2213.80,1978.8 V1522.0 A4.0,4.0 0 0 1 2221.80,1522.0 V1978.8 Z M2223.75,1978.8 V1522.0 A4.0,4.0 0 0 1 2231.75,1522.0 V1978.8 Z M2233.70,1978.8 V1522.0 A4.0,4.0 0 0 1 2241.70,1522.0 V1978.8 Z M2243.65,1978.8 V1522.0 A4.0,4.0 0 0 1 2251.65,1522.0 V1978.8 Z M2253.60,1978.8 V1522.0 A4.0,4.0 0 0 1 2261.60,1522.0 V1978.8 Z M2263.55,1978.8 V1522.0 A4.0,4.0 0 0 1 2271.55,1522.0 V1978.8 Z M2273.50,1978.8 V1522.0 A4.0,4.0 0 0 1 2281.50,1522.0 V1978.8 Z M2283.45,1978.8 V1522.0 A4.0,4.0 0 0 1 2291.45,1522.0 V1978.8 Z M2293.40,1978.8 V1522.0 A4.0,4.0 0 0 1 2301.40,1522.0 V1978.8 Z M2303.35,1978.8 V1522.0 A4.0,4.0 0 0 1 2311.35,1522.0 V1978.8 Z M2313.30,1978.8 V1522.0 A4.0,4.0 0 0 1 2321.30,1522.0 V1978.8 Z M2323.25,1978.8 V1522.0 A4.0,4.0 0 0 1 2331.25,1522.0 V1978.8 Z M2333.20,1978.8 V1522.0 A4.0,4.0 0 0 1 2341.20,1522.0 V1978.8 Z M2343.15,1978.8 V1522.0 A4.0,4.0 0 0 1 2351.15,1522.0 V1978.8 Z M2353.10,1978.8 V1522.0 A4.0,4.0 0 0 1 2361.10,1522.0 V1978.8 Z M2363.05,1978.8 V1522.0 A4.0,4.0 0 0 1 2371.05,1522.0 V1978.8 Z M2373.00,1978.8 V1522.0 A4.0,4.0 0 0 1 2381.00,1522.0 V1978.8 Z M2382.95,1978.8 V1522.0 A4.0,4.0 0 0 1 2390.95,1522.0 V1978.8 Z M2392.90,1978.8 V1522.0 A4.0,4.0 0 0 1 2400.90,1522.0 V1978.8 Z M2402.85,1978.8 V1522.0 A4.0,4.0 0 0 1 2410.85,1522.0 V1978.8 Z M2412.80,1978.8 V1522.0 A4.0,4.0 0 0 1 2420.80,1522.0 V1978.8 Z M2422.75,1978.8 V1522.0 A4.0,4.0 0 0 1 2430.75,1522.0 V1978.8 Z M2432.70,1978.8 V1522.0 A4.0,4.0 0 0 1 2440.70,1522.0 V1978.8 Z M2442.65,1978.8 V1522.0 A4.0,4.0 0 0 1 2450.65,1522.0 V1978.8 Z M2452.60,1978.8 V1522.0 A4.0,4.0 0 0 1 2460.60,1522.0 V1978.8 Z M2462.55,1978.8 V1522.0 A4.0,4.0 0 0 1 2470.55,1522.0 V1978.8 Z M2472.50,1978.8 V1522.0 A4.0,4.0 0 0 1 2480.50,1522.0 V1978.8 Z M2482.45,1978.8 V1522.0 A4.0,4.0 0 0 1 2490.45,1522.0 V1978.8 Z M2492.40,1978.8 V1522.0 A4.0,4.0 0 0 1 2500.40,1522.0 V1978.8 Z M2502.35,1978.8 V1522.0 A4.0,4.0 0 0 1 2510.35,1522.0 V1978.8 Z M2512.30,1978.8 V1522.0 A4.0,4.0 0 0 1 2520.30,1522.0 V1978.8 Z M2522.25,1978.8 V1522.0 A4.0,4.0 0 0 1 2530.25,1522.0 V1978.8 Z M2532.20,1978.8 V1522.0 A4.0,4.0 0 0 1 2540.20,1522.0 V1978.8 Z M2542.15,1978.8 V1522.0 A4.0,4.0 0 0 1 2550.15,1522.0 V1978.8 Z M2552.10,1978.8 V1522.0 A4.0,4.0 0 0 1 2560.10,1522.0 V1978.8 Z M2562.05,1978.8 V1522.0 A4.0,4.0 0 0 1 2570.05,1522.0 V1978.8 Z M2572.00,1978.8 V1522.0 A4.0,4.0 0 0 1 2580.00,1522.0 V1978.8 Z M2581.95,1978.8 V1522.0 A4.0,4.0 0 0 1 2589.95,1522.0 V1978.8 Z M2591.90,1978.8 V1522.0 A4.0,4.0 0 0 1 2599.90,1522.0 V1978.8 Z M2601.85,1978.8 V1522.0 A4.0,4.0 0 0 1 2609.85,1522.0 V1978.8 Z M2611.80,1978.8 V1522.0 A4.0,4.0 0 0 1 2619.80,1522.0 V1978.8 Z M2621.75,1978.8 V1522.0 A4.0,4.0 0 0 1 2629.75,1522.0 V1978.8 Z M2631.70,1978.8 V1522.0 A4.0,4.0 0 0 1 2639.70,1522.0 V1978.8 Z M2641.65,1978.8 V1522.0 A4.0,4.0 0 0 1 2649.65,1522.0 V1978.8 Z M2651.60,1978.8 V1522.0 A4.0,4.0 0 0 1 2659.60,1522.0 V1978.8 Z M2661.55,1978.8 V1522.0 A4.0,4.0 0 0 1 2669.55,1522.0 V1978.8 Z M2671.50,1978.8 V1522.0 A4.0,4.0 0 0 1 2679.50,1522.0 V1978.8 Z M2681.45,1978.8 V1522.0 A4.0,4.0 0 0 1 2689.45,1522.0 V1978.8 Z M2691.40,1978.8 V1522.0 A4.0,4.0 0 0 1 2699.40,1522.0 V1978.8 Z M2701.35,1978.8 V1522.0 A4.0,4.0 0 0 1 2709.35,1522.0 V1978.8 Z M2711.30,1978.8 V1522.0 A4.0,4.0 0 0 1 2719.30,1522.0 V1978.8 Z M2721.25,1978.8 V1522.0 A4.0,4.0 0 0 1 2729.25,1522.0 V1978.8 Z M2731.20,1978.8 V1522.0 A4.0,4.0 0 0 1 2739.20,1522.0 V1978.8 Z M2741.15,1978.8 V1522.0 A4.0,4.0 0 0 1 2749.15,1522.0 V1978.8 Z M2751.10,1978.8 V1522.0 A4.0,4.0 0 0 1 2759.10,1522.0 V1978.8 Z M2761.05,1978.8 V1522.0 A4.0,4.0 0 0 1 2769.05,1522.0 V1978.8 Z M2771.00,1978.8 V1522.0 A4.0,4.0 0 0 1 2779.00,1522.0 V1978.8 Z M2780.95,1978.8 V1522.0 A4.0,4.0 0 0 1 2788.95,1522.0 V1978.8 Z M2790.90,1978.8 V1523.0 A4.0,4.0 0 0 1 2798.90,1523.0 V1978.8 Z M2800.85,1978.8 V1523.0 A4.0,4.0 0 0 1 2808.85,1523.0 V1978.8 Z M2810.80,1978.8 V1523.0 A4.0,4.0 0 0 1 2818.80,1523.0 V1978.8 Z M2820.75,1978.8 V1523.0 A4.0,4.0 0 0 1 2828.75,1523.0 V1978.8 Z M2830.70,1978.8 V1523.0 A4.0,4.0 0 0 1 2838.70,1523.0 V1978.8 Z M2840.65,1978.8 V1523.0 A4.0,4.0 0 0 1 2848.65,1523.0 V1978.8 Z M2850.60,1978.8 V1523.0 A4.0,4.0 0 0 1 2858.60,1523.0 V1978.8 Z M2860.55,1978.8 V1523.0 A4.0,4.0 0 0 1 2868.55,1523.0 V1978.8 Z M2870.50,1978.8 V1523.0 A4.0,4.0 0 0 1 2878.50,1523.0 V1978.8 Z M2880.45,1978.8 V1523.0 A4.0,4.0 0 0 1 2888.45,1523.0 V1978.8 Z M2890.40,1978.8 V1523.0 A4.0,4.0 0 0 1 2898.40,1523.0 V1978.8 Z M2900.35,1978.8 V1523.0 A4.0,4.0 0 0 1 2908.35,1523.0 V1978.8 Z M2910.30,1978.8 V1523.0 A4.0,4.0 0 0 1 2918.30,1523.0 V1978.8 Z M2920.25,1978.8 V1523.0 A4.0,4.0 0 0 1 2928.25,1523.0 V1978.8 Z M2930.20,1978.8 V1523.0 A4.0,4.0 0 0 1 2938.20,1523.0 V1978.8 Z M2940.15,1978.8 V1523.0 A4.0,4.0 0 0 1 2948.15,1523.0 V1978.8 Z M2950.10,1978.8 V1523.0 A4.0,4.0 0 0 1 2958.10,1523.0 V1978.8 Z M2960.05,1978.8 V1523.0 A4.0,4.0 0 0 1 2968.05,1523.0 V1978.8 Z M2970.00,1978.8 V1523.0 A4.0,4.0 0 0 1 2978.00,1523.0 V1978.8 Z M2979.95,1978.8 V1523.0 A4.0,4.0 0 0 1 2987.95,1523.0 V1978.8 Z M2989.90,1978.8 V1523.0 A4.0,4.0 0 0 1 2997.90,1523.0 V1978.8 Z M2999.85,1978.8 V1523.0 A4.0,4.0 0 0 1 3007.85,1523.0 V1978.8 Z M3009.80,1978.8 V1523.0 A4.0,4.0 0 0 1 3017.80,1523.0 V1978.8 Z M3019.75,1978.8 V1523.0 A4.0,4.0 0 0 1 3027.75,1523.0 V1978.8 Z M3029.70,1978.8 V1523.0 A4.0,4.0 0 0 1 3037.70,1523.0 V1978.8 Z M3039.65,1978.8 V1523.0 A4.0,4.0 0 0 1 3047.65,1523.0 V1978.8 Z M3049.60,1978.8 V1523.0 A4.0,4.0 0 0 1 3057.60,1523.0 V1978.8 Z M3059.55,1978.8 V1523.0 A4.0,4.0 0 0 1 3067.55,1523.0 V1978.8 Z M3069.50,1978.8 V1523.0 A4.0,4.0 0 0 1 3077.50,1523.0 V1978.8 Z M3079.45,1978.8 V1523.0 A4.0,4.0 0 0 1 3087.45,1523.0 V1978.8 Z M3089.40,1978.8 V1523.0 A4.0,4.0 0 0 1 3097.40,1523.0 V1978.8 Z M3099.35,1978.8 V1523.0 A4.0,4.0 0 0 1 3107.35,1523.0 V1978.8 Z M3109.30,1978.8 V1523.0 A4.0,4.0 0 0 1 3117.30,1523.0 V1978.8 Z M3119.25,1978.8 V1523.0 A4.0,4.0 0 0 1 3127.25,1523.0 V1978.8 Z M3129.20,1978.8 V1523.0 A4.0,4.0 0 0 1 3137.20,1523.0 V1978.8 Z M3139.15,1978.8 V1523.0 A4.0,4.0 0 0 1 3147.15,1523.0 V1978.8 Z M3149.10,1978.8 V1523.0 A4.0,4.0 0 0 1 3157.10,1523.0 V1978.8 Z M3159.05,1978.8 V1523.0 A4.0,4.0 0 0 1 3167.05,1523.0 V1978.8 Z M3169.00,1978.8 V1523.0 A4.0,4.0 0 0 1 3177.00,1523.0 V1978.8 Z M3178.95,1978.8 V1523.0 A4.0,4.0 0 0 1 3186.95,1523.0 V1978.8 Z M3188.90,1978.8 V1523.0 A4.0,4.0 0 0 1 3196.90,1523.0 V1978.8 Z M3198.85,1978.8 V1523.0 A4.0,4.0 0 0 1 3206.85,1523.0 V1978.8 Z M3208.80,1978.8 V1523.0 A4.0,4.0 0 0 1 3216.80,1523.0 V1978.8 Z M3218.75,1978.8 V1523.0 A4.0,4.0 0 0 1 3226.75,1523.0 V1978.8 Z M3228.70,1978.8 V1523.0 A4.0,4.0 0 0 1 3236.70,1523.0 V1978.8 Z M3238.65,1978.8 V1523.0 A4.0,4.0 0 0 1 3246.65,1523.0 V1978.8 Z M3248.60,1978.8 V1523.0 A4.0,4.0 0 0 1 3256.60,1523.0 V1978.8 Z M3258.55,1978.8 V1523.0 A4.0,4.0 0 0 1 3266.55,1523.0 V1978.8 Z M3268.50,1978.8 V1523.0 A4.0,4.0 0 0 1 3276.50,1523.0 V1978.8 Z M3278.45,1978.8 V1523.0 A4.0,4.0 0 0 1 3286.45,1523.0 V1978.8 Z M3288.40,1978.8 V1523.0 A4.0,4.0 0 0 1 3296.40,1523.0 V1978.8 Z M3298.35,1978.8 V1523.0 A4.0,4.0 0 0 1 3306.35,1523.0 V1978.8 Z M3308.30,1978.8 V1523.0 A4.0,4.0 0 0 1 3316.30,1523.0 V1978.8 Z M3318.25,1978.8 V1523.0 A4.0,4.0 0 0 1 3326.25,1523.0 V1978.8 Z M3328.20,1978.8 V1523.0 A4.0,4.0 0 0 1 3336.20,1523.0 V1978.8 Z M3338.15,1978.8 V1523.0 A4.0,4.0 0 0 1 3346.15,1523.0 V1978.8 Z M3348.10,1978.8 V1523.0 A4.0,4.0 0 0 1 3356.10,1523.0 V1978.8 Z M3358.05,1978.8 V1523.0 A4.0,4.0 0 0 1 3366.05,1523.0 V1978.8 Z M3368.00,1978.8 V1523.0 A4.0,4.0 0 0 1 3376.00,1523.0 V1978.8 Z" fill="#235587"/><path d="M2193.90,1980.6 H2201.90 V1984.7 A4.0,4.0 0 0 1 2193.90,1984.7 Z M2203.85,1980.6 H2211.85 V1984.7 A4.0,4.0 0 0 1 2203.85,1984.7 Z M2213.80,1980.6 H2221.80 V1984.7 A4.0,4.0 0 0 1 2213.80,1984.7 Z M2223.75,1980.6 H2231.75 V1984.7 A4.0,4.0 0 0 1 2223.75,1984.7 Z M2233.70,1980.6 H2241.70 V1984.7 A4.0,4.0 0 0 1 2233.70,1984.7 Z M2243.65,1980.6 H2251.65 V1984.7 A4.0,4.0 0 0 1 2243.65,1984.7 Z M2253.60,1980.6 H2261.60 V1984.7 A4.0,4.0 0 0 1 2253.60,1984.7 Z M2263.55,1980.6 H2271.55 V1984.7 A4.0,4.0 0 0 1 2263.55,1984.7 Z M2273.50,1980.6 H2281.50 V1984.7 A4.0,4.0 0 0 1 2273.50,1984.7 Z M2283.45,1980.6 H2291.45 V1984.7 A4.0,4.0 0 0 1 2283.45,1984.7 Z M2293.40,1980.6 H2301.40 V1984.7 A4.0,4.0 0 0 1 2293.40,1984.7 Z M2303.35,1980.6 H2311.35 V1984.7 A4.0,4.0 0 0 1 2303.35,1984.7 Z M2313.30,1980.6 H2321.30 V1984.7 A4.0,4.0 0 0 1 2313.30,1984.7 Z M2323.25,1980.6 H2331.25 V1984.7 A4.0,4.0 0 0 1 2323.25,1984.7 Z M2333.20,1980.6 H2341.20 V1984.7 A4.0,4.0 0 0 1 2333.20,1984.7 Z M2343.15,1980.6 H2351.15 V1984.7 A4.0,4.0 0 0 1 2343.15,1984.7 Z M2353.10,1980.6 H2361.10 V1984.7 A4.0,4.0 0 0 1 2353.10,1984.7 Z M2363.05,1980.6 H2371.05 V1984.7 A4.0,4.0 0 0 1 2363.05,1984.7 Z M2373.00,1980.6 H2381.00 V1984.7 A4.0,4.0 0 0 1 2373.00,1984.7 Z M2382.95,1980.6 H2390.95 V1984.7 A4.0,4.0 0 0 1 2382.95,1984.7 Z M2392.90,1980.6 H2400.90 V1984.7 A4.0,4.0 0 0 1 2392.90,1984.7 Z M2402.85,1980.6 H2410.85 V1984.7 A4.0,4.0 0 0 1 2402.85,1984.7 Z M2412.80,1980.6 H2420.80 V1984.7 A4.0,4.0 0 0 1 2412.80,1984.7 Z M2422.75,1980.6 H2430.75 V1984.7 A4.0,4.0 0 0 1 2422.75,1984.7 Z M2432.70,1980.6 H2440.70 V1984.7 A4.0,4.0 0 0 1 2432.70,1984.7 Z M2442.65,1980.6 H2450.65 V1984.7 A4.0,4.0 0 0 1 2442.65,1984.7 Z M2452.60,1980.6 H2460.60 V1984.7 A4.0,4.0 0 0 1 2452.60,1984.7 Z M2462.55,1980.6 H2470.55 V1984.7 A4.0,4.0 0 0 1 2462.55,1984.7 Z M2472.50,1980.6 H2480.50 V1984.7 A4.0,4.0 0 0 1 2472.50,1984.7 Z M2482.45,1980.6 H2490.45 V1984.7 A4.0,4.0 0 0 1 2482.45,1984.7 Z M2492.40,1980.6 H2500.40 V1984.7 A4.0,4.0 0 0 1 2492.40,1984.7 Z M2502.35,1980.6 H2510.35 V1984.7 A4.0,4.0 0 0 1 2502.35,1984.7 Z M2512.30,1980.6 H2520.30 V1984.7 A4.0,4.0 0 0 1 2512.30,1984.7 Z M2522.25,1980.6 H2530.25 V1984.7 A4.0,4.0 0 0 1 2522.25,1984.7 Z M2532.20,1980.6 H2540.20 V1984.7 A4.0,4.0 0 0 1 2532.20,1984.7 Z M2542.15,1980.6 H2550.15 V1984.7 A4.0,4.0 0 0 1 2542.15,1984.7 Z M2552.10,1980.6 H2560.10 V1984.7 A4.0,4.0 0 0 1 2552.10,1984.7 Z M2562.05,1980.6 H2570.05 V1984.7 A4.0,4.0 0 0 1 2562.05,1984.7 Z M2572.00,1980.6 H2580.00 V1984.7 A4.0,4.0 0 0 1 2572.00,1984.7 Z M2581.95,1980.6 H2589.95 V1984.7 A4.0,4.0 0 0 1 2581.95,1984.7 Z M2591.90,1980.6 H2599.90 V1984.7 A4.0,4.0 0 0 1 2591.90,1984.7 Z M2601.85,1980.6 H2609.85 V1984.7 A4.0,4.0 0 0 1 2601.85,1984.7 Z M2611.80,1980.6 H2619.80 V1984.7 A4.0,4.0 0 0 1 2611.80,1984.7 Z M2621.75,1980.6 H2629.75 V1984.7 A4.0,4.0 0 0 1 2621.75,1984.7 Z M2631.70,1980.6 H2639.70 V1984.7 A4.0,4.0 0 0 1 2631.70,1984.7 Z M2641.65,1980.6 H2649.65 V1984.7 A4.0,4.0 0 0 1 2641.65,1984.7 Z M2651.60,1980.6 H2659.60 V1984.7 A4.0,4.0 0 0 1 2651.60,1984.7 Z M2661.55,1980.6 H2669.55 V1984.7 A4.0,4.0 0 0 1 2661.55,1984.7 Z M2671.50,1980.6 H2679.50 V1984.7 A4.0,4.0 0 0 1 2671.50,1984.7 Z M2681.45,1980.6 H2689.45 V1984.7 A4.0,4.0 0 0 1 2681.45,1984.7 Z M2691.40,1980.6 H2699.40 V1984.7 A4.0,4.0 0 0 1 2691.40,1984.7 Z M2701.35,1980.6 H2709.35 V1984.7 A4.0,4.0 0 0 1 2701.35,1984.7 Z M2711.30,1980.6 H2719.30 V1984.7 A4.0,4.0 0 0 1 2711.30,1984.7 Z M2721.25,1980.6 H2729.25 V1984.7 A4.0,4.0 0 0 1 2721.25,1984.7 Z M2731.20,1980.6 H2739.20 V1984.7 A4.0,4.0 0 0 1 2731.20,1984.7 Z M2741.15,1980.6 H2749.15 V1984.7 A4.0,4.0 0 0 1 2741.15,1984.7 Z M2751.10,1980.6 H2759.10 V1984.7 A4.0,4.0 0 0 1 2751.10,1984.7 Z M2761.05,1980.6 H2769.05 V1984.7 A4.0,4.0 0 0 1 2761.05,1984.7 Z M2771.00,1980.6 H2779.00 V1984.7 A4.0,4.0 0 0 1 2771.00,1984.7 Z M2780.95,1980.6 H2788.95 V1984.7 A4.0,4.0 0 0 1 2780.95,1984.7 Z M2790.90,1980.6 H2798.90 V1984.7 A4.0,4.0 0 0 1 2790.90,1984.7 Z M2800.85,1980.6 H2808.85 V1984.7 A4.0,4.0 0 0 1 2800.85,1984.7 Z M2810.80,1980.6 H2818.80 V1984.7 A4.0,4.0 0 0 1 2810.80,1984.7 Z M2820.75,1980.6 H2828.75 V1984.7 A4.0,4.0 0 0 1 2820.75,1984.7 Z M2830.70,1980.6 H2838.70 V1984.7 A4.0,4.0 0 0 1 2830.70,1984.7 Z M2840.65,1980.6 H2848.65 V1984.7 A4.0,4.0 0 0 1 2840.65,1984.7 Z M2850.60,1980.6 H2858.60 V1984.7 A4.0,4.0 0 0 1 2850.60,1984.7 Z M2860.55,1980.6 H2868.55 V1984.7 A4.0,4.0 0 0 1 2860.55,1984.7 Z M2870.50,1980.6 H2878.50 V1984.7 A4.0,4.0 0 0 1 2870.50,1984.7 Z M2880.45,1980.6 H2888.45 V1984.7 A4.0,4.0 0 0 1 2880.45,1984.7 Z M2890.40,1980.6 H2898.40 V1984.7 A4.0,4.0 0 0 1 2890.40,1984.7 Z M2900.35,1980.6 H2908.35 V1984.7 A4.0,4.0 0 0 1 2900.35,1984.7 Z M2910.30,1980.6 H2918.30 V1984.7 A4.0,4.0 0 0 1 2910.30,1984.7 Z M2920.25,1980.6 H2928.25 V1984.7 A4.0,4.0 0 0 1 2920.25,1984.7 Z M2930.20,1980.6 H2938.20 V1984.7 A4.0,4.0 0 0 1 2930.20,1984.7 Z M2940.15,1980.6 H2948.15 V1984.7 A4.0,4.0 0 0 1 2940.15,1984.7 Z M2950.10,1980.6 H2958.10 V1984.7 A4.0,4.0 0 0 1 2950.10,1984.7 Z M2960.05,1980.6 H2968.05 V1984.7 A4.0,4.0 0 0 1 2960.05,1984.7 Z M2970.00,1980.6 H2978.00 V1984.7 A4.0,4.0 0 0 1 2970.00,1984.7 Z M2979.95,1980.6 H2987.95 V1984.7 A4.0,4.0 0 0 1 2979.95,1984.7 Z M2989.90,1980.6 H2997.90 V1984.7 A4.0,4.0 0 0 1 2989.90,1984.7 Z M2999.85,1980.6 H3007.85 V1984.7 A4.0,4.0 0 0 1 2999.85,1984.7 Z M3009.80,1980.6 H3017.80 V1984.7 A4.0,4.0 0 0 1 3009.80,1984.7 Z M3019.75,1980.6 H3027.75 V1984.7 A4.0,4.0 0 0 1 3019.75,1984.7 Z M3029.70,1980.6 H3037.70 V1984.7 A4.0,4.0 0 0 1 3029.70,1984.7 Z M3039.65,1980.6 H3047.65 V1984.7 A4.0,4.0 0 0 1 3039.65,1984.7 Z M3049.60,1980.6 H3057.60 V1984.7 A4.0,4.0 0 0 1 3049.60,1984.7 Z M3059.55,1980.6 H3067.55 V1984.7 A4.0,4.0 0 0 1 3059.55,1984.7 Z M3069.50,1980.6 H3077.50 V1984.7 A4.0,4.0 0 0 1 3069.50,1984.7 Z M3079.45,1980.6 H3087.45 V1984.7 A4.0,4.0 0 0 1 3079.45,1984.7 Z M3089.40,1980.6 H3097.40 V1984.7 A4.0,4.0 0 0 1 3089.40,1984.7 Z M3099.35,1980.6 H3107.35 V1984.7 A4.0,4.0 0 0 1 3099.35,1984.7 Z M3109.30,1980.6 H3117.30 V1984.7 A4.0,4.0 0 0 1 3109.30,1984.7 Z M3119.25,1980.6 H3127.25 V1984.7 A4.0,4.0 0 0 1 3119.25,1984.7 Z M3129.20,1980.6 H3137.20 V1984.7 A4.0,4.0 0 0 1 3129.20,1984.7 Z M3139.15,1980.6 H3147.15 V1984.7 A4.0,4.0 0 0 1 3139.15,1984.7 Z M3149.10,1980.6 H3157.10 V1984.7 A4.0,4.0 0 0 1 3149.10,1984.7 Z M3159.05,1980.6 H3167.05 V1984.7 A4.0,4.0 0 0 1 3159.05,1984.7 Z M3169.00,1980.6 H3177.00 V1984.7 A4.0,4.0 0 0 1 3169.00,1984.7 Z M3178.95,1980.6 H3186.95 V1984.7 A4.0,4.0 0 0 1 3178.95,1984.7 Z M3188.90,1980.6 H3196.90 V1984.7 A4.0,4.0 0 0 1 3188.90,1984.7 Z M3198.85,1980.6 H3206.85 V1984.7 A4.0,4.0 0 0 1 3198.85,1984.7 Z M3208.80,1980.6 H3216.80 V1984.7 A4.0,4.0 0 0 1 3208.80,1984.7 Z M3218.75,1980.6 H3226.75 V1984.7 A4.0,4.0 0 0 1 3218.75,1984.7 Z M3228.70,1980.6 H3236.70 V1984.7 A4.0,4.0 0 0 1 3228.70,1984.7 Z M3238.65,1980.6 H3246.65 V1984.7 A4.0,4.0 0 0 1 3238.65,1984.7 Z M3248.60,1980.6 H3256.60 V1984.7 A4.0,4.0 0 0 1 3248.60,1984.7 Z M3258.55,1980.6 H3266.55 V1984.7 A4.0,4.0 0 0 1 3258.55,1984.7 Z M3268.50,1980.6 H3276.50 V1984.7 A4.0,4.0 0 0 1 3268.50,1984.7 Z M3278.45,1980.6 H3286.45 V1984.7 A4.0,4.0 0 0 1 3278.45,1984.7 Z M3288.40,1980.6 H3296.40 V1984.7 A4.0,4.0 0 0 1 3288.40,1984.7 Z M3298.35,1980.6 H3306.35 V1984.7 A4.0,4.0 0 0 1 3298.35,1984.7 Z M3308.30,1980.6 H3316.30 V1984.7 A4.0,4.0 0 0 1 3308.30,1984.7 Z M3318.25,1980.6 H3326.25 V1984.7 A4.0,4.0 0 0 1 3318.25,1984.7 Z M3328.20,1980.6 H3336.20 V1984.7 A4.0,4.0 0 0 1 3328.20,1984.7 Z M3338.15,1980.6 H3346.15 V1984.7 A4.0,4.0 0 0 1 3338.15,1984.7 Z M3348.10,1980.6 H3356.10 V1984.7 A4.0,4.0 0 0 1 3348.10,1984.7 Z M3358.05,1980.6 H3366.05 V1984.7 A4.0,4.0 0 0 1 3358.05,1984.7 Z M3368.00,1980.6 H3376.00 V1984.7 A4.0,4.0 0 0 1 3368.00,1984.7 Z" fill="#8289ff"/><rect x="2194" y="1992.5" width="1198" height="1.6" fill="#3a3a3d"/><rect x="2193.7" y="1993" width="1.6" height="12" fill="#3a3a3d"/><rect x="2442.4" y="1993" width="1.6" height="12" fill="#3a3a3d"/><rect x="2691.1" y="1993" width="1.6" height="12" fill="#3a3a3d"/><rect x="2939.8" y="1993" width="1.6" height="12" fill="#3a3a3d"/><rect x="2162" y="2042.5" width="1262" height="2" fill="#1e1e21"/><rect x="2314.6" y="2070.4" width="385" height="45" rx="10" fill="#18181b" stroke="#444447" stroke-width="2"/><circle cx="2346" cy="2091" r="10" stroke="#8a8a8e" stroke-width="2.4" fill="none"/><path d="M2353.5 2098.5 L2359.5 2104.5" stroke="#8a8a8e" stroke-width="2.4" stroke-linecap="round"/><rect x="2162" y="2141.5" width="1262" height="1.6" fill="#333336"/><rect x="2162" y="2143" width="1262" height="60" fill="#1e1e21"/><rect x="2162" y="2203" width="1262" height="1.8" fill="#38383b"/><rect x="2162" y="2204.8" width="1262" height="2.4" fill="#1b1b1e"/><rect x="2194.2" y="2163.3" width="23.7" height="23.5" rx="6" fill="#3a3a3d"/><rect x="2194.2" y="2217.2" width="23.7" height="23.6" rx="6" fill="#8289ff"/><rect x="2194.2" y="2263" width="23.7" height="23.7" rx="6" fill="#235587"/><rect x="2162" y="2253.5" width="1262" height="1.8" fill="#1b1b1e"/><rect x="2162" y="2298.6" width="1262" height="1.8" fill="#1b1b1e"/></svg>
<div class="t" style="left:2225.0px;top:1489.7px;font-size:21.7px;color:#a3a3a7;font-weight:400;font-family:'Liberation Sans', sans-serif;">2K max</div>
<div class="t" style="left:2200.5px;top:2003.2px;font-size:21px;color:#a3a3a7;font-weight:400;font-family:'Liberation Sans', sans-serif;">12:04:15</div>
<div class="t" style="left:2449.2px;top:2003.2px;font-size:21px;color:#a3a3a7;font-weight:400;font-family:'Liberation Sans', sans-serif;">12:10:30</div>
<div class="t" style="left:2697.9px;top:2003.2px;font-size:21px;color:#a3a3a7;font-weight:400;font-family:'Liberation Sans', sans-serif;">12:16:45</div>
<div class="t" style="left:2946.6px;top:2003.2px;font-size:21px;color:#a3a3a7;font-weight:400;font-family:'Liberation Sans', sans-serif;">12:23:00</div>
<div class="t" style="left:2194.5px;top:2080.7px;font-size:24px;color:#f2f2f3;font-weight:700;font-family:'Liberation Sans', sans-serif;">Legend</div>
<div class="t" style="left:2235.0px;top:2162.7px;font-size:24px;color:#b8b8bc;font-weight:400;font-family:'Liberation Mono', monospace;">kafka_id</div>
<svg width="3444" height="2597"><rect x="969.0" y="2217.0" width="7.5" height="7.4" fill="#4e4e50"/><rect x="983.3" y="2217.0" width="7.5" height="7.4" fill="#363638"/><rect x="997.7" y="2217.0" width="7.5" height="7.4" fill="#333335"/><rect x="1004.8" y="2217.0" width="7.5" height="7.4" fill="#363638"/><rect x="1012.0" y="2217.0" width="7.5" height="7.4" fill="#2c2c2e"/><rect x="1019.2" y="2217.0" width="7.5" height="7.4" fill="#666668"/><rect x="1033.5" y="2217.0" width="7.5" height="7.4" fill="#3e3e40"/><rect x="1040.7" y="2217.0" width="7.5" height="7.4" fill="#4e4e50"/><rect x="1047.8" y="2217.0" width="7.5" height="7.4" fill="#303032"/><rect x="1055.0" y="2217.0" width="7.5" height="7.4" fill="#363638"/><rect x="1069.3" y="2217.0" width="7.5" height="7.4" fill="#666668"/><rect x="1076.5" y="2217.0" width="7.5" height="7.4" fill="#48484a"/><rect x="1083.7" y="2217.0" width="7.5" height="7.4" fill="#48484a"/><rect x="1090.8" y="2217.0" width="7.5" height="7.4" fill="#2a2a2c"/><rect x="969.0" y="2224.1" width="7.5" height="7.4" fill="#3a3a3c"/><rect x="983.3" y="2224.1" width="7.5" height="7.4" fill="#333335"/><rect x="1004.8" y="2224.1" width="7.5" height="7.4" fill="#303032"/><rect x="1019.2" y="2224.1" width="7.5" height="7.4" fill="#2a2a2c"/><rect x="1026.3" y="2224.1" width="7.5" height="7.4" fill="#555557"/><rect x="1033.5" y="2224.1" width="7.5" height="7.4" fill="#3a3a3c"/><rect x="1040.7" y="2224.1" width="7.5" height="7.4" fill="#2c2c2e"/><rect x="1055.0" y="2224.1" width="7.5" height="7.4" fill="#333335"/><rect x="1069.3" y="2224.1" width="7.5" height="7.4" fill="#2e2e30"/><rect x="1076.5" y="2224.1" width="7.5" height="7.4" fill="#5c5c5e"/><rect x="1083.7" y="2224.1" width="7.5" height="7.4" fill="#4e4e50"/><rect x="969.0" y="2231.2" width="7.5" height="7.4" fill="#3a3a3c"/><rect x="983.3" y="2231.2" width="7.5" height="7.4" fill="#5c5c5e"/><rect x="990.5" y="2231.2" width="7.5" height="7.4" fill="#2a2a2c"/><rect x="1004.8" y="2231.2" width="7.5" height="7.4" fill="#5c5c5e"/><rect x="1012.0" y="2231.2" width="7.5" height="7.4" fill="#48484a"/><rect x="1019.2" y="2231.2" width="7.5" height="7.4" fill="#2a2a2c"/><rect x="1026.3" y="2231.2" width="7.5" height="7.4" fill="#2a2a2c"/><rect x="1047.8" y="2231.2" width="7.5" height="7.4" fill="#555557"/><rect x="1062.2" y="2231.2" width="7.5" height="7.4" fill="#2e2e30"/><rect x="1069.3" y="2231.2" width="7.5" height="7.4" fill="#2e2e30"/><rect x="1076.5" y="2231.2" width="7.5" height="7.4" fill="#3e3e40"/><rect x="1090.8" y="2231.2" width="7.5" height="7.4" fill="#48484a"/><rect x="969.0" y="2238.4" width="7.5" height="7.4" fill="#48484a"/><rect x="976.2" y="2238.4" width="7.5" height="7.4" fill="#3a3a3c"/><rect x="983.3" y="2238.4" width="7.5" height="7.4" fill="#4e4e50"/><rect x="990.5" y="2238.4" width="7.5" height="7.4" fill="#2c2c2e"/><rect x="1019.2" y="2238.4" width="7.5" height="7.4" fill="#5c5c5e"/><rect x="1026.3" y="2238.4" width="7.5" height="7.4" fill="#333335"/><rect x="1033.5" y="2238.4" width="7.5" height="7.4" fill="#666668"/><rect x="1040.7" y="2238.4" width="7.5" height="7.4" fill="#48484a"/><rect x="1047.8" y="2238.4" width="7.5" height="7.4" fill="#666668"/><rect x="1055.0" y="2238.4" width="7.5" height="7.4" fill="#48484a"/><rect x="1062.2" y="2238.4" width="7.5" height="7.4" fill="#2c2c2e"/><rect x="1069.3" y="2238.4" width="7.5" height="7.4" fill="#555557"/><rect x="1076.5" y="2238.4" width="7.5" height="7.4" fill="#303032"/><rect x="1083.7" y="2238.4" width="7.5" height="7.4" fill="#666668"/><rect x="1090.8" y="2238.4" width="7.5" height="7.4" fill="#424244"/><rect x="969.0" y="2263.0" width="7.5" height="7.4" fill="#2a2a2c"/><rect x="976.2" y="2263.0" width="7.5" height="7.4" fill="#2c2c2e"/><rect x="997.7" y="2263.0" width="7.5" height="7.4" fill="#3a3a3c"/><rect x="1004.8" y="2263.0" width="7.5" height="7.4" fill="#3e3e40"/><rect x="1012.0" y="2263.0" width="7.5" height="7.4" fill="#303032"/><rect x="1026.3" y="2263.0" width="7.5" height="7.4" fill="#5c5c5e"/><rect x="1033.5" y="2263.0" width="7.5" height="7.4" fill="#303032"/><rect x="1040.7" y="2263.0" width="7.5" height="7.4" fill="#666668"/><rect x="1047.8" y="2263.0" width="7.5" height="7.4" fill="#48484a"/><rect x="1055.0" y="2263.0" width="7.5" height="7.4" fill="#333335"/><rect x="1062.2" y="2263.0" width="7.5" height="7.4" fill="#303032"/><rect x="1069.3" y="2263.0" width="7.5" height="7.4" fill="#2e2e30"/><rect x="1076.5" y="2263.0" width="7.5" height="7.4" fill="#363638"/><rect x="1083.7" y="2263.0" width="7.5" height="7.4" fill="#333335"/><rect x="1090.8" y="2263.0" width="7.5" height="7.4" fill="#3e3e40"/><rect x="983.3" y="2270.1" width="7.5" height="7.4" fill="#3e3e40"/><rect x="997.7" y="2270.1" width="7.5" height="7.4" fill="#303032"/><rect x="1004.8" y="2270.1" width="7.5" height="7.4" fill="#424244"/><rect x="1012.0" y="2270.1" width="7.5" height="7.4" fill="#2e2e30"/><rect x="1019.2" y="2270.1" width="7.5" height="7.4" fill="#363638"/><rect x="1026.3" y="2270.1" width="7.5" height="7.4" fill="#2c2c2e"/><rect x="1033.5" y="2270.1" width="7.5" height="7.4" fill="#363638"/><rect x="1040.7" y="2270.1" width="7.5" height="7.4" fill="#363638"/><rect x="1047.8" y="2270.1" width="7.5" height="7.4" fill="#555557"/><rect x="1062.2" y="2270.1" width="7.5" height="7.4" fill="#3e3e40"/><rect x="1076.5" y="2270.1" width="7.5" height="7.4" fill="#2a2a2c"/><rect x="1083.7" y="2270.1" width="7.5" height="7.4" fill="#5c5c5e"/><rect x="1090.8" y="2270.1" width="7.5" height="7.4" fill="#363638"/><rect x="969.0" y="2277.2" width="7.5" height="7.4" fill="#555557"/><rect x="983.3" y="2277.2" width="7.5" height="7.4" fill="#3a3a3c"/><rect x="990.5" y="2277.2" width="7.5" height="7.4" fill="#2e2e30"/><rect x="997.7" y="2277.2" width="7.5" height="7.4" fill="#4e4e50"/><rect x="1004.8" y="2277.2" width="7.5" height="7.4" fill="#2a2a2c"/><rect x="1019.2" y="2277.2" width="7.5" height="7.4" fill="#363638"/><rect x="1026.3" y="2277.2" width="7.5" height="7.4" fill="#3a3a3c"/><rect x="1040.7" y="2277.2" width="7.5" height="7.4" fill="#4e4e50"/><rect x="1047.8" y="2277.2" width="7.5" height="7.4" fill="#5c5c5e"/><rect x="1062.2" y="2277.2" width="7.5" height="7.4" fill="#3a3a3c"/><rect x="1069.3" y="2277.2" width="7.5" height="7.4" fill="#333335"/><rect x="1076.5" y="2277.2" width="7.5" height="7.4" fill="#5c5c5e"/><rect x="1090.8" y="2277.2" width="7.5" height="7.4" fill="#5c5c5e"/><rect x="969.0" y="2284.4" width="7.5" height="7.4" fill="#3e3e40"/><rect x="976.2" y="2284.4" width="7.5" height="7.4" fill="#424244"/><rect x="990.5" y="2284.4" width="7.5" height="7.4" fill="#424244"/><rect x="1004.8" y="2284.4" width="7.5" height="7.4" fill="#3e3e40"/><rect x="1012.0" y="2284.4" width="7.5" height="7.4" fill="#333335"/><rect x="1019.2" y="2284.4" width="7.5" height="7.4" fill="#48484a"/><rect x="1026.3" y="2284.4" width="7.5" height="7.4" fill="#666668"/><rect x="1033.5" y="2284.4" width="7.5" height="7.4" fill="#363638"/><rect x="1047.8" y="2284.4" width="7.5" height="7.4" fill="#5c5c5e"/><rect x="1062.2" y="2284.4" width="7.5" height="7.4" fill="#333335"/><rect x="1076.5" y="2284.4" width="7.5" height="7.4" fill="#3e3e40"/><rect x="1083.7" y="2284.4" width="7.5" height="7.4" fill="#555557"/><rect x="1090.8" y="2284.4" width="7.5" height="7.4" fill="#2c2c2e"/><rect x="2235.0" y="2215.0" width="7.5" height="6.8" fill="#2a2a2c"/><rect x="2242.2" y="2215.0" width="7.5" height="6.8" fill="#2e2e30"/><rect x="2249.3" y="2215.0" width="7.5" height="6.8" fill="#303032"/><rect x="2256.4" y="2215.0" width="7.5" height="6.8" fill="#3a3a3c"/><rect x="2263.6" y="2215.0" width="7.5" height="6.8" fill="#555557"/><rect x="2285.1" y="2215.0" width="7.5" height="6.8" fill="#2e2e30"/><rect x="2292.2" y="2215.0" width="7.5" height="6.8" fill="#2c2c2e"/><rect x="2306.5" y="2215.0" width="7.5" height="6.8" fill="#666668"/><rect x="2313.7" y="2215.0" width="7.5" height="6.8" fill="#555557"/><rect x="2320.8" y="2215.0" width="7.5" height="6.8" fill="#555557"/><rect x="2327.9" y="2215.0" width="7.5" height="6.8" fill="#2c2c2e"/><rect x="2335.1" y="2215.0" width="7.5" height="6.8" fill="#555557"/><rect x="2349.4" y="2215.0" width="7.5" height="6.8" fill="#333335"/><rect x="2356.6" y="2215.0" width="7.5" height="6.8" fill="#2a2a2c"/><rect x="2363.7" y="2215.0" width="7.5" height="6.8" fill="#2a2a2c"/><rect x="2370.8" y="2215.0" width="7.5" height="6.8" fill="#555557"/><rect x="2235.0" y="2221.5" width="7.5" height="6.8" fill="#2e2e30"/><rect x="2242.2" y="2221.5" width="7.5" height="6.8" fill="#2e2e30"/><rect x="2249.3" y="2221.5" width="7.5" height="6.8" fill="#303032"/><rect x="2256.4" y="2221.5" width="7.5" height="6.8" fill="#4e4e50"/><rect x="2270.8" y="2221.5" width="7.5" height="6.8" fill="#2c2c2e"/><rect x="2285.1" y="2221.5" width="7.5" height="6.8" fill="#3a3a3c"/><rect x="2292.2" y="2221.5" width="7.5" height="6.8" fill="#3e3e40"/><rect x="2299.3" y="2221.5" width="7.5" height="6.8" fill="#2a2a2c"/><rect x="2313.7" y="2221.5" width="7.5" height="6.8" fill="#2e2e30"/><rect x="2320.8" y="2221.5" width="7.5" height="6.8" fill="#2e2e30"/><rect x="2335.1" y="2221.5" width="7.5" height="6.8" fill="#4e4e50"/><rect x="2342.2" y="2221.5" width="7.5" height="6.8" fill="#424244"/><rect x="2349.4" y="2221.5" width="7.5" height="6.8" fill="#2a2a2c"/><rect x="2363.7" y="2221.5" width="7.5" height="6.8" fill="#48484a"/><rect x="2370.8" y="2221.5" width="7.5" height="6.8" fill="#3e3e40"/><rect x="2242.2" y="2228.0" width="7.5" height="6.8" fill="#363638"/><rect x="2249.3" y="2228.0" width="7.5" height="6.8" fill="#424244"/><rect x="2277.9" y="2228.0" width="7.5" height="6.8" fill="#2e2e30"/><rect x="2285.1" y="2228.0" width="7.5" height="6.8" fill="#555557"/><rect x="2292.2" y="2228.0" width="7.5" height="6.8" fill="#555557"/><rect x="2299.3" y="2228.0" width="7.5" height="6.8" fill="#424244"/><rect x="2320.8" y="2228.0" width="7.5" height="6.8" fill="#2a2a2c"/><rect x="2335.1" y="2228.0" width="7.5" height="6.8" fill="#555557"/><rect x="2342.2" y="2228.0" width="7.5" height="6.8" fill="#48484a"/><rect x="2349.4" y="2228.0" width="7.5" height="6.8" fill="#4e4e50"/><rect x="2356.6" y="2228.0" width="7.5" height="6.8" fill="#3e3e40"/><rect x="2235.0" y="2234.5" width="7.5" height="6.8" fill="#363638"/><rect x="2249.3" y="2234.5" width="7.5" height="6.8" fill="#303032"/><rect x="2285.1" y="2234.5" width="7.5" height="6.8" fill="#363638"/><rect x="2292.2" y="2234.5" width="7.5" height="6.8" fill="#424244"/><rect x="2299.3" y="2234.5" width="7.5" height="6.8" fill="#48484a"/><rect x="2306.5" y="2234.5" width="7.5" height="6.8" fill="#48484a"/><rect x="2320.8" y="2234.5" width="7.5" height="6.8" fill="#333335"/><rect x="2342.2" y="2234.5" width="7.5" height="6.8" fill="#666668"/><rect x="2356.6" y="2234.5" width="7.5" height="6.8" fill="#5c5c5e"/><rect x="2363.7" y="2234.5" width="7.5" height="6.8" fill="#3a3a3c"/><rect x="2235.0" y="2261.0" width="7.5" height="6.8" fill="#3a3a3c"/><rect x="2242.2" y="2261.0" width="7.5" height="6.8" fill="#2a2a2c"/><rect x="2249.3" y="2261.0" width="7.5" height="6.8" fill="#5c5c5e"/><rect x="2256.4" y="2261.0" width="7.5" height="6.8" fill="#3a3a3c"/><rect x="2263.6" y="2261.0" width="7.5" height="6.8" fill="#2c2c2e"/><rect x="2270.8" y="2261.0" width="7.5" height="6.8" fill="#3a3a3c"/><rect x="2277.9" y="2261.0" width="7.5" height="6.8" fill="#555557"/><rect x="2292.2" y="2261.0" width="7.5" height="6.8" fill="#3e3e40"/><rect x="2299.3" y="2261.0" width="7.5" height="6.8" fill="#2c2c2e"/><rect x="2306.5" y="2261.0" width="7.5" height="6.8" fill="#666668"/><rect x="2313.7" y="2261.0" width="7.5" height="6.8" fill="#303032"/><rect x="2320.8" y="2261.0" width="7.5" height="6.8" fill="#333335"/><rect x="2327.9" y="2261.0" width="7.5" height="6.8" fill="#363638"/><rect x="2335.1" y="2261.0" width="7.5" height="6.8" fill="#424244"/><rect x="2356.6" y="2261.0" width="7.5" height="6.8" fill="#48484a"/><rect x="2363.7" y="2261.0" width="7.5" height="6.8" fill="#4e4e50"/><rect x="2235.0" y="2267.5" width="7.5" height="6.8" fill="#666668"/><rect x="2242.2" y="2267.5" width="7.5" height="6.8" fill="#4e4e50"/><rect x="2256.4" y="2267.5" width="7.5" height="6.8" fill="#2c2c2e"/><rect x="2263.6" y="2267.5" width="7.5" height="6.8" fill="#666668"/><rect x="2270.8" y="2267.5" width="7.5" height="6.8" fill="#4e4e50"/><rect x="2277.9" y="2267.5" width="7.5" height="6.8" fill="#48484a"/><rect x="2292.2" y="2267.5" width="7.5" height="6.8" fill="#555557"/><rect x="2306.5" y="2267.5" width="7.5" height="6.8" fill="#666668"/><rect x="2313.7" y="2267.5" width="7.5" height="6.8" fill="#303032"/><rect x="2320.8" y="2267.5" width="7.5" height="6.8" fill="#424244"/><rect x="2327.9" y="2267.5" width="7.5" height="6.8" fill="#3e3e40"/><rect x="2335.1" y="2267.5" width="7.5" height="6.8" fill="#2c2c2e"/><rect x="2356.6" y="2267.5" width="7.5" height="6.8" fill="#3e3e40"/><rect x="2363.7" y="2267.5" width="7.5" height="6.8" fill="#555557"/><rect x="2370.8" y="2267.5" width="7.5" height="6.8" fill="#333335"/><rect x="2235.0" y="2274.0" width="7.5" height="6.8" fill="#48484a"/><rect x="2242.2" y="2274.0" width="7.5" height="6.8" fill="#2e2e30"/><rect x="2249.3" y="2274.0" width="7.5" height="6.8" fill="#5c5c5e"/><rect x="2256.4" y="2274.0" width="7.5" height="6.8" fill="#2e2e30"/><rect x="2270.8" y="2274.0" width="7.5" height="6.8" fill="#2e2e30"/><rect x="2277.9" y="2274.0" width="7.5" height="6.8" fill="#303032"/><rect x="2285.1" y="2274.0" width="7.5" height="6.8" fill="#5c5c5e"/><rect x="2292.2" y="2274.0" width="7.5" height="6.8" fill="#333335"/><rect x="2306.5" y="2274.0" width="7.5" height="6.8" fill="#48484a"/><rect x="2313.7" y="2274.0" width="7.5" height="6.8" fill="#5c5c5e"/><rect x="2320.8" y="2274.0" width="7.5" height="6.8" fill="#3a3a3c"/><rect x="2327.9" y="2274.0" width="7.5" height="6.8" fill="#666668"/><rect x="2342.2" y="2274.0" width="7.5" height="6.8" fill="#3a3a3c"/><rect x="2363.7" y="2274.0" width="7.5" height="6.8" fill="#555557"/><rect x="2370.8" y="2274.0" width="7.5" height="6.8" fill="#4e4e50"/><rect x="2235.0" y="2280.5" width="7.5" height="6.8" fill="#666668"/><rect x="2242.2" y="2280.5" width="7.5" height="6.8" fill="#303032"/><rect x="2256.4" y="2280.5" width="7.5" height="6.8" fill="#4e4e50"/><rect x="2263.6" y="2280.5" width="7.5" height="6.8" fill="#363638"/><rect x="2270.8" y="2280.5" width="7.5" height="6.8" fill="#2e2e30"/><rect x="2292.2" y="2280.5" width="7.5" height="6.8" fill="#333335"/><rect x="2299.3" y="2280.5" width="7.5" height="6.8" fill="#2c2c2e"/><rect x="2306.5" y="2280.5" width="7.5" height="6.8" fill="#5c5c5e"/><rect x="2320.8" y="2280.5" width="7.5" height="6.8" fill="#363638"/><rect x="2335.1" y="2280.5" width="7.5" height="6.8" fill="#2c2c2e"/><rect x="2349.4" y="2280.5" width="7.5" height="6.8" fill="#48484a"/><rect x="2356.6" y="2280.5" width="7.5" height="6.8" fill="#363638"/><rect x="2363.7" y="2280.5" width="7.5" height="6.8" fill="#424244"/><rect x="2370.8" y="2280.5" width="7.5" height="6.8" fill="#5c5c5e"/></svg>
<div class="t" style="left:955.0px;top:2221.6px;font-size:24px;color:#c0c0c4;font-weight:400;font-family:'Liberation Mono', monospace;">l</div>
<div class="t" style="left:955.0px;top:2267.6px;font-size:24px;color:#c0c0c4;font-weight:400;font-family:'Liberation Mono', monospace;">l</div>
<div class="r" style="left:3438.0px;top:1037.5px;width:6.0px;height:1560.0px;background:#adadb0;"></div>
</body></html>
